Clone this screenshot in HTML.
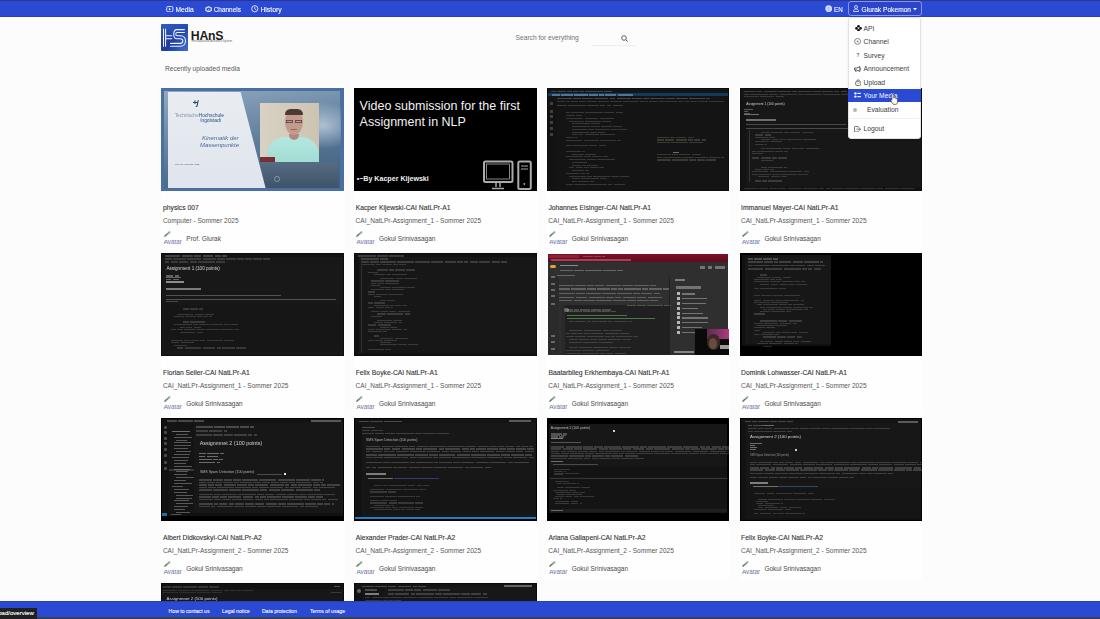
<!DOCTYPE html><html><head><meta charset="utf-8"><style>
*{box-sizing:border-box}
html,body{margin:0;padding:0}
body{width:1100px;height:619px;overflow:hidden;position:relative;background:#fcfcfc;font-family:"Liberation Sans", sans-serif}
.a{position:absolute}
.th{position:absolute;overflow:hidden;width:182.5px;height:102.6px}
.bl{filter:blur(0.35px)}
.ln{position:absolute;height:1px}
</style></head><body>
<div class="a" style="left:160.90px;top:87.70px;width:184.00px;height:162px;background:#fefefe"></div>
<div class="a" style="left:353.60px;top:87.70px;width:184.00px;height:162px;background:#fefefe"></div>
<div class="a" style="left:546.30px;top:87.70px;width:184.00px;height:162px;background:#fefefe"></div>
<div class="a" style="left:739.00px;top:87.70px;width:184.00px;height:162px;background:#fefefe"></div>
<div class="a" style="left:160.90px;top:252.90px;width:184.00px;height:162px;background:#fefefe"></div>
<div class="a" style="left:353.60px;top:252.90px;width:184.00px;height:162px;background:#fefefe"></div>
<div class="a" style="left:546.30px;top:252.90px;width:184.00px;height:162px;background:#fefefe"></div>
<div class="a" style="left:739.00px;top:252.90px;width:184.00px;height:162px;background:#fefefe"></div>
<div class="a" style="left:160.90px;top:417.80px;width:184.00px;height:162px;background:#fefefe"></div>
<div class="a" style="left:353.60px;top:417.80px;width:184.00px;height:162px;background:#fefefe"></div>
<div class="a" style="left:546.30px;top:417.80px;width:184.00px;height:162px;background:#fefefe"></div>
<div class="a" style="left:739.00px;top:417.80px;width:184.00px;height:162px;background:#fefefe"></div>
<div class="a" style="left:160.90px;top:582.80px;width:184.00px;height:40px;background:#fff"></div>
<div class="a" style="left:353.60px;top:582.80px;width:184.00px;height:40px;background:#fff"></div>
<div class="th bl" style="left:161.40px;top:88.20px"><div class="a" style="left:0.00px;top:0.00px;width:182.50px;height:102.60px;background:#4a6fa2;"></div><div class="a" style="left:3px;top:2.5px;width:176px;height:97.5px;background:linear-gradient(170deg,#92aac0 0%,#6f8ba8 35%,#4f6e90 70%,#3d5c80 100%)"></div><div class="a" style="left:120px;top:10px;width:60px;height:55px;background:radial-gradient(ellipse at 70% 50%,rgba(235,245,255,.55),rgba(235,245,255,0) 60%)"></div><div class="a" style="left:98.60px;top:74.20px;width:78.00px;height:25.80px;background:linear-gradient(180deg,#566c82,#3f5368);"></div><div class="a" style="left:113px;top:88px;width:5.5px;height:5.5px;border-radius:50%;border:0.8px solid rgba(190,200,215,.5)"></div><div class="a" style="left:6.2px;top:3.9px;width:98px;height:95.8px;background:linear-gradient(180deg,#e9edf2,#dfe5ec);clip-path:polygon(0 0,74.5% 0,100% 100%,0 100%)"></div><div class="a" style="left:98.60px;top:14.90px;width:59.30px;height:59.30px;background:linear-gradient(90deg,#d9d2c4,#cdc3b2);"></div><div class="a" style="left:106px;top:48.5px;width:52px;height:25.7px;background:linear-gradient(180deg,#b3e8df,#a3dcd3);border-radius:18px 18px 0 0"></div><div class="a" style="left:128px;top:46px;width:10px;height:6px;background:#b08a80;border-radius:0 0 5px 5px"></div><div class="a" style="left:123.8px;top:22px;width:18px;height:25px;background:#c39a8c;border-radius:46% 46% 50% 50%"></div><div class="a" style="left:123.5px;top:21px;width:18.6px;height:6px;background:#4d3a34;border-radius:9px 9px 1px 1px"></div><div class="a" style="left:125px;top:31.5px;width:7px;height:3.2px;border:0.5px solid rgba(60,50,50,.7)"></div><div class="a" style="left:133.5px;top:31.5px;width:7px;height:3.2px;border:0.5px solid rgba(60,50,50,.7)"></div><div class="a" style="left:130.00px;top:40.50px;width:6.00px;height:1.20px;background:rgba(120,70,60,.6);"></div><div class="a" style="left:98.60px;top:69.30px;width:15.00px;height:5.00px;background:#7a2e34;"></div><div style="position:absolute;left:31px;top:11px;font-size:8px;font-style:italic;font-weight:bold;color:#1f3c78;line-height:8px;letter-spacing:-0.5px">+j</div><div style="position:absolute;left:13.30px;top:24.37px;font-size:5.0px;line-height:5.0px;color:#8797b0;font-weight:400;white-space:nowrap;letter-spacing:-0.1px">Technische<span style="color:#2f528a">Hochschule</span></div><div style="position:absolute;left:38.80px;top:29.37px;font-size:5.0px;line-height:5.0px;color:#2f528a;font-weight:400;white-space:nowrap;letter-spacing:-0.1px">Ingolstadt</div><div style="position:absolute;left:40.50px;top:47.12px;font-size:6.0px;line-height:6.0px;color:#4d6890;font-weight:400;white-space:nowrap;font-style:italic">Kinematik der</div><div style="position:absolute;left:38.60px;top:54.12px;font-size:6.0px;line-height:6.0px;color:#4d6890;font-weight:400;white-space:nowrap;font-style:italic">Massenpunkte</div><div style="position:absolute;left:13.60px;top:76.17px;font-size:2.4px;line-height:2.4px;color:#556;font-weight:400;white-space:nowrap;">Prof. Dr. Thomas Haag</div></div>
<div style="position:absolute;left:163.00px;top:204.96px;font-size:6.78px;line-height:6.78px;color:#363636;font-weight:400;white-space:nowrap;-webkit-text-stroke:0.12px #363636">physics 007</div>
<div style="position:absolute;left:162.90px;top:218.06px;font-size:6.55px;line-height:6.55px;color:#585858;font-weight:400;white-space:nowrap;">Computer - Sommer 2025</div>
<svg class="a" style="left:163.70px;top:231.20px" width="7" height="6" viewBox="0 0 7 6"><path d="M1 5.2 L5.5 1.2" stroke="#7f9a80" stroke-width="1.7" stroke-linecap="round"/><path d="M1.2 4.6 L2.6 3.4" stroke="#4a7a3a" stroke-width="1"/><rect x="4.4" y="0.6" width="1.8" height="1.6" fill="#9ab0c8" transform="rotate(-40 5.3 1.4)"/></svg>
<div class="a" style="left:162.90px;top:239.50px;width:22px;height:6px;overflow:hidden"><div style="position:absolute;left:0.90px;top:-0.43px;font-size:6.3px;line-height:6.3px;color:#6f74a8;font-weight:400;white-space:nowrap;">Avatar</div></div>
<div style="position:absolute;left:186.30px;top:236.20px;font-size:6.5px;line-height:6.5px;color:#4a4a4a;font-weight:400;white-space:nowrap;">Prof. Glurak</div>
<div class="th" style="left:354.10px;top:88.20px"><div class="a" style="left:0.00px;top:0.00px;width:182.50px;height:102.60px;background:#000;"></div><div style="position:absolute;left:5.50px;top:12.02px;font-size:12.5px;line-height:12.5px;color:#f2f2f2;font-weight:400;white-space:nowrap;">Video submission for the first</div><div style="position:absolute;left:5.50px;top:27.32px;font-size:12.5px;line-height:12.5px;color:#f2f2f2;font-weight:400;white-space:nowrap;">Assignment in NLP</div><div style="position:absolute;left:2.60px;top:87.59px;font-size:7.1px;line-height:7.1px;color:#f0f0f0;font-weight:700;white-space:nowrap;">&bull;~By Kacper Kijewski</div><svg class="a" style="left:128px;top:72px" width="52" height="31" viewBox="0 0 52 31">
<rect x="2" y="1.5" width="28.5" height="20.5" rx="1.5" fill="none" stroke="#ababab" stroke-width="2"/>
<rect x="4.5" y="4" width="23" height="15" fill="none" stroke="#a8a8a8" stroke-width="0.8"/>
<path d="M14 22v5M18 22v5M10 28.5h12" stroke="#a8a8a8" stroke-width="1.5" fill="none"/>
<rect x="36.3" y="1.5" width="12.5" height="27.5" rx="1.5" fill="none" stroke="#ababab" stroke-width="2"/>
<path d="M39 6h7M39 9h7" stroke="#a8a8a8" stroke-width="1.1"/>
<circle cx="42.3" cy="24" r="0.9" fill="#a8a8a8"/>
</svg></div>
<div style="position:absolute;left:355.70px;top:204.96px;font-size:6.78px;line-height:6.78px;color:#363636;font-weight:400;white-space:nowrap;-webkit-text-stroke:0.12px #363636">Kacper Kijewski-CAI NatLPr-A1</div>
<div style="position:absolute;left:355.60px;top:218.06px;font-size:6.55px;line-height:6.55px;color:#585858;font-weight:400;white-space:nowrap;">CAI_NatLPr-Assignment_1 - Sommer 2025</div>
<svg class="a" style="left:356.40px;top:231.20px" width="7" height="6" viewBox="0 0 7 6"><path d="M1 5.2 L5.5 1.2" stroke="#7f9a80" stroke-width="1.7" stroke-linecap="round"/><path d="M1.2 4.6 L2.6 3.4" stroke="#4a7a3a" stroke-width="1"/><rect x="4.4" y="0.6" width="1.8" height="1.6" fill="#9ab0c8" transform="rotate(-40 5.3 1.4)"/></svg>
<div class="a" style="left:355.60px;top:239.50px;width:22px;height:6px;overflow:hidden"><div style="position:absolute;left:0.90px;top:-0.43px;font-size:6.3px;line-height:6.3px;color:#6f74a8;font-weight:400;white-space:nowrap;">Avatar</div></div>
<div style="position:absolute;left:379.00px;top:236.20px;font-size:6.5px;line-height:6.5px;color:#4a4a4a;font-weight:400;white-space:nowrap;">Gokul Srinivasagan</div>
<div class="th bl" style="left:546.80px;top:88.20px"><div class="a" style="left:0.00px;top:0.00px;width:182.50px;height:102.60px;background:#0d0d0d;"></div><div class="a" style="left:1.00px;top:1.00px;width:180.50px;height:100.60px;background:#141414;"></div><div class="a" style="left:1.00px;top:1.00px;width:180.50px;height:4.00px;background:#151515;"></div><div class="a" style="left:0;top:0;width:100%;height:100%;opacity:.75"><div class="a" style="left:4.00px;top:2.50px;width:5.01px;height:1.30px;background:rgba(200,200,200,.35);"></div><div class="a" style="left:10.21px;top:2.50px;width:9.12px;height:1.30px;background:rgba(200,200,200,.35);"></div><div class="a" style="left:20.53px;top:2.50px;width:4.52px;height:1.30px;background:rgba(200,200,200,.35);"></div><div class="a" style="left:26.26px;top:2.50px;width:4.98px;height:1.30px;background:rgba(200,200,200,.35);"></div><div class="a" style="left:32.44px;top:2.50px;width:4.83px;height:1.30px;background:rgba(200,200,200,.35);"></div><div class="a" style="left:38.46px;top:2.50px;width:17.26px;height:1.30px;background:rgba(200,200,200,.35);"></div><div class="a" style="left:56.93px;top:2.50px;width:8.58px;height:1.30px;background:rgba(200,200,200,.35);"></div></div><div class="a" style="left:1.00px;top:5.00px;width:180.50px;height:3.20px;background:#123a5e;"></div><div class="a" style="left:0;top:0;width:100%;height:100%;opacity:.75"><div class="a" style="left:5.00px;top:6.20px;width:8.05px;height:1.30px;background:rgba(170,200,230,.55);"></div><div class="a" style="left:14.25px;top:6.20px;width:11.99px;height:1.30px;background:rgba(170,200,230,.55);"></div><div class="a" style="left:27.45px;top:6.20px;width:13.55px;height:1.30px;background:rgba(170,200,230,.55);"></div><div class="a" style="left:42.20px;top:6.20px;width:9.21px;height:1.30px;background:rgba(170,200,230,.55);"></div><div class="a" style="left:52.61px;top:6.20px;width:4.88px;height:1.30px;background:rgba(170,200,230,.55);"></div><div class="a" style="left:58.69px;top:6.20px;width:10.95px;height:1.30px;background:rgba(170,200,230,.55);"></div><div class="a" style="left:70.84px;top:6.20px;width:14.88px;height:1.30px;background:rgba(170,200,230,.55);"></div></div><div class="a" style="left:1.00px;top:8.20px;width:180.50px;height:3.00px;background:#141414;"></div><div class="a" style="left:0;top:0;width:100%;height:100%;opacity:.75"><div class="a" style="left:10.00px;top:9.50px;width:15.12px;height:1.30px;background:rgba(200,200,200,.35);"></div><div class="a" style="left:26.32px;top:9.50px;width:7.42px;height:1.30px;background:rgba(200,200,200,.35);"></div><div class="a" style="left:34.94px;top:9.50px;width:11.35px;height:1.30px;background:rgba(200,200,200,.35);"></div><div class="a" style="left:47.49px;top:9.50px;width:14.21px;height:1.30px;background:rgba(200,200,200,.35);"></div><div class="a" style="left:62.90px;top:9.50px;width:5.65px;height:1.30px;background:rgba(200,200,200,.35);"></div><div class="a" style="left:69.76px;top:9.50px;width:14.60px;height:1.30px;background:rgba(200,200,200,.35);"></div><div class="a" style="left:85.56px;top:9.50px;width:9.90px;height:1.30px;background:rgba(200,200,200,.35);"></div><div class="a" style="left:96.66px;top:9.50px;width:5.09px;height:1.30px;background:rgba(200,200,200,.35);"></div><div class="a" style="left:102.95px;top:9.50px;width:15.05px;height:1.30px;background:rgba(200,200,200,.35);"></div><div class="a" style="left:119.19px;top:9.50px;width:8.76px;height:1.30px;background:rgba(200,200,200,.35);"></div><div class="a" style="left:129.16px;top:9.50px;width:12.12px;height:1.30px;background:rgba(200,200,200,.35);"></div><div class="a" style="left:142.47px;top:9.50px;width:15.76px;height:1.30px;background:rgba(200,200,200,.35);"></div><div class="a" style="left:159.43px;top:9.50px;width:4.18px;height:1.30px;background:rgba(200,200,200,.35);"></div></div><div class="a" style="left:0;top:0;width:100%;height:100%;opacity:.75"><div class="a" style="left:10.00px;top:13.00px;width:7.98px;height:1.30px;background:rgba(200,200,200,.25);"></div><div class="a" style="left:19.18px;top:13.00px;width:4.32px;height:1.30px;background:rgba(200,200,200,.25);"></div><div class="a" style="left:24.70px;top:13.00px;width:6.35px;height:1.30px;background:rgba(200,200,200,.25);"></div><div class="a" style="left:32.25px;top:13.00px;width:7.05px;height:1.30px;background:rgba(200,200,200,.25);"></div><div class="a" style="left:40.51px;top:13.00px;width:9.57px;height:1.30px;background:rgba(200,200,200,.25);"></div><div class="a" style="left:51.28px;top:13.00px;width:10.95px;height:1.30px;background:rgba(200,200,200,.25);"></div><div class="a" style="left:63.43px;top:13.00px;width:11.69px;height:1.30px;background:rgba(200,200,200,.25);"></div><div class="a" style="left:76.32px;top:13.00px;width:15.47px;height:1.30px;background:rgba(200,200,200,.25);"></div><div class="a" style="left:92.99px;top:13.00px;width:7.90px;height:1.30px;background:rgba(200,200,200,.25);"></div><div class="a" style="left:102.09px;top:13.00px;width:9.02px;height:1.30px;background:rgba(200,200,200,.25);"></div><div class="a" style="left:112.31px;top:13.00px;width:17.41px;height:1.30px;background:rgba(200,200,200,.25);"></div><div class="a" style="left:130.92px;top:13.00px;width:6.12px;height:1.30px;background:rgba(200,200,200,.25);"></div><div class="a" style="left:138.24px;top:13.00px;width:4.17px;height:1.30px;background:rgba(200,200,200,.25);"></div><div class="a" style="left:143.61px;top:13.00px;width:6.55px;height:1.30px;background:rgba(200,200,200,.25);"></div><div class="a" style="left:151.36px;top:13.00px;width:9.87px;height:1.30px;background:rgba(200,200,200,.25);"></div><div class="a" style="left:162.43px;top:13.00px;width:14.59px;height:1.30px;background:rgba(200,200,200,.25);"></div></div><div class="a" style="left:0;top:0;width:100%;height:100%;opacity:.75"><div class="a" style="left:10.00px;top:16.50px;width:10.39px;height:1.30px;background:rgba(200,200,200,.3);"></div><div class="a" style="left:21.59px;top:16.50px;width:17.33px;height:1.30px;background:rgba(200,200,200,.3);"></div><div class="a" style="left:40.12px;top:16.50px;width:11.83px;height:1.30px;background:rgba(200,200,200,.3);"></div><div class="a" style="left:53.15px;top:16.50px;width:5.45px;height:1.30px;background:rgba(200,200,200,.3);"></div><div class="a" style="left:59.80px;top:16.50px;width:4.87px;height:1.30px;background:rgba(200,200,200,.3);"></div><div class="a" style="left:65.87px;top:16.50px;width:10.17px;height:1.30px;background:rgba(200,200,200,.3);"></div></div><div class="a" style="left:1.00px;top:11.00px;width:8.00px;height:90.60px;background:#121212;"></div><div class="a" style="left:3.50px;top:14.00px;width:3.00px;height:2.50px;background:rgba(150,150,150,.35);"></div><div class="a" style="left:3.50px;top:22.00px;width:3.00px;height:2.50px;background:rgba(150,150,150,.35);"></div><div class="a" style="left:3.50px;top:27.00px;width:3.00px;height:2.50px;background:rgba(150,150,150,.35);"></div><div class="a" style="left:3.50px;top:33.00px;width:3.00px;height:2.50px;background:rgba(150,150,150,.35);"></div><div class="a" style="left:3.50px;top:39.00px;width:3.00px;height:2.50px;background:rgba(150,150,150,.35);"></div><div class="a" style="left:3.50px;top:45.00px;width:3.00px;height:2.50px;background:rgba(150,150,150,.35);"></div><div class="a" style="left:0;top:0;width:100%;height:100%;opacity:.75"><div class="a" style="left:19.00px;top:24.25px;width:4.36px;height:1.00px;background:rgba(210,200,180,.26);"></div><div class="a" style="left:24.56px;top:24.25px;width:12.60px;height:1.00px;background:rgba(170,195,170,.28);"></div><div class="a" style="left:38.35px;top:24.25px;width:17.38px;height:1.00px;background:rgba(210,200,180,.26);"></div><div class="a" style="left:56.93px;top:24.25px;width:10.64px;height:1.00px;background:rgba(185,200,215,.28);"></div><div class="a" style="left:68.77px;top:24.25px;width:7.68px;height:1.00px;background:rgba(210,200,180,.26);"></div><div class="a" style="left:19.00px;top:27.00px;width:8.80px;height:1.00px;background:rgba(180,180,180,.3);"></div><div class="a" style="left:29.00px;top:27.00px;width:6.26px;height:1.00px;background:rgba(210,200,180,.26);"></div><div class="a" style="left:19.00px;top:29.75px;width:17.70px;height:1.00px;background:rgba(170,195,170,.28);"></div><div class="a" style="left:37.90px;top:29.75px;width:13.75px;height:1.00px;background:rgba(170,195,170,.28);"></div><div class="a" style="left:52.85px;top:29.75px;width:14.06px;height:1.00px;background:rgba(200,200,200,.26);"></div><div class="a" style="left:22.00px;top:32.50px;width:15.36px;height:1.00px;background:rgba(210,200,180,.26);"></div><div class="a" style="left:38.56px;top:32.50px;width:15.94px;height:1.00px;background:rgba(210,200,180,.26);"></div><div class="a" style="left:55.70px;top:32.50px;width:8.12px;height:1.00px;background:rgba(210,200,180,.26);"></div><div class="a" style="left:25.00px;top:35.25px;width:17.85px;height:1.00px;background:rgba(190,190,190,.28);"></div><div class="a" style="left:44.05px;top:35.25px;width:8.72px;height:1.00px;background:rgba(210,200,180,.26);"></div><div class="a" style="left:25.00px;top:38.00px;width:17.83px;height:1.00px;background:rgba(180,180,180,.3);"></div><div class="a" style="left:44.03px;top:38.00px;width:9.10px;height:1.00px;background:rgba(200,200,200,.26);"></div><div class="a" style="left:54.34px;top:38.00px;width:10.58px;height:1.00px;background:rgba(185,200,215,.28);"></div><div class="a" style="left:66.12px;top:38.00px;width:9.31px;height:1.00px;background:rgba(180,180,180,.3);"></div><div class="a" style="left:25.00px;top:40.75px;width:15.20px;height:1.00px;background:rgba(180,180,180,.3);"></div><div class="a" style="left:41.40px;top:40.75px;width:5.68px;height:1.00px;background:rgba(180,180,180,.3);"></div><div class="a" style="left:48.27px;top:40.75px;width:14.50px;height:1.00px;background:rgba(170,195,170,.28);"></div><div class="a" style="left:63.98px;top:40.75px;width:6.50px;height:1.00px;background:rgba(170,195,170,.28);"></div><div class="a" style="left:71.67px;top:40.75px;width:8.66px;height:1.00px;background:rgba(170,195,170,.28);"></div><div class="a" style="left:25.00px;top:43.50px;width:17.26px;height:1.00px;background:rgba(180,180,180,.3);"></div><div class="a" style="left:43.46px;top:43.50px;width:6.38px;height:1.00px;background:rgba(200,200,200,.26);"></div><div class="a" style="left:51.04px;top:43.50px;width:7.12px;height:1.00px;background:rgba(180,180,180,.3);"></div><div class="a" style="left:25.00px;top:46.25px;width:6.18px;height:1.00px;background:rgba(170,195,170,.28);"></div><div class="a" style="left:32.38px;top:46.25px;width:4.30px;height:1.00px;background:rgba(170,195,170,.28);"></div><div class="a" style="left:37.88px;top:46.25px;width:14.17px;height:1.00px;background:rgba(180,180,180,.3);"></div><div class="a" style="left:53.25px;top:46.25px;width:14.61px;height:1.00px;background:rgba(170,195,170,.28);"></div><div class="a" style="left:19.00px;top:49.00px;width:8.10px;height:1.00px;background:rgba(210,200,180,.26);"></div><div class="a" style="left:28.30px;top:49.00px;width:2.10px;height:1.00px;background:rgba(200,200,200,.26);"></div><div class="a" style="left:19.00px;top:51.75px;width:16.57px;height:1.00px;background:rgba(170,195,170,.28);"></div><div class="a" style="left:36.77px;top:51.75px;width:15.41px;height:1.00px;background:rgba(170,195,170,.28);"></div><div class="a" style="left:53.38px;top:51.75px;width:15.58px;height:1.00px;background:rgba(170,195,170,.28);"></div><div class="a" style="left:70.16px;top:51.75px;width:4.34px;height:1.00px;background:rgba(210,200,180,.26);"></div><div class="a" style="left:19.00px;top:57.25px;width:6.41px;height:1.00px;background:rgba(200,200,200,.26);"></div><div class="a" style="left:26.61px;top:57.25px;width:14.15px;height:1.00px;background:rgba(200,200,200,.26);"></div><div class="a" style="left:41.97px;top:57.25px;width:8.56px;height:1.00px;background:rgba(200,200,200,.26);"></div><div class="a" style="left:51.73px;top:57.25px;width:7.70px;height:1.00px;background:rgba(200,200,200,.26);"></div><div class="a" style="left:19.00px;top:62.75px;width:14.81px;height:1.00px;background:rgba(190,190,190,.28);"></div><div class="a" style="left:35.01px;top:62.75px;width:3.55px;height:1.00px;background:rgba(190,190,190,.28);"></div><div class="a" style="left:25.00px;top:65.50px;width:12.49px;height:1.00px;background:rgba(170,195,170,.28);"></div><div class="a" style="left:38.69px;top:65.50px;width:10.33px;height:1.00px;background:rgba(210,200,180,.26);"></div><div class="a" style="left:19.00px;top:68.25px;width:16.92px;height:1.00px;background:rgba(170,195,170,.28);"></div><div class="a" style="left:37.12px;top:68.25px;width:6.84px;height:1.00px;background:rgba(170,195,170,.28);"></div><div class="a" style="left:45.16px;top:68.25px;width:9.83px;height:1.00px;background:rgba(170,195,170,.28);"></div><div class="a" style="left:56.19px;top:68.25px;width:5.02px;height:1.00px;background:rgba(190,190,190,.28);"></div><div class="a" style="left:22.00px;top:71.00px;width:17.15px;height:1.00px;background:rgba(200,200,200,.26);"></div><div class="a" style="left:40.35px;top:71.00px;width:9.13px;height:1.00px;background:rgba(200,200,200,.26);"></div><div class="a" style="left:50.68px;top:71.00px;width:17.55px;height:1.00px;background:rgba(190,190,190,.28);"></div><div class="a" style="left:25.00px;top:73.75px;width:15.65px;height:1.00px;background:rgba(185,200,215,.28);"></div><div class="a" style="left:25.00px;top:76.50px;width:8.99px;height:1.00px;background:rgba(170,195,170,.28);"></div><div class="a" style="left:35.19px;top:76.50px;width:4.27px;height:1.00px;background:rgba(200,200,200,.26);"></div><div class="a" style="left:40.67px;top:76.50px;width:10.17px;height:1.00px;background:rgba(170,195,170,.28);"></div><div class="a" style="left:22.00px;top:79.25px;width:5.58px;height:1.00px;background:rgba(190,190,190,.28);"></div><div class="a" style="left:28.78px;top:79.25px;width:7.20px;height:1.00px;background:rgba(190,190,190,.28);"></div><div class="a" style="left:37.18px;top:79.25px;width:5.18px;height:1.00px;background:rgba(200,200,200,.26);"></div><div class="a" style="left:43.56px;top:79.25px;width:7.79px;height:1.00px;background:rgba(185,200,215,.28);"></div><div class="a" style="left:52.54px;top:79.25px;width:5.07px;height:1.00px;background:rgba(190,190,190,.28);"></div><div class="a" style="left:25.00px;top:82.00px;width:11.99px;height:1.00px;background:rgba(210,200,180,.26);"></div><div class="a" style="left:38.19px;top:82.00px;width:4.28px;height:1.00px;background:rgba(180,180,180,.3);"></div><div class="a" style="left:19.00px;top:84.75px;width:12.88px;height:1.00px;background:rgba(190,190,190,.28);"></div><div class="a" style="left:33.08px;top:84.75px;width:5.17px;height:1.00px;background:rgba(190,190,190,.28);"></div><div class="a" style="left:39.45px;top:84.75px;width:2.99px;height:1.00px;background:rgba(190,190,190,.28);"></div><div class="a" style="left:22.00px;top:87.50px;width:16.97px;height:1.00px;background:rgba(200,200,200,.26);"></div><div class="a" style="left:40.17px;top:87.50px;width:4.60px;height:1.00px;background:rgba(185,200,215,.28);"></div><div class="a" style="left:45.98px;top:87.50px;width:17.13px;height:1.00px;background:rgba(185,200,215,.28);"></div><div class="a" style="left:64.31px;top:87.50px;width:7.67px;height:1.00px;background:rgba(170,195,170,.28);"></div><div class="a" style="left:73.18px;top:87.50px;width:8.54px;height:1.00px;background:rgba(185,200,215,.28);"></div><div class="a" style="left:25.00px;top:90.25px;width:7.79px;height:1.00px;background:rgba(200,200,200,.26);"></div><div class="a" style="left:33.99px;top:90.25px;width:17.92px;height:1.00px;background:rgba(190,190,190,.28);"></div><div class="a" style="left:53.11px;top:90.25px;width:6.89px;height:1.00px;background:rgba(200,200,200,.26);"></div><div class="a" style="left:25.00px;top:93.00px;width:5.49px;height:1.00px;background:rgba(185,200,215,.28);"></div><div class="a" style="left:31.69px;top:93.00px;width:10.05px;height:1.00px;background:rgba(185,200,215,.28);"></div><div class="a" style="left:42.94px;top:93.00px;width:4.35px;height:1.00px;background:rgba(210,200,180,.26);"></div><div class="a" style="left:19.00px;top:95.75px;width:6.78px;height:1.00px;background:rgba(170,195,170,.28);"></div><div class="a" style="left:26.98px;top:95.75px;width:14.20px;height:1.00px;background:rgba(170,195,170,.28);"></div><div class="a" style="left:42.38px;top:95.75px;width:17.75px;height:1.00px;background:rgba(170,195,170,.28);"></div><div class="a" style="left:61.33px;top:95.75px;width:4.20px;height:1.00px;background:rgba(170,195,170,.28);"></div><div class="a" style="left:66.73px;top:95.75px;width:11.39px;height:1.00px;background:rgba(170,195,170,.28);"></div></div><div class="a" style="left:0;top:0;width:100%;height:100%;opacity:.75"><div class="a" style="left:110.00px;top:48.50px;width:12.38px;height:1.30px;background:rgba(170,190,160,.3);"></div><div class="a" style="left:123.58px;top:48.50px;width:4.63px;height:1.30px;background:rgba(170,190,160,.3);"></div><div class="a" style="left:129.42px;top:48.50px;width:10.24px;height:1.30px;background:rgba(170,190,160,.3);"></div><div class="a" style="left:140.86px;top:48.50px;width:6.76px;height:1.30px;background:rgba(170,190,160,.3);"></div><div class="a" style="left:110.00px;top:51.25px;width:7.05px;height:1.30px;background:rgba(170,190,160,.3);"></div><div class="a" style="left:118.25px;top:51.25px;width:9.34px;height:1.30px;background:rgba(170,190,160,.3);"></div><div class="a" style="left:128.79px;top:51.25px;width:11.04px;height:1.30px;background:rgba(170,190,160,.3);"></div><div class="a" style="left:141.03px;top:51.25px;width:5.27px;height:1.30px;background:rgba(170,190,160,.3);"></div><div class="a" style="left:147.50px;top:51.25px;width:6.01px;height:1.30px;background:rgba(170,190,160,.3);"></div><div class="a" style="left:154.72px;top:51.25px;width:4.60px;height:1.30px;background:rgba(170,190,160,.3);"></div><div class="a" style="left:110.00px;top:54.00px;width:13.21px;height:1.30px;background:rgba(170,190,160,.3);"></div><div class="a" style="left:124.41px;top:54.00px;width:16.31px;height:1.30px;background:rgba(170,190,160,.3);"></div><div class="a" style="left:141.91px;top:54.00px;width:14.09px;height:1.30px;background:rgba(170,190,160,.3);"></div></div><div class="a" style="left:0;top:0;width:100%;height:100%;opacity:.75"><div class="a" style="left:110.00px;top:65.75px;width:14.27px;height:1.30px;background:rgba(170,190,160,.3);"></div><div class="a" style="left:125.47px;top:65.75px;width:5.95px;height:1.30px;background:rgba(170,190,160,.3);"></div><div class="a" style="left:132.62px;top:65.75px;width:11.06px;height:1.30px;background:rgba(170,190,160,.3);"></div><div class="a" style="left:144.89px;top:65.75px;width:9.46px;height:1.30px;background:rgba(170,190,160,.3);"></div><div class="a" style="left:110.00px;top:68.50px;width:5.19px;height:1.30px;background:rgba(170,190,160,.3);"></div><div class="a" style="left:116.39px;top:68.50px;width:17.43px;height:1.30px;background:rgba(170,190,160,.3);"></div><div class="a" style="left:135.02px;top:68.50px;width:11.82px;height:1.30px;background:rgba(170,190,160,.3);"></div><div class="a" style="left:148.04px;top:68.50px;width:12.77px;height:1.30px;background:rgba(170,190,160,.3);"></div><div class="a" style="left:162.01px;top:68.50px;width:10.85px;height:1.30px;background:rgba(170,190,160,.3);"></div><div class="a" style="left:174.06px;top:68.50px;width:2.72px;height:1.30px;background:rgba(170,190,160,.3);"></div><div class="a" style="left:110.00px;top:71.25px;width:14.44px;height:1.30px;background:rgba(170,190,160,.3);"></div><div class="a" style="left:125.64px;top:71.25px;width:15.33px;height:1.30px;background:rgba(170,190,160,.3);"></div><div class="a" style="left:142.17px;top:71.25px;width:7.29px;height:1.30px;background:rgba(170,190,160,.3);"></div><div class="a" style="left:150.66px;top:71.25px;width:7.23px;height:1.30px;background:rgba(170,190,160,.3);"></div><div class="a" style="left:159.09px;top:71.25px;width:10.44px;height:1.30px;background:rgba(170,190,160,.3);"></div></div><div class="a" style="left:126.00px;top:63.50px;width:6.00px;height:1.80px;background:rgba(200,200,200,.5);"></div></div>
<div style="position:absolute;left:548.40px;top:204.96px;font-size:6.78px;line-height:6.78px;color:#363636;font-weight:400;white-space:nowrap;-webkit-text-stroke:0.12px #363636">Johannes Elsinger-CAI NatLPr-A1</div>
<div style="position:absolute;left:548.30px;top:218.06px;font-size:6.55px;line-height:6.55px;color:#585858;font-weight:400;white-space:nowrap;">CAI_NatLPr-Assignment_1 - Sommer 2025</div>
<svg class="a" style="left:549.10px;top:231.20px" width="7" height="6" viewBox="0 0 7 6"><path d="M1 5.2 L5.5 1.2" stroke="#7f9a80" stroke-width="1.7" stroke-linecap="round"/><path d="M1.2 4.6 L2.6 3.4" stroke="#4a7a3a" stroke-width="1"/><rect x="4.4" y="0.6" width="1.8" height="1.6" fill="#9ab0c8" transform="rotate(-40 5.3 1.4)"/></svg>
<div class="a" style="left:548.30px;top:239.50px;width:22px;height:6px;overflow:hidden"><div style="position:absolute;left:0.90px;top:-0.43px;font-size:6.3px;line-height:6.3px;color:#6f74a8;font-weight:400;white-space:nowrap;">Avatar</div></div>
<div style="position:absolute;left:571.70px;top:236.20px;font-size:6.5px;line-height:6.5px;color:#4a4a4a;font-weight:400;white-space:nowrap;">Gokul Srinivasagan</div>
<div class="th bl" style="left:739.50px;top:88.20px"><div class="a" style="left:0.00px;top:0.00px;width:182.50px;height:102.60px;background:#0d0d0d;"></div><div class="a" style="left:1.00px;top:1.00px;width:180.50px;height:100.60px;background:#171717;"></div><div class="a" style="left:1.00px;top:1.00px;width:180.50px;height:3.00px;background:#141414;"></div><div class="a" style="left:0;top:0;width:100%;height:100%;opacity:.75"><div class="a" style="left:4.00px;top:2.50px;width:12.64px;height:1.30px;background:rgba(200,200,200,.3);"></div><div class="a" style="left:17.84px;top:2.50px;width:5.08px;height:1.30px;background:rgba(200,200,200,.3);"></div><div class="a" style="left:24.12px;top:2.50px;width:13.12px;height:1.30px;background:rgba(200,200,200,.3);"></div><div class="a" style="left:38.44px;top:2.50px;width:12.70px;height:1.30px;background:rgba(200,200,200,.3);"></div><div class="a" style="left:52.34px;top:2.50px;width:4.85px;height:1.30px;background:rgba(200,200,200,.3);"></div><div class="a" style="left:58.39px;top:2.50px;width:13.69px;height:1.30px;background:rgba(200,200,200,.3);"></div><div class="a" style="left:73.28px;top:2.50px;width:8.07px;height:1.30px;background:rgba(200,200,200,.3);"></div><div class="a" style="left:82.55px;top:2.50px;width:10.51px;height:1.30px;background:rgba(200,200,200,.3);"></div><div class="a" style="left:94.26px;top:2.50px;width:5.66px;height:1.30px;background:rgba(200,200,200,.3);"></div><div class="a" style="left:101.12px;top:2.50px;width:6.79px;height:1.30px;background:rgba(200,200,200,.3);"></div></div><div class="a" style="left:0;top:0;width:100%;height:100%;opacity:.75"><div class="a" style="left:4.00px;top:5.50px;width:5.07px;height:1.30px;background:rgba(200,200,200,.25);"></div><div class="a" style="left:10.27px;top:5.50px;width:17.92px;height:1.30px;background:rgba(200,200,200,.25);"></div><div class="a" style="left:29.40px;top:5.50px;width:9.42px;height:1.30px;background:rgba(200,200,200,.25);"></div><div class="a" style="left:40.01px;top:5.50px;width:17.03px;height:1.30px;background:rgba(200,200,200,.25);"></div><div class="a" style="left:58.24px;top:5.50px;width:5.98px;height:1.30px;background:rgba(200,200,200,.25);"></div><div class="a" style="left:65.42px;top:5.50px;width:17.34px;height:1.30px;background:rgba(200,200,200,.25);"></div><div class="a" style="left:83.96px;top:5.50px;width:16.42px;height:1.30px;background:rgba(200,200,200,.25);"></div><div class="a" style="left:101.58px;top:5.50px;width:7.24px;height:1.30px;background:rgba(200,200,200,.25);"></div><div class="a" style="left:110.02px;top:5.50px;width:10.81px;height:1.30px;background:rgba(200,200,200,.25);"></div><div class="a" style="left:122.02px;top:5.50px;width:17.30px;height:1.30px;background:rgba(200,200,200,.25);"></div><div class="a" style="left:140.52px;top:5.50px;width:9.68px;height:1.30px;background:rgba(200,200,200,.25);"></div><div class="a" style="left:151.40px;top:5.50px;width:9.83px;height:1.30px;background:rgba(200,200,200,.25);"></div></div><div class="a" style="left:0;top:0;width:100%;height:100%;opacity:.75"><div class="a" style="left:4.00px;top:8.00px;width:15.75px;height:1.30px;background:rgba(200,200,200,.25);"></div><div class="a" style="left:20.95px;top:8.00px;width:13.98px;height:1.30px;background:rgba(200,200,200,.25);"></div><div class="a" style="left:36.13px;top:8.00px;width:7.90px;height:1.30px;background:rgba(200,200,200,.25);"></div></div><div class="a" style="left:1.00px;top:10.00px;width:5.00px;height:91.60px;background:#131313;"></div><div style="position:absolute;left:6.80px;top:14.71px;font-size:3.3px;line-height:3.3px;color:rgba(235,235,235,.8);font-weight:400;white-space:nowrap;">Assignment 1 (100 points)</div><div class="a" style="left:0;top:0;width:100%;height:100%;opacity:.75"><div class="a" style="left:4.00px;top:21.00px;width:9.05px;height:1.30px;background:rgba(220,220,220,.45);"></div><div class="a" style="left:4.00px;top:22.70px;width:4.72px;height:1.30px;background:rgba(220,220,220,.45);"></div><div class="a" style="left:4.00px;top:24.40px;width:6.89px;height:1.30px;background:rgba(220,220,220,.45);"></div></div><div class="a" style="left:4.00px;top:26.00px;width:15.00px;height:1.20px;background:rgba(220,220,220,.45);"></div><div class="a" style="left:6.50px;top:31.00px;width:30.00px;height:1.40px;background:rgba(220,220,220,.45);"></div><div class="a" style="left:6.50px;top:36.00px;width:100.00px;height:0.90px;background:rgba(190,190,190,.3);"></div><div class="a" style="left:6.50px;top:39.50px;width:110.00px;height:0.90px;background:rgba(190,190,190,.3);"></div><div class="a" style="left:9.00px;top:42.00px;width:1.00px;height:52.00px;background:rgba(140,140,140,.25);"></div><div class="a" style="left:0;top:0;width:100%;height:100%;opacity:.75"><div class="a" style="left:21.00px;top:44.00px;width:9.60px;height:1.10px;background:rgba(180,180,180,.3);"></div><div class="a" style="left:31.80px;top:44.00px;width:11.76px;height:1.10px;background:rgba(190,190,190,.28);"></div><div class="a" style="left:44.76px;top:44.00px;width:4.69px;height:1.10px;background:rgba(180,180,180,.3);"></div><div class="a" style="left:50.65px;top:44.00px;width:10.31px;height:1.10px;background:rgba(180,180,180,.3);"></div><div class="a" style="left:62.16px;top:44.00px;width:12.82px;height:1.10px;background:rgba(190,190,190,.28);"></div><div class="a" style="left:15.00px;top:46.30px;width:8.81px;height:1.10px;background:rgba(180,180,180,.3);"></div><div class="a" style="left:25.01px;top:46.30px;width:6.87px;height:1.10px;background:rgba(185,200,215,.28);"></div><div class="a" style="left:15.00px;top:48.60px;width:13.36px;height:1.10px;background:rgba(180,180,180,.3);"></div><div class="a" style="left:29.56px;top:48.60px;width:6.26px;height:1.10px;background:rgba(185,200,215,.28);"></div><div class="a" style="left:21.00px;top:50.90px;width:9.98px;height:1.10px;background:rgba(185,200,215,.28);"></div><div class="a" style="left:32.18px;top:50.90px;width:7.42px;height:1.10px;background:rgba(210,200,180,.26);"></div><div class="a" style="left:40.80px;top:50.90px;width:5.28px;height:1.10px;background:rgba(170,195,170,.28);"></div><div class="a" style="left:47.28px;top:50.90px;width:15.33px;height:1.10px;background:rgba(190,190,190,.28);"></div><div class="a" style="left:63.81px;top:50.90px;width:12.32px;height:1.10px;background:rgba(185,200,215,.28);"></div><div class="a" style="left:15.00px;top:53.20px;width:14.53px;height:1.10px;background:rgba(170,195,170,.28);"></div><div class="a" style="left:30.73px;top:53.20px;width:11.87px;height:1.10px;background:rgba(180,180,180,.3);"></div><div class="a" style="left:15.00px;top:55.50px;width:9.38px;height:1.10px;background:rgba(200,200,200,.26);"></div><div class="a" style="left:25.58px;top:55.50px;width:2.23px;height:1.10px;background:rgba(190,190,190,.28);"></div><div class="a" style="left:21.00px;top:60.10px;width:4.00px;height:1.10px;background:rgba(210,200,180,.26);"></div><div class="a" style="left:26.20px;top:60.10px;width:15.98px;height:1.10px;background:rgba(185,200,215,.28);"></div><div class="a" style="left:43.38px;top:60.10px;width:7.48px;height:1.10px;background:rgba(200,200,200,.26);"></div><div class="a" style="left:52.06px;top:60.10px;width:6.13px;height:1.10px;background:rgba(185,200,215,.28);"></div><div class="a" style="left:59.39px;top:60.10px;width:5.52px;height:1.10px;background:rgba(185,200,215,.28);"></div><div class="a" style="left:66.11px;top:60.10px;width:13.24px;height:1.10px;background:rgba(185,200,215,.28);"></div><div class="a" style="left:12.00px;top:62.40px;width:4.02px;height:1.10px;background:rgba(210,200,180,.26);"></div><div class="a" style="left:17.22px;top:62.40px;width:16.88px;height:1.10px;background:rgba(190,190,190,.28);"></div><div class="a" style="left:35.30px;top:62.40px;width:8.25px;height:1.10px;background:rgba(170,195,170,.28);"></div><div class="a" style="left:44.75px;top:62.40px;width:3.93px;height:1.10px;background:rgba(190,190,190,.28);"></div><div class="a" style="left:12.00px;top:64.70px;width:11.66px;height:1.10px;background:rgba(170,195,170,.28);"></div><div class="a" style="left:12.00px;top:69.30px;width:7.90px;height:1.10px;background:rgba(200,200,200,.26);"></div><div class="a" style="left:21.10px;top:69.30px;width:10.65px;height:1.10px;background:rgba(200,200,200,.26);"></div><div class="a" style="left:32.95px;top:69.30px;width:4.41px;height:1.10px;background:rgba(185,200,215,.28);"></div><div class="a" style="left:38.56px;top:69.30px;width:9.38px;height:1.10px;background:rgba(200,200,200,.26);"></div><div class="a" style="left:21.00px;top:71.60px;width:12.22px;height:1.10px;background:rgba(200,200,200,.26);"></div><div class="a" style="left:21.00px;top:78.50px;width:6.77px;height:1.10px;background:rgba(185,200,215,.28);"></div><div class="a" style="left:28.97px;top:78.50px;width:14.35px;height:1.10px;background:rgba(185,200,215,.28);"></div><div class="a" style="left:44.52px;top:78.50px;width:3.32px;height:1.10px;background:rgba(185,200,215,.28);"></div><div class="a" style="left:15.00px;top:80.80px;width:7.71px;height:1.10px;background:rgba(200,200,200,.26);"></div><div class="a" style="left:23.91px;top:80.80px;width:5.53px;height:1.10px;background:rgba(200,200,200,.26);"></div><div class="a" style="left:30.64px;top:80.80px;width:4.37px;height:1.10px;background:rgba(200,200,200,.26);"></div><div class="a" style="left:12.00px;top:83.10px;width:16.91px;height:1.10px;background:rgba(190,190,190,.28);"></div><div class="a" style="left:30.11px;top:83.10px;width:17.64px;height:1.10px;background:rgba(190,190,190,.28);"></div><div class="a" style="left:48.94px;top:83.10px;width:13.94px;height:1.10px;background:rgba(185,200,215,.28);"></div><div class="a" style="left:64.08px;top:83.10px;width:5.25px;height:1.10px;background:rgba(200,200,200,.26);"></div><div class="a" style="left:12.00px;top:85.40px;width:6.67px;height:1.10px;background:rgba(170,195,170,.28);"></div><div class="a" style="left:19.87px;top:85.40px;width:11.35px;height:1.10px;background:rgba(170,195,170,.28);"></div><div class="a" style="left:32.42px;top:85.40px;width:8.37px;height:1.10px;background:rgba(170,195,170,.28);"></div><div class="a" style="left:41.98px;top:85.40px;width:15.75px;height:1.10px;background:rgba(170,195,170,.28);"></div><div class="a" style="left:58.93px;top:85.40px;width:9.51px;height:1.10px;background:rgba(190,190,190,.28);"></div><div class="a" style="left:18.00px;top:87.70px;width:11.86px;height:1.10px;background:rgba(190,190,190,.28);"></div><div class="a" style="left:31.06px;top:87.70px;width:9.32px;height:1.10px;background:rgba(190,190,190,.28);"></div><div class="a" style="left:41.58px;top:87.70px;width:6.27px;height:1.10px;background:rgba(190,190,190,.28);"></div><div class="a" style="left:15.00px;top:92.30px;width:6.70px;height:1.10px;background:rgba(185,200,215,.28);"></div><div class="a" style="left:22.90px;top:92.30px;width:4.42px;height:1.10px;background:rgba(185,200,215,.28);"></div><div class="a" style="left:28.53px;top:92.30px;width:13.85px;height:1.10px;background:rgba(185,200,215,.28);"></div></div><div class="a" style="left:0;top:0;width:100%;height:100%;opacity:.75"></div><div class="a" style="left:1.00px;top:99.10px;width:180.50px;height:2.50px;background:#121212;"></div><div class="a" style="left:0;top:0;width:100%;height:100%;opacity:.75"><div class="a" style="left:4.00px;top:99.80px;width:14.46px;height:1.30px;background:rgba(200,200,200,.25);"></div><div class="a" style="left:19.66px;top:99.80px;width:8.75px;height:1.30px;background:rgba(200,200,200,.25);"></div><div class="a" style="left:29.61px;top:99.80px;width:7.67px;height:1.30px;background:rgba(200,200,200,.25);"></div><div class="a" style="left:38.48px;top:99.80px;width:8.43px;height:1.30px;background:rgba(200,200,200,.25);"></div><div class="a" style="left:48.11px;top:99.80px;width:14.10px;height:1.30px;background:rgba(200,200,200,.25);"></div><div class="a" style="left:63.41px;top:99.80px;width:15.28px;height:1.30px;background:rgba(200,200,200,.25);"></div><div class="a" style="left:79.89px;top:99.80px;width:4.91px;height:1.30px;background:rgba(200,200,200,.25);"></div><div class="a" style="left:86.01px;top:99.80px;width:5.50px;height:1.30px;background:rgba(200,200,200,.25);"></div><div class="a" style="left:92.71px;top:99.80px;width:10.52px;height:1.30px;background:rgba(200,200,200,.25);"></div><div class="a" style="left:104.43px;top:99.80px;width:15.06px;height:1.30px;background:rgba(200,200,200,.25);"></div><div class="a" style="left:120.69px;top:99.80px;width:15.41px;height:1.30px;background:rgba(200,200,200,.25);"></div><div class="a" style="left:137.29px;top:99.80px;width:6.56px;height:1.30px;background:rgba(200,200,200,.25);"></div><div class="a" style="left:145.05px;top:99.80px;width:14.34px;height:1.30px;background:rgba(200,200,200,.25);"></div><div class="a" style="left:160.59px;top:99.80px;width:13.72px;height:1.30px;background:rgba(200,200,200,.25);"></div></div></div>
<div style="position:absolute;left:741.10px;top:204.96px;font-size:6.78px;line-height:6.78px;color:#363636;font-weight:400;white-space:nowrap;-webkit-text-stroke:0.12px #363636">Immanuel Mayer-CAI NatLPr-A1</div>
<div style="position:absolute;left:741.00px;top:218.06px;font-size:6.55px;line-height:6.55px;color:#585858;font-weight:400;white-space:nowrap;">CAI_NatLPr-Assignment_1 - Sommer 2025</div>
<svg class="a" style="left:741.80px;top:231.20px" width="7" height="6" viewBox="0 0 7 6"><path d="M1 5.2 L5.5 1.2" stroke="#7f9a80" stroke-width="1.7" stroke-linecap="round"/><path d="M1.2 4.6 L2.6 3.4" stroke="#4a7a3a" stroke-width="1"/><rect x="4.4" y="0.6" width="1.8" height="1.6" fill="#9ab0c8" transform="rotate(-40 5.3 1.4)"/></svg>
<div class="a" style="left:741.00px;top:239.50px;width:22px;height:6px;overflow:hidden"><div style="position:absolute;left:0.90px;top:-0.43px;font-size:6.3px;line-height:6.3px;color:#6f74a8;font-weight:400;white-space:nowrap;">Avatar</div></div>
<div style="position:absolute;left:764.40px;top:236.20px;font-size:6.5px;line-height:6.5px;color:#4a4a4a;font-weight:400;white-space:nowrap;">Gokul Srinivasagan</div>
<div class="th bl" style="left:161.40px;top:253.40px"><div class="a" style="left:0.00px;top:0.00px;width:182.50px;height:102.60px;background:#0d0d0d;"></div><div class="a" style="left:1.00px;top:1.00px;width:180.50px;height:100.60px;background:#181818;"></div><div class="a" style="left:1.00px;top:1.00px;width:180.50px;height:3.00px;background:#121212;"></div><div class="a" style="left:0;top:0;width:100%;height:100%;opacity:.75"><div class="a" style="left:4.00px;top:2.00px;width:14.97px;height:1.30px;background:rgba(200,200,200,.35);"></div><div class="a" style="left:20.17px;top:2.00px;width:11.17px;height:1.30px;background:rgba(200,200,200,.35);"></div><div class="a" style="left:32.54px;top:2.00px;width:7.46px;height:1.30px;background:rgba(200,200,200,.35);"></div><div class="a" style="left:41.20px;top:2.00px;width:10.74px;height:1.30px;background:rgba(200,200,200,.35);"></div><div class="a" style="left:53.15px;top:2.00px;width:6.25px;height:1.30px;background:rgba(200,200,200,.35);"></div><div class="a" style="left:60.60px;top:2.00px;width:5.47px;height:1.30px;background:rgba(200,200,200,.35);"></div></div><div class="a" style="left:0;top:0;width:100%;height:100%;opacity:.75"><div class="a" style="left:4.00px;top:5.00px;width:6.42px;height:1.30px;background:rgba(200,200,200,.25);"></div><div class="a" style="left:11.62px;top:5.00px;width:12.68px;height:1.30px;background:rgba(200,200,200,.25);"></div><div class="a" style="left:25.51px;top:5.00px;width:14.47px;height:1.30px;background:rgba(200,200,200,.25);"></div><div class="a" style="left:41.18px;top:5.00px;width:13.30px;height:1.30px;background:rgba(200,200,200,.25);"></div><div class="a" style="left:55.68px;top:5.00px;width:8.11px;height:1.30px;background:rgba(200,200,200,.25);"></div><div class="a" style="left:65.00px;top:5.00px;width:9.22px;height:1.30px;background:rgba(200,200,200,.25);"></div><div class="a" style="left:75.42px;top:5.00px;width:6.79px;height:1.30px;background:rgba(200,200,200,.25);"></div><div class="a" style="left:83.41px;top:5.00px;width:7.30px;height:1.30px;background:rgba(200,200,200,.25);"></div><div class="a" style="left:91.90px;top:5.00px;width:8.57px;height:1.30px;background:rgba(200,200,200,.25);"></div><div class="a" style="left:101.67px;top:5.00px;width:6.54px;height:1.30px;background:rgba(200,200,200,.25);"></div></div><div class="a" style="left:0;top:0;width:100%;height:100%;opacity:.75"><div class="a" style="left:4.00px;top:8.00px;width:4.06px;height:1.30px;background:rgba(200,200,200,.25);"></div><div class="a" style="left:9.26px;top:8.00px;width:7.24px;height:1.30px;background:rgba(200,200,200,.25);"></div><div class="a" style="left:17.70px;top:8.00px;width:9.23px;height:1.30px;background:rgba(200,200,200,.25);"></div><div class="a" style="left:28.13px;top:8.00px;width:7.26px;height:1.30px;background:rgba(200,200,200,.25);"></div><div class="a" style="left:36.59px;top:8.00px;width:17.02px;height:1.30px;background:rgba(200,200,200,.25);"></div><div class="a" style="left:54.82px;top:8.00px;width:9.14px;height:1.30px;background:rgba(200,200,200,.25);"></div></div><div style="position:absolute;left:5.00px;top:13.91px;font-size:4.6px;line-height:4.6px;color:rgba(235,235,235,.85);font-weight:400;white-space:nowrap;">Assignment 1 (100 points)</div><div class="a" style="left:0;top:0;width:100%;height:100%;opacity:.75"><div class="a" style="left:5.00px;top:22.00px;width:7.05px;height:1.30px;background:rgba(220,220,220,.5);"></div><div class="a" style="left:13.25px;top:22.00px;width:4.62px;height:1.30px;background:rgba(220,220,220,.5);"></div><div class="a" style="left:5.00px;top:23.70px;width:14.39px;height:1.30px;background:rgba(220,220,220,.5);"></div><div class="a" style="left:5.00px;top:25.40px;width:5.09px;height:1.30px;background:rgba(220,220,220,.5);"></div><div class="a" style="left:11.29px;top:25.40px;width:5.94px;height:1.30px;background:rgba(220,220,220,.5);"></div></div><div class="a" style="left:5.00px;top:28.00px;width:18.00px;height:1.60px;background:rgba(220,220,220,.6);"></div><div class="a" style="left:5.00px;top:35.00px;width:35.00px;height:1.60px;background:rgba(220,220,220,.5);"></div><div class="a" style="left:5.00px;top:42.00px;width:115.00px;height:1.00px;background:rgba(190,190,190,.35);"></div><div class="a" style="left:5.00px;top:45.50px;width:170.00px;height:1.00px;background:rgba(190,190,190,.35);"></div><div class="a" style="left:5.00px;top:47.50px;width:12.00px;height:1.00px;background:rgba(190,190,190,.3);"></div><div class="a" style="left:3.00px;top:52.00px;width:177.00px;height:46.00px;background:#161616;"></div><div class="a" style="left:0;top:0;width:100%;height:100%;opacity:.75"><div class="a" style="left:22.00px;top:55.00px;width:5.28px;height:1.20px;background:rgba(180,180,180,.3);"></div><div class="a" style="left:28.48px;top:55.00px;width:7.80px;height:1.20px;background:rgba(210,200,180,.26);"></div><div class="a" style="left:37.47px;top:55.00px;width:4.57px;height:1.20px;background:rgba(210,200,180,.26);"></div><div class="a" style="left:16.00px;top:60.20px;width:16.10px;height:1.20px;background:rgba(190,190,190,.28);"></div><div class="a" style="left:33.30px;top:60.20px;width:9.09px;height:1.20px;background:rgba(180,180,180,.3);"></div><div class="a" style="left:43.59px;top:60.20px;width:9.32px;height:1.20px;background:rgba(190,190,190,.28);"></div><div class="a" style="left:13.00px;top:62.80px;width:9.69px;height:1.20px;background:rgba(190,190,190,.28);"></div><div class="a" style="left:23.89px;top:62.80px;width:10.45px;height:1.20px;background:rgba(190,190,190,.28);"></div><div class="a" style="left:35.54px;top:62.80px;width:4.72px;height:1.20px;background:rgba(185,200,215,.28);"></div><div class="a" style="left:41.46px;top:62.80px;width:5.25px;height:1.20px;background:rgba(190,190,190,.28);"></div><div class="a" style="left:47.91px;top:62.80px;width:2.63px;height:1.20px;background:rgba(190,190,190,.28);"></div><div class="a" style="left:22.00px;top:68.00px;width:5.52px;height:1.20px;background:rgba(190,190,190,.28);"></div><div class="a" style="left:28.72px;top:68.00px;width:14.44px;height:1.20px;background:rgba(190,190,190,.28);"></div><div class="a" style="left:13.00px;top:70.60px;width:17.66px;height:1.20px;background:rgba(190,190,190,.28);"></div><div class="a" style="left:31.86px;top:70.60px;width:4.75px;height:1.20px;background:rgba(190,190,190,.28);"></div><div class="a" style="left:37.80px;top:70.60px;width:9.43px;height:1.20px;background:rgba(190,190,190,.28);"></div><div class="a" style="left:48.44px;top:70.60px;width:12.68px;height:1.20px;background:rgba(190,190,190,.28);"></div><div class="a" style="left:62.32px;top:70.60px;width:6.24px;height:1.20px;background:rgba(190,190,190,.28);"></div><div class="a" style="left:69.76px;top:70.60px;width:7.11px;height:1.20px;background:rgba(190,190,190,.28);"></div><div class="a" style="left:19.00px;top:73.20px;width:4.58px;height:1.20px;background:rgba(200,200,200,.26);"></div><div class="a" style="left:24.78px;top:73.20px;width:6.19px;height:1.20px;background:rgba(200,200,200,.26);"></div><div class="a" style="left:32.17px;top:73.20px;width:7.46px;height:1.20px;background:rgba(200,200,200,.26);"></div><div class="a" style="left:10.00px;top:75.80px;width:4.53px;height:1.20px;background:rgba(180,180,180,.3);"></div><div class="a" style="left:15.73px;top:75.80px;width:5.65px;height:1.20px;background:rgba(180,180,180,.3);"></div><div class="a" style="left:22.58px;top:75.80px;width:11.70px;height:1.20px;background:rgba(180,180,180,.3);"></div><div class="a" style="left:35.48px;top:75.80px;width:8.29px;height:1.20px;background:rgba(180,180,180,.3);"></div><div class="a" style="left:44.97px;top:75.80px;width:12.16px;height:1.20px;background:rgba(180,180,180,.3);"></div><div class="a" style="left:58.33px;top:75.80px;width:13.22px;height:1.20px;background:rgba(180,180,180,.3);"></div><div class="a" style="left:72.75px;top:75.80px;width:4.70px;height:1.20px;background:rgba(210,200,180,.26);"></div><div class="a" style="left:19.00px;top:78.40px;width:14.92px;height:1.20px;background:rgba(210,200,180,.26);"></div><div class="a" style="left:35.12px;top:78.40px;width:6.51px;height:1.20px;background:rgba(210,200,180,.26);"></div><div class="a" style="left:10.00px;top:86.20px;width:11.14px;height:1.20px;background:rgba(180,180,180,.3);"></div><div class="a" style="left:22.34px;top:86.20px;width:5.82px;height:1.20px;background:rgba(210,200,180,.26);"></div><div class="a" style="left:29.37px;top:86.20px;width:8.39px;height:1.20px;background:rgba(210,200,180,.26);"></div><div class="a" style="left:38.96px;top:86.20px;width:5.12px;height:1.20px;background:rgba(210,200,180,.26);"></div><div class="a" style="left:45.28px;top:86.20px;width:16.53px;height:1.20px;background:rgba(210,200,180,.26);"></div><div class="a" style="left:63.01px;top:86.20px;width:9.14px;height:1.20px;background:rgba(190,190,190,.28);"></div><div class="a" style="left:10.00px;top:88.80px;width:8.03px;height:1.20px;background:rgba(185,200,215,.28);"></div><div class="a" style="left:19.23px;top:88.80px;width:13.36px;height:1.20px;background:rgba(185,200,215,.28);"></div><div class="a" style="left:13.00px;top:91.40px;width:12.55px;height:1.20px;background:rgba(170,195,170,.28);"></div><div class="a" style="left:16.00px;top:94.00px;width:6.01px;height:1.20px;background:rgba(185,200,215,.28);"></div><div class="a" style="left:23.21px;top:94.00px;width:16.88px;height:1.20px;background:rgba(170,195,170,.28);"></div><div class="a" style="left:41.29px;top:94.00px;width:12.62px;height:1.20px;background:rgba(170,195,170,.28);"></div><div class="a" style="left:55.11px;top:94.00px;width:4.52px;height:1.20px;background:rgba(200,200,200,.26);"></div><div class="a" style="left:60.83px;top:94.00px;width:12.91px;height:1.20px;background:rgba(170,195,170,.28);"></div><div class="a" style="left:74.94px;top:94.00px;width:9.89px;height:1.20px;background:rgba(170,195,170,.28);"></div></div></div>
<div style="position:absolute;left:163.00px;top:370.16px;font-size:6.78px;line-height:6.78px;color:#363636;font-weight:400;white-space:nowrap;-webkit-text-stroke:0.12px #363636">Florian Seiler-CAI NatLPr-A1</div>
<div style="position:absolute;left:162.90px;top:383.26px;font-size:6.55px;line-height:6.55px;color:#585858;font-weight:400;white-space:nowrap;">CAI_NatLPr-Assignment_1 - Sommer 2025</div>
<svg class="a" style="left:163.70px;top:396.40px" width="7" height="6" viewBox="0 0 7 6"><path d="M1 5.2 L5.5 1.2" stroke="#7f9a80" stroke-width="1.7" stroke-linecap="round"/><path d="M1.2 4.6 L2.6 3.4" stroke="#4a7a3a" stroke-width="1"/><rect x="4.4" y="0.6" width="1.8" height="1.6" fill="#9ab0c8" transform="rotate(-40 5.3 1.4)"/></svg>
<div class="a" style="left:162.90px;top:404.70px;width:22px;height:6px;overflow:hidden"><div style="position:absolute;left:0.90px;top:-0.43px;font-size:6.3px;line-height:6.3px;color:#6f74a8;font-weight:400;white-space:nowrap;">Avatar</div></div>
<div style="position:absolute;left:186.30px;top:401.40px;font-size:6.5px;line-height:6.5px;color:#4a4a4a;font-weight:400;white-space:nowrap;">Gokul Srinivasagan</div>
<div class="th bl" style="left:354.10px;top:253.40px"><div class="a" style="left:0.00px;top:0.00px;width:182.50px;height:102.60px;background:#0d0d0d;"></div><div class="a" style="left:1.00px;top:1.00px;width:180.50px;height:100.60px;background:#171717;"></div><div class="a" style="left:1.00px;top:1.00px;width:180.50px;height:3.00px;background:#111111;"></div><div class="a" style="left:0;top:0;width:100%;height:100%;opacity:.75"><div class="a" style="left:4.00px;top:2.00px;width:17.53px;height:1.30px;background:rgba(200,200,200,.3);"></div><div class="a" style="left:22.73px;top:2.00px;width:11.30px;height:1.30px;background:rgba(200,200,200,.3);"></div><div class="a" style="left:35.23px;top:2.00px;width:15.14px;height:1.30px;background:rgba(200,200,200,.3);"></div></div><div class="a" style="left:0;top:0;width:100%;height:100%;opacity:.75"><div class="a" style="left:7.00px;top:5.00px;width:17.87px;height:1.30px;background:rgba(200,200,200,.3);"></div><div class="a" style="left:26.07px;top:5.00px;width:7.79px;height:1.30px;background:rgba(200,200,200,.3);"></div></div><div class="a" style="left:0;top:0;width:100%;height:100%;opacity:.75"><div class="a" style="left:7.00px;top:8.00px;width:8.15px;height:1.30px;background:rgba(200,200,200,.28);"></div><div class="a" style="left:16.35px;top:8.00px;width:8.34px;height:1.30px;background:rgba(200,200,200,.28);"></div><div class="a" style="left:25.89px;top:8.00px;width:16.18px;height:1.30px;background:rgba(200,200,200,.28);"></div><div class="a" style="left:43.27px;top:8.00px;width:16.54px;height:1.30px;background:rgba(200,200,200,.28);"></div><div class="a" style="left:61.01px;top:8.00px;width:14.46px;height:1.30px;background:rgba(200,200,200,.28);"></div><div class="a" style="left:76.67px;top:8.00px;width:12.62px;height:1.30px;background:rgba(200,200,200,.28);"></div><div class="a" style="left:90.50px;top:8.00px;width:11.18px;height:1.30px;background:rgba(200,200,200,.28);"></div><div class="a" style="left:102.88px;top:8.00px;width:5.85px;height:1.30px;background:rgba(200,200,200,.28);"></div><div class="a" style="left:109.92px;top:8.00px;width:4.31px;height:1.30px;background:rgba(200,200,200,.28);"></div><div class="a" style="left:115.44px;top:8.00px;width:8.25px;height:1.30px;background:rgba(200,200,200,.28);"></div><div class="a" style="left:124.89px;top:8.00px;width:11.48px;height:1.30px;background:rgba(200,200,200,.28);"></div><div class="a" style="left:137.57px;top:8.00px;width:8.22px;height:1.30px;background:rgba(200,200,200,.28);"></div><div class="a" style="left:146.98px;top:8.00px;width:5.90px;height:1.30px;background:rgba(200,200,200,.28);"></div></div><div class="a" style="left:0;top:0;width:100%;height:100%;opacity:.75"><div class="a" style="left:7.00px;top:10.50px;width:13.90px;height:1.30px;background:rgba(200,200,200,.25);"></div><div class="a" style="left:22.10px;top:10.50px;width:4.89px;height:1.30px;background:rgba(200,200,200,.25);"></div><div class="a" style="left:28.20px;top:10.50px;width:9.63px;height:1.30px;background:rgba(200,200,200,.25);"></div><div class="a" style="left:39.02px;top:10.50px;width:4.79px;height:1.30px;background:rgba(200,200,200,.25);"></div><div class="a" style="left:45.01px;top:10.50px;width:6.67px;height:1.30px;background:rgba(200,200,200,.25);"></div></div><div class="a" style="left:1.00px;top:4.00px;width:4.00px;height:97.60px;background:#111111;"></div><div class="a" style="left:7.00px;top:13.00px;width:1.00px;height:88.60px;background:rgba(120,120,120,.25);"></div><div class="a" style="left:0;top:0;width:100%;height:100%;opacity:.75"><div class="a" style="left:23.00px;top:16.00px;width:10.90px;height:1.20px;background:rgba(190,190,190,.28);"></div><div class="a" style="left:35.10px;top:16.00px;width:4.62px;height:1.20px;background:rgba(180,180,180,.3);"></div><div class="a" style="left:40.92px;top:16.00px;width:9.68px;height:1.20px;background:rgba(190,190,190,.28);"></div><div class="a" style="left:51.80px;top:16.00px;width:9.00px;height:1.20px;background:rgba(210,200,180,.26);"></div><div class="a" style="left:14.00px;top:18.20px;width:9.98px;height:1.20px;background:rgba(200,200,200,.26);"></div><div class="a" style="left:20.00px;top:20.40px;width:11.12px;height:1.20px;background:rgba(180,180,180,.3);"></div><div class="a" style="left:32.32px;top:20.40px;width:4.68px;height:1.20px;background:rgba(200,200,200,.26);"></div><div class="a" style="left:38.20px;top:20.40px;width:14.96px;height:1.20px;background:rgba(200,200,200,.26);"></div><div class="a" style="left:26.00px;top:24.80px;width:14.38px;height:1.20px;background:rgba(190,190,190,.28);"></div><div class="a" style="left:41.58px;top:24.80px;width:7.16px;height:1.20px;background:rgba(200,200,200,.26);"></div><div class="a" style="left:49.95px;top:24.80px;width:12.98px;height:1.20px;background:rgba(180,180,180,.3);"></div><div class="a" style="left:17.00px;top:27.00px;width:12.90px;height:1.20px;background:rgba(170,195,170,.28);"></div><div class="a" style="left:31.10px;top:27.00px;width:13.60px;height:1.20px;background:rgba(170,195,170,.28);"></div><div class="a" style="left:17.00px;top:29.20px;width:5.20px;height:1.20px;background:rgba(200,200,200,.26);"></div><div class="a" style="left:23.40px;top:29.20px;width:6.38px;height:1.20px;background:rgba(200,200,200,.26);"></div><div class="a" style="left:30.97px;top:29.20px;width:13.50px;height:1.20px;background:rgba(200,200,200,.26);"></div><div class="a" style="left:17.00px;top:31.40px;width:8.60px;height:1.20px;background:rgba(180,180,180,.3);"></div><div class="a" style="left:26.00px;top:33.60px;width:10.57px;height:1.20px;background:rgba(210,200,180,.26);"></div><div class="a" style="left:37.77px;top:33.60px;width:13.77px;height:1.20px;background:rgba(210,200,180,.26);"></div><div class="a" style="left:52.74px;top:33.60px;width:7.71px;height:1.20px;background:rgba(210,200,180,.26);"></div><div class="a" style="left:17.00px;top:35.80px;width:12.72px;height:1.20px;background:rgba(200,200,200,.26);"></div><div class="a" style="left:30.92px;top:35.80px;width:6.02px;height:1.20px;background:rgba(190,190,190,.28);"></div><div class="a" style="left:38.14px;top:35.80px;width:11.48px;height:1.20px;background:rgba(200,200,200,.26);"></div><div class="a" style="left:14.00px;top:38.00px;width:6.46px;height:1.20px;background:rgba(190,190,190,.28);"></div><div class="a" style="left:14.00px;top:40.20px;width:6.79px;height:1.20px;background:rgba(170,195,170,.28);"></div><div class="a" style="left:21.99px;top:40.20px;width:11.47px;height:1.20px;background:rgba(170,195,170,.28);"></div><div class="a" style="left:34.66px;top:40.20px;width:14.31px;height:1.20px;background:rgba(170,195,170,.28);"></div><div class="a" style="left:20.00px;top:42.40px;width:6.84px;height:1.20px;background:rgba(180,180,180,.3);"></div><div class="a" style="left:26.00px;top:46.80px;width:5.86px;height:1.20px;background:rgba(190,190,190,.28);"></div><div class="a" style="left:33.06px;top:46.80px;width:8.00px;height:1.20px;background:rgba(170,195,170,.28);"></div><div class="a" style="left:14.00px;top:49.00px;width:4.68px;height:1.20px;background:rgba(170,195,170,.28);"></div><div class="a" style="left:19.88px;top:49.00px;width:11.40px;height:1.20px;background:rgba(170,195,170,.28);"></div><div class="a" style="left:20.00px;top:51.20px;width:14.44px;height:1.20px;background:rgba(210,200,180,.26);"></div><div class="a" style="left:35.64px;top:51.20px;width:4.44px;height:1.20px;background:rgba(210,200,180,.26);"></div><div class="a" style="left:41.28px;top:51.20px;width:5.38px;height:1.20px;background:rgba(210,200,180,.26);"></div><div class="a" style="left:47.85px;top:51.20px;width:4.67px;height:1.20px;background:rgba(210,200,180,.26);"></div><div class="a" style="left:14.00px;top:53.40px;width:6.39px;height:1.20px;background:rgba(200,200,200,.26);"></div><div class="a" style="left:21.59px;top:53.40px;width:8.04px;height:1.20px;background:rgba(170,195,170,.28);"></div><div class="a" style="left:30.82px;top:53.40px;width:4.76px;height:1.20px;background:rgba(190,190,190,.28);"></div><div class="a" style="left:36.78px;top:53.40px;width:2.33px;height:1.20px;background:rgba(170,195,170,.28);"></div><div class="a" style="left:17.00px;top:57.80px;width:7.65px;height:1.20px;background:rgba(210,200,180,.26);"></div><div class="a" style="left:25.85px;top:57.80px;width:7.97px;height:1.20px;background:rgba(180,180,180,.3);"></div><div class="a" style="left:35.02px;top:57.80px;width:7.24px;height:1.20px;background:rgba(180,180,180,.3);"></div><div class="a" style="left:43.46px;top:57.80px;width:12.04px;height:1.20px;background:rgba(210,200,180,.26);"></div><div class="a" style="left:23.00px;top:60.00px;width:8.57px;height:1.20px;background:rgba(185,200,215,.28);"></div><div class="a" style="left:32.77px;top:60.00px;width:16.49px;height:1.20px;background:rgba(180,180,180,.3);"></div><div class="a" style="left:50.46px;top:60.00px;width:5.08px;height:1.20px;background:rgba(180,180,180,.3);"></div><div class="a" style="left:17.00px;top:62.20px;width:11.02px;height:1.20px;background:rgba(180,180,180,.3);"></div><div class="a" style="left:23.00px;top:66.60px;width:14.54px;height:1.20px;background:rgba(180,180,180,.3);"></div><div class="a" style="left:38.74px;top:66.60px;width:8.88px;height:1.20px;background:rgba(200,200,200,.26);"></div><div class="a" style="left:20.00px;top:68.80px;width:8.53px;height:1.20px;background:rgba(180,180,180,.3);"></div><div class="a" style="left:29.73px;top:68.80px;width:13.65px;height:1.20px;background:rgba(200,200,200,.26);"></div><div class="a" style="left:44.57px;top:68.80px;width:3.60px;height:1.20px;background:rgba(180,180,180,.3);"></div><div class="a" style="left:14.00px;top:71.00px;width:8.22px;height:1.20px;background:rgba(170,195,170,.28);"></div><div class="a" style="left:23.42px;top:71.00px;width:13.35px;height:1.20px;background:rgba(200,200,200,.26);"></div><div class="a" style="left:26.00px;top:73.20px;width:8.88px;height:1.20px;background:rgba(200,200,200,.26);"></div><div class="a" style="left:36.08px;top:73.20px;width:6.35px;height:1.20px;background:rgba(210,200,180,.26);"></div><div class="a" style="left:14.00px;top:75.40px;width:6.74px;height:1.20px;background:rgba(200,200,200,.26);"></div><div class="a" style="left:21.94px;top:75.40px;width:15.13px;height:1.20px;background:rgba(190,190,190,.28);"></div><div class="a" style="left:38.26px;top:75.40px;width:10.09px;height:1.20px;background:rgba(180,180,180,.3);"></div><div class="a" style="left:49.55px;top:75.40px;width:3.13px;height:1.20px;background:rgba(185,200,215,.28);"></div><div class="a" style="left:14.00px;top:77.60px;width:13.71px;height:1.20px;background:rgba(185,200,215,.28);"></div><div class="a" style="left:28.91px;top:77.60px;width:4.06px;height:1.20px;background:rgba(185,200,215,.28);"></div><div class="a" style="left:20.00px;top:82.00px;width:5.19px;height:1.20px;background:rgba(200,200,200,.26);"></div><div class="a" style="left:26.00px;top:84.20px;width:13.35px;height:1.20px;background:rgba(200,200,200,.26);"></div><div class="a" style="left:40.55px;top:84.20px;width:13.10px;height:1.20px;background:rgba(200,200,200,.26);"></div><div class="a" style="left:14.00px;top:86.40px;width:5.74px;height:1.20px;background:rgba(180,180,180,.3);"></div><div class="a" style="left:20.94px;top:86.40px;width:7.64px;height:1.20px;background:rgba(180,180,180,.3);"></div><div class="a" style="left:29.78px;top:86.40px;width:13.01px;height:1.20px;background:rgba(185,200,215,.28);"></div><div class="a" style="left:26.00px;top:88.60px;width:10.48px;height:1.20px;background:rgba(185,200,215,.28);"></div><div class="a" style="left:26.00px;top:90.80px;width:16.52px;height:1.20px;background:rgba(190,190,190,.28);"></div><div class="a" style="left:43.72px;top:90.80px;width:9.44px;height:1.20px;background:rgba(200,200,200,.26);"></div><div class="a" style="left:54.36px;top:90.80px;width:9.19px;height:1.20px;background:rgba(210,200,180,.26);"></div><div class="a" style="left:14.00px;top:95.20px;width:15.86px;height:1.20px;background:rgba(190,190,190,.28);"></div><div class="a" style="left:31.06px;top:95.20px;width:6.11px;height:1.20px;background:rgba(190,190,190,.28);"></div></div><div class="a" style="left:1.00px;top:99.60px;width:180.50px;height:2.00px;background:#121212;"></div></div>
<div style="position:absolute;left:355.70px;top:370.16px;font-size:6.78px;line-height:6.78px;color:#363636;font-weight:400;white-space:nowrap;-webkit-text-stroke:0.12px #363636">Felix Boyke-CAI NatLPr-A1</div>
<div style="position:absolute;left:355.60px;top:383.26px;font-size:6.55px;line-height:6.55px;color:#585858;font-weight:400;white-space:nowrap;">CAI_NatLPr-Assignment_1 - Sommer 2025</div>
<svg class="a" style="left:356.40px;top:396.40px" width="7" height="6" viewBox="0 0 7 6"><path d="M1 5.2 L5.5 1.2" stroke="#7f9a80" stroke-width="1.7" stroke-linecap="round"/><path d="M1.2 4.6 L2.6 3.4" stroke="#4a7a3a" stroke-width="1"/><rect x="4.4" y="0.6" width="1.8" height="1.6" fill="#9ab0c8" transform="rotate(-40 5.3 1.4)"/></svg>
<div class="a" style="left:355.60px;top:404.70px;width:22px;height:6px;overflow:hidden"><div style="position:absolute;left:0.90px;top:-0.43px;font-size:6.3px;line-height:6.3px;color:#6f74a8;font-weight:400;white-space:nowrap;">Avatar</div></div>
<div style="position:absolute;left:379.00px;top:401.40px;font-size:6.5px;line-height:6.5px;color:#4a4a4a;font-weight:400;white-space:nowrap;">Gokul Srinivasagan</div>
<div class="th bl" style="left:546.80px;top:253.40px"><div class="a" style="left:1.00px;top:1.00px;width:180.50px;height:8.60px;background:linear-gradient(180deg,#7e0f2a,#5a0c1c);"></div><div class="a" style="left:2.00px;top:1.50px;width:30.00px;height:3.00px;background:#8a2233;"></div><div class="a" style="left:0;top:0;width:100%;height:100%;opacity:.75"><div class="a" style="left:36.00px;top:2.50px;width:9.74px;height:1.30px;background:rgba(230,200,200,.35);"></div><div class="a" style="left:46.94px;top:2.50px;width:6.94px;height:1.30px;background:rgba(230,200,200,.35);"></div><div class="a" style="left:55.09px;top:2.50px;width:2.76px;height:1.30px;background:rgba(230,200,200,.35);"></div></div><div class="a" style="left:4.00px;top:6.00px;width:80.00px;height:1.50px;background:rgba(255,210,210,.3);"></div><div class="a" style="left:1.00px;top:9.00px;width:180.50px;height:92.60px;background:#2f2f2f;"></div><div class="a" style="left:3.00px;top:11.50px;width:6.00px;height:3.50px;background:#e8a030;border-radius:2px"></div><div class="a" style="left:13.00px;top:11.50px;width:18.00px;height:1.40px;background:rgba(230,230,230,.5);"></div><div class="a" style="left:0;top:0;width:100%;height:100%;opacity:.75"><div class="a" style="left:13.00px;top:16.50px;width:12.93px;height:1.30px;background:rgba(230,230,230,.4);"></div><div class="a" style="left:27.13px;top:16.50px;width:9.60px;height:1.30px;background:rgba(230,230,230,.4);"></div><div class="a" style="left:37.92px;top:16.50px;width:16.82px;height:1.30px;background:rgba(230,230,230,.4);"></div><div class="a" style="left:55.94px;top:16.50px;width:13.45px;height:1.30px;background:rgba(230,230,230,.4);"></div><div class="a" style="left:70.59px;top:16.50px;width:5.53px;height:1.30px;background:rgba(230,230,230,.4);"></div></div><div class="a" style="left:0;top:0;width:100%;height:100%;opacity:.75"><div class="a" style="left:10.00px;top:21.50px;width:17.92px;height:1.30px;background:rgba(230,230,230,.4);"></div></div><div class="a" style="left:153.00px;top:13.00px;width:5.00px;height:3.00px;background:rgba(220,220,220,.4);"></div><div class="a" style="left:161.00px;top:13.00px;width:4.00px;height:3.00px;background:rgba(220,220,220,.4);"></div><div class="a" style="left:168.00px;top:13.00px;width:10.00px;height:3.00px;background:rgba(220,220,220,.4);"></div><div class="a" style="left:1.00px;top:24.00px;width:11.00px;height:77.60px;background:#2a2a2a;"></div><div class="a" style="left:4.00px;top:23.00px;width:4.00px;height:2.00px;background:rgba(180,180,180,.45);"></div><div class="a" style="left:4.00px;top:30.00px;width:4.00px;height:2.00px;background:rgba(180,180,180,.45);"></div><div class="a" style="left:4.00px;top:36.00px;width:4.00px;height:2.00px;background:rgba(180,180,180,.45);"></div><div class="a" style="left:4.00px;top:42.00px;width:4.00px;height:2.00px;background:rgba(180,180,180,.45);"></div><div class="a" style="left:4.00px;top:50.00px;width:4.00px;height:2.00px;background:rgba(180,180,180,.45);"></div><div class="a" style="left:4.00px;top:82.00px;width:4.00px;height:2.00px;background:rgba(180,180,180,.45);"></div><div class="a" style="left:4.00px;top:88.00px;width:4.00px;height:2.00px;background:rgba(180,180,180,.45);"></div><div class="a" style="left:4.00px;top:95.00px;width:4.00px;height:2.00px;background:rgba(180,180,180,.45);"></div><div class="a" style="left:0;top:0;width:100%;height:100%;opacity:.75"><div class="a" style="left:12.00px;top:31.30px;width:15.33px;height:1.30px;background:rgba(215,215,215,.4);"></div><div class="a" style="left:28.53px;top:31.30px;width:10.57px;height:1.30px;background:rgba(215,215,215,.4);"></div><div class="a" style="left:40.30px;top:31.30px;width:7.16px;height:1.30px;background:rgba(215,215,215,.4);"></div><div class="a" style="left:48.67px;top:31.30px;width:8.94px;height:1.30px;background:rgba(215,215,215,.4);"></div><div class="a" style="left:58.81px;top:31.30px;width:15.46px;height:1.30px;background:rgba(215,215,215,.4);"></div><div class="a" style="left:75.47px;top:31.30px;width:10.55px;height:1.30px;background:rgba(215,215,215,.4);"></div><div class="a" style="left:87.23px;top:31.30px;width:14.92px;height:1.30px;background:rgba(215,215,215,.4);"></div><div class="a" style="left:103.34px;top:31.30px;width:6.12px;height:1.30px;background:rgba(215,215,215,.4);"></div><div class="a" style="left:12.00px;top:34.90px;width:10.74px;height:1.30px;background:rgba(215,215,215,.4);"></div><div class="a" style="left:23.94px;top:34.90px;width:15.18px;height:1.30px;background:rgba(215,215,215,.4);"></div><div class="a" style="left:40.33px;top:34.90px;width:8.48px;height:1.30px;background:rgba(215,215,215,.4);"></div><div class="a" style="left:50.01px;top:34.90px;width:12.73px;height:1.30px;background:rgba(215,215,215,.4);"></div><div class="a" style="left:63.94px;top:34.90px;width:6.14px;height:1.30px;background:rgba(215,215,215,.4);"></div><div class="a" style="left:71.28px;top:34.90px;width:4.80px;height:1.30px;background:rgba(215,215,215,.4);"></div><div class="a" style="left:77.28px;top:34.90px;width:16.68px;height:1.30px;background:rgba(215,215,215,.4);"></div><div class="a" style="left:95.16px;top:34.90px;width:5.97px;height:1.30px;background:rgba(215,215,215,.4);"></div><div class="a" style="left:102.32px;top:34.90px;width:12.86px;height:1.30px;background:rgba(215,215,215,.4);"></div><div class="a" style="left:116.39px;top:34.90px;width:5.36px;height:1.30px;background:rgba(215,215,215,.4);"></div></div><div class="a" style="left:0;top:0;width:100%;height:100%;opacity:.75"><div class="a" style="left:12.00px;top:39.80px;width:15.96px;height:1.30px;background:rgba(215,215,215,.4);"></div><div class="a" style="left:29.16px;top:39.80px;width:8.85px;height:1.30px;background:rgba(215,215,215,.4);"></div><div class="a" style="left:39.21px;top:39.80px;width:15.08px;height:1.30px;background:rgba(215,215,215,.4);"></div><div class="a" style="left:55.49px;top:39.80px;width:13.36px;height:1.30px;background:rgba(215,215,215,.4);"></div><div class="a" style="left:70.05px;top:39.80px;width:15.03px;height:1.30px;background:rgba(215,215,215,.4);"></div><div class="a" style="left:86.28px;top:39.80px;width:6.76px;height:1.30px;background:rgba(215,215,215,.4);"></div><div class="a" style="left:94.25px;top:39.80px;width:11.43px;height:1.30px;background:rgba(215,215,215,.4);"></div><div class="a" style="left:106.88px;top:39.80px;width:6.34px;height:1.30px;background:rgba(215,215,215,.4);"></div><div class="a" style="left:12.00px;top:43.30px;width:15.58px;height:1.30px;background:rgba(215,215,215,.4);"></div><div class="a" style="left:28.78px;top:43.30px;width:11.80px;height:1.30px;background:rgba(215,215,215,.4);"></div><div class="a" style="left:41.78px;top:43.30px;width:16.68px;height:1.30px;background:rgba(215,215,215,.4);"></div><div class="a" style="left:59.66px;top:43.30px;width:7.45px;height:1.30px;background:rgba(215,215,215,.4);"></div><div class="a" style="left:68.31px;top:43.30px;width:6.25px;height:1.30px;background:rgba(215,215,215,.4);"></div><div class="a" style="left:75.75px;top:43.30px;width:13.31px;height:1.30px;background:rgba(215,215,215,.4);"></div><div class="a" style="left:90.27px;top:43.30px;width:9.25px;height:1.30px;background:rgba(215,215,215,.4);"></div><div class="a" style="left:100.72px;top:43.30px;width:14.46px;height:1.30px;background:rgba(215,215,215,.4);"></div><div class="a" style="left:12.00px;top:46.80px;width:13.56px;height:1.30px;background:rgba(215,215,215,.4);"></div><div class="a" style="left:26.76px;top:46.80px;width:8.63px;height:1.30px;background:rgba(215,215,215,.4);"></div><div class="a" style="left:36.58px;top:46.80px;width:11.15px;height:1.30px;background:rgba(215,215,215,.4);"></div><div class="a" style="left:48.93px;top:46.80px;width:16.57px;height:1.30px;background:rgba(215,215,215,.4);"></div><div class="a" style="left:66.70px;top:46.80px;width:12.75px;height:1.30px;background:rgba(215,215,215,.4);"></div><div class="a" style="left:80.65px;top:46.80px;width:8.78px;height:1.30px;background:rgba(215,215,215,.4);"></div><div class="a" style="left:90.63px;top:46.80px;width:11.76px;height:1.30px;background:rgba(215,215,215,.4);"></div><div class="a" style="left:103.59px;top:46.80px;width:7.98px;height:1.30px;background:rgba(215,215,215,.4);"></div></div><div class="a" style="left:14.00px;top:52.00px;width:108.00px;height:50.00px;background:#202020;"></div><div class="a" style="left:14.00px;top:52.00px;width:4.00px;height:50.00px;background:#2a2a2a;"></div><div class="a" style="left:17.00px;top:54.50px;width:5.00px;height:4.00px;background:rgba(180,180,180,.5);border-radius:3px"></div><div class="a" style="left:0;top:0;width:100%;height:100%;opacity:.75"><div class="a" style="left:80.00px;top:51.50px;width:8.97px;height:1.30px;background:rgba(200,200,200,.4);"></div><div class="a" style="left:90.17px;top:51.50px;width:8.67px;height:1.30px;background:rgba(200,200,200,.4);"></div><div class="a" style="left:100.04px;top:51.50px;width:16.22px;height:1.30px;background:rgba(200,200,200,.4);"></div><div class="a" style="left:117.47px;top:51.50px;width:6.67px;height:1.30px;background:rgba(200,200,200,.4);"></div></div><div class="a" style="left:0;top:0;width:100%;height:100%;opacity:.75"><div class="a" style="left:20.00px;top:56.00px;width:5.79px;height:1.30px;background:rgba(200,200,200,.35);"></div><div class="a" style="left:26.99px;top:56.00px;width:5.23px;height:1.30px;background:rgba(200,200,200,.35);"></div><div class="a" style="left:33.41px;top:56.00px;width:9.58px;height:1.30px;background:rgba(200,200,200,.35);"></div><div class="a" style="left:44.20px;top:56.00px;width:9.68px;height:1.30px;background:rgba(200,200,200,.35);"></div><div class="a" style="left:55.08px;top:56.00px;width:9.58px;height:1.30px;background:rgba(200,200,200,.35);"></div><div class="a" style="left:20.00px;top:57.80px;width:15.05px;height:1.30px;background:rgba(200,200,200,.35);"></div><div class="a" style="left:36.25px;top:57.80px;width:12.56px;height:1.30px;background:rgba(200,200,200,.35);"></div><div class="a" style="left:50.01px;top:57.80px;width:12.78px;height:1.30px;background:rgba(200,200,200,.35);"></div><div class="a" style="left:63.99px;top:57.80px;width:5.62px;height:1.30px;background:rgba(200,200,200,.35);"></div></div><div class="a" style="left:20.00px;top:61.50px;width:60.00px;height:1.20px;background:rgba(110,190,110,.55);"></div><div class="a" style="left:20.00px;top:64.30px;width:88.00px;height:1.20px;background:rgba(110,190,110,.55);"></div><div class="a" style="left:0;top:0;width:100%;height:100%;opacity:.75"><div class="a" style="left:22.00px;top:68.00px;width:5.42px;height:1.00px;background:rgba(190,190,190,.28);"></div><div class="a" style="left:28.62px;top:68.00px;width:9.90px;height:1.00px;background:rgba(180,180,180,.3);"></div><div class="a" style="left:39.72px;top:68.00px;width:4.19px;height:1.00px;background:rgba(200,200,200,.26);"></div><div class="a" style="left:45.11px;top:68.00px;width:5.94px;height:1.00px;background:rgba(180,180,180,.3);"></div><div class="a" style="left:52.25px;top:68.00px;width:7.61px;height:1.00px;background:rgba(185,200,215,.28);"></div><div class="a" style="left:61.06px;top:68.00px;width:4.48px;height:1.00px;background:rgba(210,200,180,.26);"></div><div class="a" style="left:66.74px;top:68.00px;width:12.98px;height:1.00px;background:rgba(200,200,200,.26);"></div><div class="a" style="left:80.93px;top:68.00px;width:4.76px;height:1.00px;background:rgba(200,200,200,.26);"></div><div class="a" style="left:22.00px;top:76.70px;width:13.52px;height:1.00px;background:rgba(190,190,190,.28);"></div><div class="a" style="left:36.72px;top:76.70px;width:17.90px;height:1.00px;background:rgba(190,190,190,.28);"></div><div class="a" style="left:55.82px;top:76.70px;width:6.17px;height:1.00px;background:rgba(190,190,190,.28);"></div><div class="a" style="left:63.20px;top:76.70px;width:11.68px;height:1.00px;background:rgba(185,200,215,.28);"></div><div class="a" style="left:19.00px;top:79.60px;width:4.07px;height:1.00px;background:rgba(185,200,215,.28);"></div><div class="a" style="left:24.27px;top:79.60px;width:5.70px;height:1.00px;background:rgba(185,200,215,.28);"></div><div class="a" style="left:31.17px;top:79.60px;width:5.23px;height:1.00px;background:rgba(185,200,215,.28);"></div><div class="a" style="left:37.60px;top:79.60px;width:5.81px;height:1.00px;background:rgba(180,180,180,.3);"></div><div class="a" style="left:44.61px;top:79.60px;width:11.97px;height:1.00px;background:rgba(185,200,215,.28);"></div><div class="a" style="left:57.78px;top:79.60px;width:14.42px;height:1.00px;background:rgba(185,200,215,.28);"></div><div class="a" style="left:73.39px;top:79.60px;width:9.12px;height:1.00px;background:rgba(185,200,215,.28);"></div><div class="a" style="left:19.00px;top:82.50px;width:8.10px;height:1.00px;background:rgba(190,190,190,.28);"></div><div class="a" style="left:28.30px;top:82.50px;width:10.97px;height:1.00px;background:rgba(190,190,190,.28);"></div><div class="a" style="left:40.48px;top:82.50px;width:16.46px;height:1.00px;background:rgba(190,190,190,.28);"></div><div class="a" style="left:58.14px;top:82.50px;width:4.74px;height:1.00px;background:rgba(190,190,190,.28);"></div><div class="a" style="left:64.07px;top:82.50px;width:4.21px;height:1.00px;background:rgba(190,190,190,.28);"></div><div class="a" style="left:69.48px;top:82.50px;width:15.44px;height:1.00px;background:rgba(170,195,170,.28);"></div><div class="a" style="left:86.12px;top:82.50px;width:5.31px;height:1.00px;background:rgba(190,190,190,.28);"></div><div class="a" style="left:22.00px;top:85.40px;width:9.15px;height:1.00px;background:rgba(170,195,170,.28);"></div><div class="a" style="left:32.35px;top:85.40px;width:10.14px;height:1.00px;background:rgba(170,195,170,.28);"></div><div class="a" style="left:43.69px;top:85.40px;width:6.03px;height:1.00px;background:rgba(170,195,170,.28);"></div><div class="a" style="left:50.92px;top:85.40px;width:9.09px;height:1.00px;background:rgba(170,195,170,.28);"></div><div class="a" style="left:61.20px;top:85.40px;width:12.82px;height:1.00px;background:rgba(170,195,170,.28);"></div><div class="a" style="left:75.22px;top:85.40px;width:9.40px;height:1.00px;background:rgba(170,195,170,.28);"></div><div class="a" style="left:22.00px;top:88.30px;width:12.71px;height:1.00px;background:rgba(190,190,190,.28);"></div><div class="a" style="left:35.91px;top:88.30px;width:15.23px;height:1.00px;background:rgba(190,190,190,.28);"></div><div class="a" style="left:52.33px;top:88.30px;width:13.67px;height:1.00px;background:rgba(190,190,190,.28);"></div><div class="a" style="left:22.00px;top:94.10px;width:9.27px;height:1.00px;background:rgba(200,200,200,.26);"></div><div class="a" style="left:32.47px;top:94.10px;width:12.42px;height:1.00px;background:rgba(200,200,200,.26);"></div><div class="a" style="left:46.10px;top:94.10px;width:15.30px;height:1.00px;background:rgba(190,190,190,.28);"></div><div class="a" style="left:62.60px;top:94.10px;width:8.50px;height:1.00px;background:rgba(200,200,200,.26);"></div><div class="a" style="left:72.30px;top:94.10px;width:12.21px;height:1.00px;background:rgba(200,200,200,.26);"></div><div class="a" style="left:19.00px;top:97.00px;width:15.36px;height:1.00px;background:rgba(200,200,200,.26);"></div><div class="a" style="left:35.56px;top:97.00px;width:12.01px;height:1.00px;background:rgba(210,200,180,.26);"></div><div class="a" style="left:48.77px;top:97.00px;width:13.58px;height:1.00px;background:rgba(200,200,200,.26);"></div><div class="a" style="left:19.00px;top:99.90px;width:15.16px;height:1.00px;background:rgba(180,180,180,.3);"></div><div class="a" style="left:35.36px;top:99.90px;width:17.04px;height:1.00px;background:rgba(210,200,180,.26);"></div><div class="a" style="left:53.61px;top:99.90px;width:4.81px;height:1.00px;background:rgba(180,180,180,.3);"></div><div class="a" style="left:59.61px;top:99.90px;width:6.89px;height:1.00px;background:rgba(190,190,190,.28);"></div><div class="a" style="left:67.71px;top:99.90px;width:11.39px;height:1.00px;background:rgba(185,200,215,.28);"></div></div><div class="a" style="left:122.00px;top:24.00px;width:1.00px;height:78.00px;background:#202020;"></div><div class="a" style="left:128.00px;top:26.00px;width:10.00px;height:1.50px;background:rgba(220,220,220,.45);"></div><div class="a" style="left:129.00px;top:33.00px;width:25.00px;height:3.00px;background:rgba(200,200,200,.45);"></div><div class="a" style="left:130.00px;top:39.00px;width:3.00px;height:3.00px;background:rgba(230,230,230,.75);"></div><div class="a" style="left:135.00px;top:40.00px;width:13.40px;height:1.20px;background:rgba(220,220,220,.4);"></div><div class="a" style="left:130.00px;top:43.80px;width:3.00px;height:3.00px;background:rgba(230,230,230,.75);"></div><div class="a" style="left:135.00px;top:44.80px;width:24.91px;height:1.20px;background:rgba(220,220,220,.4);"></div><div class="a" style="left:130.00px;top:48.60px;width:3.00px;height:3.00px;background:rgba(230,230,230,.75);"></div><div class="a" style="left:135.00px;top:49.60px;width:24.35px;height:1.20px;background:rgba(220,220,220,.4);"></div><div class="a" style="left:130.00px;top:53.40px;width:3.00px;height:3.00px;background:rgba(230,230,230,.75);"></div><div class="a" style="left:135.00px;top:54.40px;width:15.73px;height:1.20px;background:rgba(220,220,220,.4);"></div><div class="a" style="left:130.00px;top:58.20px;width:3.00px;height:3.00px;background:rgba(230,230,230,.75);"></div><div class="a" style="left:135.00px;top:59.20px;width:21.27px;height:1.20px;background:rgba(220,220,220,.4);"></div><div class="a" style="left:130.00px;top:63.00px;width:3.00px;height:3.00px;background:rgba(230,230,230,.75);"></div><div class="a" style="left:135.00px;top:64.00px;width:26.35px;height:1.20px;background:rgba(220,220,220,.4);"></div><div class="a" style="left:130.00px;top:67.80px;width:3.00px;height:3.00px;background:rgba(230,230,230,.75);"></div><div class="a" style="left:135.00px;top:68.80px;width:26.16px;height:1.20px;background:rgba(220,220,220,.4);"></div><div class="a" style="left:130.00px;top:72.60px;width:3.00px;height:3.00px;background:rgba(230,230,230,.75);"></div><div class="a" style="left:135.00px;top:73.60px;width:20.35px;height:1.20px;background:rgba(220,220,220,.4);"></div><div class="a" style="left:130.00px;top:77.40px;width:3.00px;height:3.00px;background:rgba(230,230,230,.75);"></div><div class="a" style="left:135.00px;top:78.40px;width:19.63px;height:1.20px;background:rgba(220,220,220,.4);"></div><div class="a" style="left:127.00px;top:98.00px;width:20.00px;height:2.00px;background:rgba(220,220,220,.5);"></div><div class="a" style="left:148.00px;top:76.00px;width:34.00px;height:26.00px;background:#0a0a0a;"></div><div class="a" style="left:160.00px;top:76.00px;width:22.00px;height:10.00px;background:linear-gradient(90deg,#5a2a55,#b03a7a);"></div><div class="a" style="left:160px;top:81px;width:13px;height:16px;background:#3a2a26;border-radius:50%"></div><div class="a" style="left:162px;top:85px;width:8px;height:11px;background:#6a4a3c;border-radius:50%"></div><div class="a" style="left:173.00px;top:92.00px;width:9.00px;height:4.00px;background:rgba(220,220,220,.7);"></div></div>
<div style="position:absolute;left:548.40px;top:370.16px;font-size:6.78px;line-height:6.78px;color:#363636;font-weight:400;white-space:nowrap;-webkit-text-stroke:0.12px #363636">Baatarbileg Erkhembaya-CAI NatLPr-A1</div>
<div style="position:absolute;left:548.30px;top:383.26px;font-size:6.55px;line-height:6.55px;color:#585858;font-weight:400;white-space:nowrap;">CAI_NatLPr-Assignment_1 - Sommer 2025</div>
<svg class="a" style="left:549.10px;top:396.40px" width="7" height="6" viewBox="0 0 7 6"><path d="M1 5.2 L5.5 1.2" stroke="#7f9a80" stroke-width="1.7" stroke-linecap="round"/><path d="M1.2 4.6 L2.6 3.4" stroke="#4a7a3a" stroke-width="1"/><rect x="4.4" y="0.6" width="1.8" height="1.6" fill="#9ab0c8" transform="rotate(-40 5.3 1.4)"/></svg>
<div class="a" style="left:548.30px;top:404.70px;width:22px;height:6px;overflow:hidden"><div style="position:absolute;left:0.90px;top:-0.43px;font-size:6.3px;line-height:6.3px;color:#6f74a8;font-weight:400;white-space:nowrap;">Avatar</div></div>
<div style="position:absolute;left:571.70px;top:401.40px;font-size:6.5px;line-height:6.5px;color:#4a4a4a;font-weight:400;white-space:nowrap;">Gokul Srinivasagan</div>
<div class="th bl" style="left:739.50px;top:253.40px"><div class="a" style="left:0.00px;top:0.00px;width:182.50px;height:102.60px;background:#000;"></div><div class="a" style="left:2.00px;top:2.00px;width:89.00px;height:91.00px;background:#171717;"></div><div class="a" style="left:2.00px;top:2.00px;width:89.00px;height:2.00px;background:#141414;"></div><div class="a" style="left:0;top:0;width:100%;height:100%;opacity:.75"><div class="a" style="left:8.00px;top:5.00px;width:5.29px;height:1.30px;background:rgba(220,220,220,.35);"></div><div class="a" style="left:14.49px;top:5.00px;width:8.06px;height:1.30px;background:rgba(220,220,220,.35);"></div><div class="a" style="left:23.75px;top:5.00px;width:9.02px;height:1.30px;background:rgba(220,220,220,.35);"></div><div class="a" style="left:33.97px;top:5.00px;width:4.97px;height:1.30px;background:rgba(220,220,220,.35);"></div></div><div class="a" style="left:0;top:0;width:100%;height:100%;opacity:.75"><div class="a" style="left:8.00px;top:8.00px;width:15.02px;height:1.30px;background:rgba(220,220,220,.28);"></div><div class="a" style="left:24.22px;top:8.00px;width:8.83px;height:1.30px;background:rgba(220,220,220,.28);"></div><div class="a" style="left:34.25px;top:8.00px;width:4.29px;height:1.30px;background:rgba(220,220,220,.28);"></div><div class="a" style="left:39.74px;top:8.00px;width:12.21px;height:1.30px;background:rgba(220,220,220,.28);"></div><div class="a" style="left:53.15px;top:8.00px;width:9.96px;height:1.30px;background:rgba(220,220,220,.28);"></div><div class="a" style="left:64.32px;top:8.00px;width:14.74px;height:1.30px;background:rgba(220,220,220,.28);"></div><div class="a" style="left:80.26px;top:8.00px;width:3.27px;height:1.30px;background:rgba(220,220,220,.28);"></div></div><div class="a" style="left:0;top:0;width:100%;height:100%;opacity:.75"><div class="a" style="left:8.00px;top:11.50px;width:5.17px;height:1.30px;background:rgba(220,220,220,.28);"></div><div class="a" style="left:14.37px;top:11.50px;width:16.19px;height:1.30px;background:rgba(220,220,220,.28);"></div><div class="a" style="left:31.76px;top:11.50px;width:17.26px;height:1.30px;background:rgba(220,220,220,.28);"></div><div class="a" style="left:50.22px;top:11.50px;width:4.90px;height:1.30px;background:rgba(220,220,220,.28);"></div><div class="a" style="left:56.32px;top:11.50px;width:9.56px;height:1.30px;background:rgba(220,220,220,.28);"></div><div class="a" style="left:67.08px;top:11.50px;width:7.60px;height:1.30px;background:rgba(220,220,220,.28);"></div><div class="a" style="left:75.88px;top:11.50px;width:10.07px;height:1.30px;background:rgba(220,220,220,.28);"></div></div><div class="a" style="left:0;top:0;width:100%;height:100%;opacity:.75"><div class="a" style="left:8.00px;top:15.00px;width:15.90px;height:1.30px;background:rgba(220,220,220,.25);"></div><div class="a" style="left:25.10px;top:15.00px;width:17.88px;height:1.30px;background:rgba(220,220,220,.25);"></div><div class="a" style="left:44.18px;top:15.00px;width:17.18px;height:1.30px;background:rgba(220,220,220,.25);"></div><div class="a" style="left:62.56px;top:15.00px;width:4.83px;height:1.30px;background:rgba(220,220,220,.25);"></div><div class="a" style="left:68.59px;top:15.00px;width:4.39px;height:1.30px;background:rgba(220,220,220,.25);"></div><div class="a" style="left:74.18px;top:15.00px;width:7.61px;height:1.30px;background:rgba(220,220,220,.25);"></div></div><div class="a" style="left:2.00px;top:4.00px;width:3.00px;height:88.00px;background:#111111;"></div><div class="a" style="left:0;top:0;width:100%;height:100%;opacity:.75"><div class="a" style="left:20.00px;top:21.00px;width:7.79px;height:1.20px;background:rgba(200,200,200,.26);"></div><div class="a" style="left:17.00px;top:23.30px;width:14.61px;height:1.20px;background:rgba(170,195,170,.28);"></div><div class="a" style="left:32.81px;top:23.30px;width:9.20px;height:1.20px;background:rgba(170,195,170,.28);"></div><div class="a" style="left:43.21px;top:23.30px;width:8.28px;height:1.20px;background:rgba(200,200,200,.26);"></div><div class="a" style="left:14.00px;top:25.60px;width:15.18px;height:1.20px;background:rgba(200,200,200,.26);"></div><div class="a" style="left:30.38px;top:25.60px;width:5.09px;height:1.20px;background:rgba(200,200,200,.26);"></div><div class="a" style="left:36.67px;top:25.60px;width:5.72px;height:1.20px;background:rgba(200,200,200,.26);"></div><div class="a" style="left:14.00px;top:27.90px;width:15.79px;height:1.20px;background:rgba(185,200,215,.28);"></div><div class="a" style="left:30.99px;top:27.90px;width:10.33px;height:1.20px;background:rgba(200,200,200,.26);"></div><div class="a" style="left:42.52px;top:27.90px;width:10.69px;height:1.20px;background:rgba(185,200,215,.28);"></div><div class="a" style="left:54.41px;top:27.90px;width:6.00px;height:1.20px;background:rgba(190,190,190,.28);"></div><div class="a" style="left:61.61px;top:27.90px;width:3.69px;height:1.20px;background:rgba(185,200,215,.28);"></div><div class="a" style="left:20.00px;top:30.20px;width:9.86px;height:1.20px;background:rgba(190,190,190,.28);"></div><div class="a" style="left:31.06px;top:30.20px;width:7.80px;height:1.20px;background:rgba(170,195,170,.28);"></div><div class="a" style="left:40.05px;top:30.20px;width:8.68px;height:1.20px;background:rgba(185,200,215,.28);"></div><div class="a" style="left:49.93px;top:30.20px;width:5.53px;height:1.20px;background:rgba(170,195,170,.28);"></div><div class="a" style="left:56.66px;top:30.20px;width:10.75px;height:1.20px;background:rgba(210,200,180,.26);"></div><div class="a" style="left:14.00px;top:34.80px;width:5.67px;height:1.20px;background:rgba(170,195,170,.28);"></div><div class="a" style="left:20.87px;top:34.80px;width:17.59px;height:1.20px;background:rgba(170,195,170,.28);"></div><div class="a" style="left:39.66px;top:34.80px;width:7.34px;height:1.20px;background:rgba(200,200,200,.26);"></div><div class="a" style="left:14.00px;top:41.70px;width:6.02px;height:1.20px;background:rgba(170,195,170,.28);"></div><div class="a" style="left:21.22px;top:41.70px;width:10.19px;height:1.20px;background:rgba(170,195,170,.28);"></div><div class="a" style="left:32.61px;top:41.70px;width:11.15px;height:1.20px;background:rgba(170,195,170,.28);"></div><div class="a" style="left:44.96px;top:41.70px;width:15.05px;height:1.20px;background:rgba(170,195,170,.28);"></div><div class="a" style="left:14.00px;top:46.30px;width:7.88px;height:1.20px;background:rgba(200,200,200,.26);"></div><div class="a" style="left:23.08px;top:46.30px;width:11.30px;height:1.20px;background:rgba(200,200,200,.26);"></div><div class="a" style="left:35.58px;top:46.30px;width:6.75px;height:1.20px;background:rgba(190,190,190,.28);"></div><div class="a" style="left:43.53px;top:46.30px;width:16.45px;height:1.20px;background:rgba(200,200,200,.26);"></div><div class="a" style="left:61.18px;top:46.30px;width:3.42px;height:1.20px;background:rgba(200,200,200,.26);"></div><div class="a" style="left:14.00px;top:48.60px;width:4.14px;height:1.20px;background:rgba(200,200,200,.26);"></div><div class="a" style="left:19.34px;top:48.60px;width:11.27px;height:1.20px;background:rgba(200,200,200,.26);"></div><div class="a" style="left:31.81px;top:48.60px;width:16.33px;height:1.20px;background:rgba(200,200,200,.26);"></div><div class="a" style="left:17.00px;top:50.90px;width:5.26px;height:1.20px;background:rgba(185,200,215,.28);"></div><div class="a" style="left:23.46px;top:50.90px;width:14.68px;height:1.20px;background:rgba(180,180,180,.3);"></div><div class="a" style="left:39.35px;top:50.90px;width:7.73px;height:1.20px;background:rgba(170,195,170,.28);"></div><div class="a" style="left:48.27px;top:50.90px;width:4.51px;height:1.20px;background:rgba(185,200,215,.28);"></div><div class="a" style="left:53.99px;top:50.90px;width:10.11px;height:1.20px;background:rgba(185,200,215,.28);"></div><div class="a" style="left:20.00px;top:53.20px;width:5.69px;height:1.20px;background:rgba(190,190,190,.28);"></div><div class="a" style="left:26.89px;top:53.20px;width:15.43px;height:1.20px;background:rgba(190,190,190,.28);"></div><div class="a" style="left:43.52px;top:53.20px;width:8.49px;height:1.20px;background:rgba(190,190,190,.28);"></div><div class="a" style="left:53.22px;top:53.20px;width:9.34px;height:1.20px;background:rgba(190,190,190,.28);"></div><div class="a" style="left:63.76px;top:53.20px;width:4.86px;height:1.20px;background:rgba(190,190,190,.28);"></div><div class="a" style="left:69.81px;top:53.20px;width:3.62px;height:1.20px;background:rgba(190,190,190,.28);"></div><div class="a" style="left:23.00px;top:55.50px;width:4.29px;height:1.20px;background:rgba(200,200,200,.26);"></div><div class="a" style="left:28.49px;top:55.50px;width:7.13px;height:1.20px;background:rgba(190,190,190,.28);"></div><div class="a" style="left:36.82px;top:55.50px;width:8.37px;height:1.20px;background:rgba(200,200,200,.26);"></div><div class="a" style="left:46.39px;top:55.50px;width:17.37px;height:1.20px;background:rgba(180,180,180,.3);"></div><div class="a" style="left:64.96px;top:55.50px;width:3.26px;height:1.20px;background:rgba(210,200,180,.26);"></div><div class="a" style="left:20.00px;top:57.80px;width:10.22px;height:1.20px;background:rgba(190,190,190,.28);"></div><div class="a" style="left:31.42px;top:57.80px;width:14.04px;height:1.20px;background:rgba(190,190,190,.28);"></div><div class="a" style="left:46.66px;top:57.80px;width:4.49px;height:1.20px;background:rgba(180,180,180,.3);"></div><div class="a" style="left:14.00px;top:60.10px;width:11.10px;height:1.20px;background:rgba(185,200,215,.28);"></div><div class="a" style="left:20.00px;top:67.00px;width:17.27px;height:1.20px;background:rgba(180,180,180,.3);"></div><div class="a" style="left:38.47px;top:67.00px;width:9.44px;height:1.20px;background:rgba(200,200,200,.26);"></div><div class="a" style="left:49.12px;top:67.00px;width:13.21px;height:1.20px;background:rgba(200,200,200,.26);"></div><div class="a" style="left:14.00px;top:69.30px;width:9.61px;height:1.20px;background:rgba(170,195,170,.28);"></div><div class="a" style="left:24.81px;top:69.30px;width:14.02px;height:1.20px;background:rgba(170,195,170,.28);"></div><div class="a" style="left:40.03px;top:69.30px;width:11.90px;height:1.20px;background:rgba(170,195,170,.28);"></div><div class="a" style="left:53.13px;top:69.30px;width:4.72px;height:1.20px;background:rgba(170,195,170,.28);"></div><div class="a" style="left:17.00px;top:71.60px;width:17.08px;height:1.20px;background:rgba(185,200,215,.28);"></div><div class="a" style="left:35.28px;top:71.60px;width:12.59px;height:1.20px;background:rgba(190,190,190,.28);"></div><div class="a" style="left:14.00px;top:73.90px;width:11.07px;height:1.20px;background:rgba(200,200,200,.26);"></div><div class="a" style="left:26.27px;top:73.90px;width:8.95px;height:1.20px;background:rgba(185,200,215,.28);"></div><div class="a" style="left:14.00px;top:76.20px;width:6.72px;height:1.20px;background:rgba(180,180,180,.3);"></div><div class="a" style="left:23.00px;top:78.50px;width:12.70px;height:1.20px;background:rgba(210,200,180,.26);"></div><div class="a" style="left:36.90px;top:78.50px;width:4.19px;height:1.20px;background:rgba(190,190,190,.28);"></div><div class="a" style="left:42.29px;top:78.50px;width:8.03px;height:1.20px;background:rgba(180,180,180,.3);"></div><div class="a" style="left:51.51px;top:78.50px;width:6.34px;height:1.20px;background:rgba(210,200,180,.26);"></div><div class="a" style="left:59.05px;top:78.50px;width:9.26px;height:1.20px;background:rgba(210,200,180,.26);"></div><div class="a" style="left:14.00px;top:80.80px;width:5.84px;height:1.20px;background:rgba(185,200,215,.28);"></div><div class="a" style="left:21.04px;top:80.80px;width:12.08px;height:1.20px;background:rgba(180,180,180,.3);"></div><div class="a" style="left:34.32px;top:80.80px;width:5.23px;height:1.20px;background:rgba(210,200,180,.26);"></div><div class="a" style="left:23.00px;top:83.10px;width:13.11px;height:1.20px;background:rgba(180,180,180,.3);"></div><div class="a" style="left:37.31px;top:83.10px;width:9.14px;height:1.20px;background:rgba(200,200,200,.26);"></div><div class="a" style="left:47.64px;top:83.10px;width:8.25px;height:1.20px;background:rgba(200,200,200,.26);"></div><div class="a" style="left:57.09px;top:83.10px;width:5.65px;height:1.20px;background:rgba(170,195,170,.28);"></div><div class="a" style="left:20.00px;top:87.70px;width:4.17px;height:1.20px;background:rgba(200,200,200,.26);"></div><div class="a" style="left:25.37px;top:87.70px;width:8.54px;height:1.20px;background:rgba(170,195,170,.28);"></div><div class="a" style="left:35.10px;top:87.70px;width:7.99px;height:1.20px;background:rgba(185,200,215,.28);"></div><div class="a" style="left:44.29px;top:87.70px;width:8.14px;height:1.20px;background:rgba(185,200,215,.28);"></div><div class="a" style="left:53.63px;top:87.70px;width:6.22px;height:1.20px;background:rgba(170,195,170,.28);"></div><div class="a" style="left:61.05px;top:87.70px;width:10.16px;height:1.20px;background:rgba(185,200,215,.28);"></div><div class="a" style="left:17.00px;top:90.00px;width:11.29px;height:1.20px;background:rgba(190,190,190,.28);"></div><div class="a" style="left:29.49px;top:90.00px;width:13.49px;height:1.20px;background:rgba(190,190,190,.28);"></div><div class="a" style="left:44.18px;top:90.00px;width:9.83px;height:1.20px;background:rgba(190,190,190,.28);"></div><div class="a" style="left:55.21px;top:90.00px;width:3.56px;height:1.20px;background:rgba(210,200,180,.26);"></div><div class="a" style="left:23.00px;top:92.30px;width:9.75px;height:1.20px;background:rgba(180,180,180,.3);"></div></div><div class="a" style="left:2.00px;top:91.00px;width:89.00px;height:2.00px;background:#101010;"></div></div>
<div style="position:absolute;left:741.10px;top:370.16px;font-size:6.78px;line-height:6.78px;color:#363636;font-weight:400;white-space:nowrap;-webkit-text-stroke:0.12px #363636">Dominik Lohwasser-CAI NatLPr-A1</div>
<div style="position:absolute;left:741.00px;top:383.26px;font-size:6.55px;line-height:6.55px;color:#585858;font-weight:400;white-space:nowrap;">CAI_NatLPr-Assignment_1 - Sommer 2025</div>
<svg class="a" style="left:741.80px;top:396.40px" width="7" height="6" viewBox="0 0 7 6"><path d="M1 5.2 L5.5 1.2" stroke="#7f9a80" stroke-width="1.7" stroke-linecap="round"/><path d="M1.2 4.6 L2.6 3.4" stroke="#4a7a3a" stroke-width="1"/><rect x="4.4" y="0.6" width="1.8" height="1.6" fill="#9ab0c8" transform="rotate(-40 5.3 1.4)"/></svg>
<div class="a" style="left:741.00px;top:404.70px;width:22px;height:6px;overflow:hidden"><div style="position:absolute;left:0.90px;top:-0.43px;font-size:6.3px;line-height:6.3px;color:#6f74a8;font-weight:400;white-space:nowrap;">Avatar</div></div>
<div style="position:absolute;left:764.40px;top:401.40px;font-size:6.5px;line-height:6.5px;color:#4a4a4a;font-weight:400;white-space:nowrap;">Gokul Srinivasagan</div>
<div class="th bl" style="left:161.40px;top:418.30px"><div class="a" style="left:0.00px;top:0.00px;width:182.50px;height:102.60px;background:#000;"></div><div class="a" style="left:1.00px;top:1.00px;width:180.50px;height:100.60px;background:#171717;"></div><div class="a" style="left:1.00px;top:1.00px;width:180.50px;height:3.00px;background:#121212;"></div><div class="a" style="left:0;top:0;width:100%;height:100%;opacity:.75"><div class="a" style="left:6.00px;top:2.00px;width:9.78px;height:1.30px;background:rgba(220,220,220,.35);"></div><div class="a" style="left:16.98px;top:2.00px;width:14.72px;height:1.30px;background:rgba(220,220,220,.35);"></div><div class="a" style="left:32.90px;top:2.00px;width:9.42px;height:1.30px;background:rgba(220,220,220,.35);"></div></div><div class="a" style="left:150.00px;top:1.50px;width:30.00px;height:2.00px;background:rgba(220,220,220,.35);"></div><div class="a" style="left:1.00px;top:4.00px;width:6.00px;height:97.60px;background:#121212;"></div><div class="a" style="left:2.50px;top:8.00px;width:3.00px;height:3.00px;background:rgba(160,160,160,.4);border-radius:1px"></div><div class="a" style="left:2.50px;top:13.00px;width:3.00px;height:3.00px;background:rgba(160,160,160,.4);border-radius:1px"></div><div class="a" style="left:2.50px;top:19.00px;width:3.00px;height:3.00px;background:rgba(160,160,160,.4);border-radius:1px"></div><div class="a" style="left:2.50px;top:24.00px;width:3.00px;height:3.00px;background:rgba(160,160,160,.4);border-radius:1px"></div><div class="a" style="left:2.50px;top:30.00px;width:3.00px;height:3.00px;background:rgba(160,160,160,.4);border-radius:1px"></div><div class="a" style="left:2.50px;top:36.00px;width:3.00px;height:3.00px;background:rgba(160,160,160,.4);border-radius:1px"></div><div class="a" style="left:2.50px;top:43.00px;width:3.00px;height:3.00px;background:rgba(160,160,160,.4);border-radius:1px"></div><div class="a" style="left:2.50px;top:49.00px;width:3.00px;height:3.00px;background:rgba(160,160,160,.4);border-radius:1px"></div><div class="a" style="left:7.00px;top:4.00px;width:26.00px;height:97.60px;background:#141414;"></div><div class="a" style="left:11.00px;top:12.50px;width:18.00px;height:1.50px;background:rgba(200,200,200,.5);"></div><div class="a" style="left:15.00px;top:15.50px;width:11.35px;height:1.00px;background:rgba(200,200,200,.38);"></div><div class="a" style="left:13.00px;top:18.40px;width:17.85px;height:1.00px;background:rgba(200,200,200,.38);"></div><div class="a" style="left:15.00px;top:21.30px;width:11.00px;height:1.00px;background:rgba(200,200,200,.38);"></div><div class="a" style="left:13.00px;top:24.20px;width:16.23px;height:1.00px;background:rgba(200,200,200,.38);"></div><div class="a" style="left:13.00px;top:27.10px;width:16.51px;height:1.00px;background:rgba(200,200,200,.38);"></div><div class="a" style="left:13.00px;top:30.00px;width:13.18px;height:1.00px;background:rgba(200,200,200,.38);"></div><div class="a" style="left:15.00px;top:32.90px;width:15.00px;height:1.00px;background:rgba(200,200,200,.38);"></div><div class="a" style="left:13.00px;top:35.80px;width:15.83px;height:1.00px;background:rgba(200,200,200,.38);"></div><div class="a" style="left:11.00px;top:38.70px;width:17.08px;height:1.00px;background:rgba(200,200,200,.38);"></div><div class="a" style="left:13.00px;top:41.60px;width:13.43px;height:1.00px;background:rgba(200,200,200,.38);"></div><div class="a" style="left:13.00px;top:44.50px;width:11.66px;height:1.00px;background:rgba(200,200,200,.38);"></div><div class="a" style="left:13.00px;top:47.40px;width:17.23px;height:1.00px;background:rgba(200,200,200,.38);"></div><div class="a" style="left:13.00px;top:50.30px;width:15.18px;height:1.00px;background:rgba(200,200,200,.38);"></div><div class="a" style="left:15.00px;top:53.20px;width:12.09px;height:1.00px;background:rgba(200,200,200,.38);"></div><div class="a" style="left:13.00px;top:56.10px;width:12.91px;height:1.00px;background:rgba(200,200,200,.38);"></div><div class="a" style="left:15.00px;top:59.00px;width:17.54px;height:1.00px;background:rgba(200,200,200,.38);"></div><div class="a" style="left:13.00px;top:61.90px;width:11.84px;height:1.00px;background:rgba(200,200,200,.38);"></div><div class="a" style="left:13.00px;top:64.80px;width:18.02px;height:1.00px;background:rgba(200,200,200,.38);"></div><div class="a" style="left:11.00px;top:67.70px;width:10.23px;height:1.00px;background:rgba(200,200,200,.38);"></div><div class="a" style="left:13.00px;top:70.60px;width:15.08px;height:1.00px;background:rgba(200,200,200,.38);"></div><div class="a" style="left:13.00px;top:73.50px;width:12.70px;height:1.00px;background:rgba(200,200,200,.38);"></div><div class="a" style="left:15.00px;top:76.40px;width:16.96px;height:1.00px;background:rgba(200,200,200,.38);"></div><div class="a" style="left:15.00px;top:79.30px;width:15.58px;height:1.00px;background:rgba(200,200,200,.38);"></div><div class="a" style="left:13.00px;top:82.20px;width:14.66px;height:1.00px;background:rgba(200,200,200,.38);"></div><div class="a" style="left:15.00px;top:85.10px;width:16.54px;height:1.00px;background:rgba(200,200,200,.38);"></div><div class="a" style="left:13.00px;top:88.00px;width:13.51px;height:1.00px;background:rgba(200,200,200,.38);"></div><div class="a" style="left:13.00px;top:90.90px;width:10.37px;height:1.00px;background:rgba(200,200,200,.38);"></div><div class="a" style="left:15.00px;top:93.80px;width:13.16px;height:1.00px;background:rgba(200,200,200,.38);"></div><div class="a" style="left:11.00px;top:96.70px;width:16.09px;height:1.00px;background:rgba(200,200,200,.38);"></div><div class="a" style="left:15.00px;top:99.60px;width:12.06px;height:1.00px;background:rgba(200,200,200,.38);"></div><div class="a" style="left:8.00px;top:51.00px;width:25.00px;height:2.00px;background:rgba(140,140,140,.3);"></div><div class="a" style="left:33.00px;top:4.00px;width:148.50px;height:97.60px;background:#171717;"></div><div class="a" style="left:0;top:0;width:100%;height:100%;opacity:.75"><div class="a" style="left:35.00px;top:8.00px;width:16.32px;height:1.30px;background:rgba(220,220,220,.35);"></div><div class="a" style="left:52.52px;top:8.00px;width:10.81px;height:1.30px;background:rgba(220,220,220,.35);"></div><div class="a" style="left:64.53px;top:8.00px;width:12.74px;height:1.30px;background:rgba(220,220,220,.35);"></div><div class="a" style="left:78.48px;top:8.00px;width:8.81px;height:1.30px;background:rgba(220,220,220,.35);"></div><div class="a" style="left:88.48px;top:8.00px;width:4.02px;height:1.30px;background:rgba(220,220,220,.35);"></div></div><div class="a" style="left:0;top:0;width:100%;height:100%;opacity:.75"><div class="a" style="left:35.00px;top:12.00px;width:11.18px;height:1.30px;background:rgba(200,200,200,.3);"></div><div class="a" style="left:47.38px;top:12.00px;width:13.66px;height:1.30px;background:rgba(200,200,200,.3);"></div><div class="a" style="left:62.23px;top:12.00px;width:3.14px;height:1.30px;background:rgba(200,200,200,.3);"></div></div><div class="a" style="left:0;top:0;width:100%;height:100%;opacity:.75"><div class="a" style="left:35.00px;top:16.00px;width:15.43px;height:1.30px;background:rgba(200,200,200,.3);"></div><div class="a" style="left:51.63px;top:16.00px;width:9.77px;height:1.30px;background:rgba(200,200,200,.3);"></div><div class="a" style="left:62.60px;top:16.00px;width:8.94px;height:1.30px;background:rgba(200,200,200,.3);"></div><div class="a" style="left:72.74px;top:16.00px;width:12.91px;height:1.30px;background:rgba(200,200,200,.3);"></div><div class="a" style="left:86.85px;top:16.00px;width:4.15px;height:1.30px;background:rgba(200,200,200,.3);"></div><div class="a" style="left:92.20px;top:16.00px;width:3.58px;height:1.30px;background:rgba(200,200,200,.3);"></div></div><div style="position:absolute;left:38.30px;top:22.73px;font-size:5.4px;line-height:5.4px;color:rgba(235,235,235,.85);font-weight:400;white-space:nowrap;">Assignmnet 2 (100 points)</div><div class="a" style="left:0;top:0;width:100%;height:100%;opacity:.75"><div class="a" style="left:38.00px;top:35.00px;width:6.45px;height:1.20px;background:rgba(230,230,230,.55);"></div><div class="a" style="left:45.65px;top:35.00px;width:11.94px;height:1.20px;background:rgba(230,230,230,.55);"></div><div class="a" style="left:58.79px;top:35.00px;width:3.89px;height:1.20px;background:rgba(230,230,230,.55);"></div><div class="a" style="left:38.00px;top:37.90px;width:6.03px;height:1.20px;background:rgba(230,230,230,.55);"></div><div class="a" style="left:45.23px;top:37.90px;width:11.13px;height:1.20px;background:rgba(230,230,230,.55);"></div><div class="a" style="left:38.00px;top:40.80px;width:12.58px;height:1.20px;background:rgba(230,230,230,.55);"></div><div class="a" style="left:51.78px;top:40.80px;width:4.87px;height:1.20px;background:rgba(230,230,230,.55);"></div><div class="a" style="left:57.85px;top:40.80px;width:3.37px;height:1.20px;background:rgba(230,230,230,.55);"></div><div class="a" style="left:38.00px;top:43.70px;width:16.03px;height:1.20px;background:rgba(230,230,230,.55);"></div><div class="a" style="left:55.23px;top:43.70px;width:3.44px;height:1.20px;background:rgba(230,230,230,.55);"></div></div><div style="position:absolute;left:38.50px;top:52.95px;font-size:3.6px;line-height:3.6px;color:rgba(225,225,225,.7);font-weight:400;white-space:nowrap;">SMS Spam Detection (100 points)</div><div class="a" style="left:96.00px;top:56.00px;width:25.00px;height:1.00px;background:rgba(200,200,200,.3);"></div><div class="a" style="left:123.00px;top:55.00px;width:2.00px;height:2.00px;background:rgba(255,255,255,.9);"></div><div class="a" style="left:0;top:0;width:100%;height:100%;opacity:.75"><div class="a" style="left:38.00px;top:61.00px;width:12.16px;height:1.30px;background:rgba(200,200,200,.32);"></div><div class="a" style="left:51.36px;top:61.00px;width:10.15px;height:1.30px;background:rgba(200,200,200,.32);"></div><div class="a" style="left:62.71px;top:61.00px;width:7.49px;height:1.30px;background:rgba(200,200,200,.32);"></div><div class="a" style="left:71.40px;top:61.00px;width:8.41px;height:1.30px;background:rgba(200,200,200,.32);"></div><div class="a" style="left:81.01px;top:61.00px;width:15.42px;height:1.30px;background:rgba(200,200,200,.32);"></div><div class="a" style="left:97.63px;top:61.00px;width:17.44px;height:1.30px;background:rgba(200,200,200,.32);"></div><div class="a" style="left:116.27px;top:61.00px;width:17.30px;height:1.30px;background:rgba(200,200,200,.32);"></div><div class="a" style="left:134.77px;top:61.00px;width:13.45px;height:1.30px;background:rgba(200,200,200,.32);"></div><div class="a" style="left:149.42px;top:61.00px;width:9.79px;height:1.30px;background:rgba(200,200,200,.32);"></div><div class="a" style="left:160.41px;top:61.00px;width:2.43px;height:1.30px;background:rgba(200,200,200,.32);"></div><div class="a" style="left:38.00px;top:63.50px;width:6.61px;height:1.30px;background:rgba(200,200,200,.32);"></div><div class="a" style="left:45.81px;top:63.50px;width:8.07px;height:1.30px;background:rgba(200,200,200,.32);"></div><div class="a" style="left:55.08px;top:63.50px;width:5.61px;height:1.30px;background:rgba(200,200,200,.32);"></div><div class="a" style="left:61.89px;top:63.50px;width:9.40px;height:1.30px;background:rgba(200,200,200,.32);"></div><div class="a" style="left:72.49px;top:63.50px;width:4.92px;height:1.30px;background:rgba(200,200,200,.32);"></div><div class="a" style="left:78.60px;top:63.50px;width:11.75px;height:1.30px;background:rgba(200,200,200,.32);"></div><div class="a" style="left:91.56px;top:63.50px;width:7.97px;height:1.30px;background:rgba(200,200,200,.32);"></div><div class="a" style="left:100.73px;top:63.50px;width:7.91px;height:1.30px;background:rgba(200,200,200,.32);"></div><div class="a" style="left:109.84px;top:63.50px;width:7.39px;height:1.30px;background:rgba(200,200,200,.32);"></div><div class="a" style="left:118.42px;top:63.50px;width:7.78px;height:1.30px;background:rgba(200,200,200,.32);"></div><div class="a" style="left:127.40px;top:63.50px;width:5.79px;height:1.30px;background:rgba(200,200,200,.32);"></div><div class="a" style="left:134.39px;top:63.50px;width:15.71px;height:1.30px;background:rgba(200,200,200,.32);"></div><div class="a" style="left:151.29px;top:63.50px;width:6.23px;height:1.30px;background:rgba(200,200,200,.32);"></div><div class="a" style="left:158.72px;top:63.50px;width:3.01px;height:1.30px;background:rgba(200,200,200,.32);"></div><div class="a" style="left:38.00px;top:66.00px;width:7.18px;height:1.30px;background:rgba(200,200,200,.32);"></div><div class="a" style="left:46.38px;top:66.00px;width:5.83px;height:1.30px;background:rgba(200,200,200,.32);"></div><div class="a" style="left:53.42px;top:66.00px;width:7.65px;height:1.30px;background:rgba(200,200,200,.32);"></div><div class="a" style="left:62.27px;top:66.00px;width:12.23px;height:1.30px;background:rgba(200,200,200,.32);"></div><div class="a" style="left:75.69px;top:66.00px;width:9.66px;height:1.30px;background:rgba(200,200,200,.32);"></div><div class="a" style="left:86.55px;top:66.00px;width:5.76px;height:1.30px;background:rgba(200,200,200,.32);"></div><div class="a" style="left:93.51px;top:66.00px;width:13.49px;height:1.30px;background:rgba(200,200,200,.32);"></div><div class="a" style="left:108.20px;top:66.00px;width:14.30px;height:1.30px;background:rgba(200,200,200,.32);"></div><div class="a" style="left:123.70px;top:66.00px;width:4.40px;height:1.30px;background:rgba(200,200,200,.32);"></div><div class="a" style="left:129.30px;top:66.00px;width:6.03px;height:1.30px;background:rgba(200,200,200,.32);"></div><div class="a" style="left:136.53px;top:66.00px;width:13.73px;height:1.30px;background:rgba(200,200,200,.32);"></div><div class="a" style="left:151.46px;top:66.00px;width:7.24px;height:1.30px;background:rgba(200,200,200,.32);"></div><div class="a" style="left:159.90px;top:66.00px;width:4.95px;height:1.30px;background:rgba(200,200,200,.32);"></div><div class="a" style="left:166.05px;top:66.00px;width:12.87px;height:1.30px;background:rgba(200,200,200,.32);"></div><div class="a" style="left:38.00px;top:68.50px;width:7.17px;height:1.30px;background:rgba(200,200,200,.32);"></div><div class="a" style="left:46.37px;top:68.50px;width:7.95px;height:1.30px;background:rgba(200,200,200,.32);"></div><div class="a" style="left:55.52px;top:68.50px;width:16.72px;height:1.30px;background:rgba(200,200,200,.32);"></div><div class="a" style="left:73.45px;top:68.50px;width:16.36px;height:1.30px;background:rgba(200,200,200,.32);"></div><div class="a" style="left:91.01px;top:68.50px;width:5.85px;height:1.30px;background:rgba(200,200,200,.32);"></div><div class="a" style="left:98.06px;top:68.50px;width:9.13px;height:1.30px;background:rgba(200,200,200,.32);"></div><div class="a" style="left:108.39px;top:68.50px;width:13.67px;height:1.30px;background:rgba(200,200,200,.32);"></div><div class="a" style="left:123.26px;top:68.50px;width:4.35px;height:1.30px;background:rgba(200,200,200,.32);"></div><div class="a" style="left:128.82px;top:68.50px;width:10.48px;height:1.30px;background:rgba(200,200,200,.32);"></div><div class="a" style="left:140.49px;top:68.50px;width:9.61px;height:1.30px;background:rgba(200,200,200,.32);"></div><div class="a" style="left:151.30px;top:68.50px;width:5.37px;height:1.30px;background:rgba(200,200,200,.32);"></div><div class="a" style="left:157.87px;top:68.50px;width:15.94px;height:1.30px;background:rgba(200,200,200,.32);"></div><div class="a" style="left:38.00px;top:71.00px;width:12.52px;height:1.30px;background:rgba(200,200,200,.32);"></div><div class="a" style="left:51.72px;top:71.00px;width:14.60px;height:1.30px;background:rgba(200,200,200,.32);"></div><div class="a" style="left:67.52px;top:71.00px;width:11.73px;height:1.30px;background:rgba(200,200,200,.32);"></div><div class="a" style="left:80.45px;top:71.00px;width:17.18px;height:1.30px;background:rgba(200,200,200,.32);"></div><div class="a" style="left:98.83px;top:71.00px;width:7.19px;height:1.30px;background:rgba(200,200,200,.32);"></div><div class="a" style="left:107.22px;top:71.00px;width:11.29px;height:1.30px;background:rgba(200,200,200,.32);"></div><div class="a" style="left:119.71px;top:71.00px;width:13.38px;height:1.30px;background:rgba(200,200,200,.32);"></div><div class="a" style="left:134.29px;top:71.00px;width:17.10px;height:1.30px;background:rgba(200,200,200,.32);"></div><div class="a" style="left:152.59px;top:71.00px;width:6.30px;height:1.30px;background:rgba(200,200,200,.32);"></div></div><div class="a" style="left:0;top:0;width:100%;height:100%;opacity:.75"><div class="a" style="left:38.00px;top:75.50px;width:13.53px;height:1.30px;background:rgba(200,200,200,.32);"></div><div class="a" style="left:52.73px;top:75.50px;width:6.94px;height:1.30px;background:rgba(200,200,200,.32);"></div><div class="a" style="left:60.88px;top:75.50px;width:14.49px;height:1.30px;background:rgba(200,200,200,.32);"></div><div class="a" style="left:76.57px;top:75.50px;width:17.97px;height:1.30px;background:rgba(200,200,200,.32);"></div><div class="a" style="left:95.74px;top:75.50px;width:7.09px;height:1.30px;background:rgba(200,200,200,.32);"></div><div class="a" style="left:104.04px;top:75.50px;width:8.89px;height:1.30px;background:rgba(200,200,200,.32);"></div><div class="a" style="left:114.12px;top:75.50px;width:10.20px;height:1.30px;background:rgba(200,200,200,.32);"></div><div class="a" style="left:125.52px;top:75.50px;width:11.12px;height:1.30px;background:rgba(200,200,200,.32);"></div><div class="a" style="left:137.84px;top:75.50px;width:6.88px;height:1.30px;background:rgba(200,200,200,.32);"></div><div class="a" style="left:145.92px;top:75.50px;width:15.85px;height:1.30px;background:rgba(200,200,200,.32);"></div><div class="a" style="left:162.97px;top:75.50px;width:10.34px;height:1.30px;background:rgba(200,200,200,.32);"></div><div class="a" style="left:38.00px;top:78.00px;width:11.62px;height:1.30px;background:rgba(200,200,200,.32);"></div><div class="a" style="left:50.82px;top:78.00px;width:6.35px;height:1.30px;background:rgba(200,200,200,.32);"></div><div class="a" style="left:58.37px;top:78.00px;width:6.82px;height:1.30px;background:rgba(200,200,200,.32);"></div><div class="a" style="left:66.39px;top:78.00px;width:13.61px;height:1.30px;background:rgba(200,200,200,.32);"></div><div class="a" style="left:81.19px;top:78.00px;width:10.76px;height:1.30px;background:rgba(200,200,200,.32);"></div><div class="a" style="left:93.15px;top:78.00px;width:4.08px;height:1.30px;background:rgba(200,200,200,.32);"></div><div class="a" style="left:98.44px;top:78.00px;width:5.86px;height:1.30px;background:rgba(200,200,200,.32);"></div><div class="a" style="left:105.50px;top:78.00px;width:13.77px;height:1.30px;background:rgba(200,200,200,.32);"></div><div class="a" style="left:120.47px;top:78.00px;width:12.23px;height:1.30px;background:rgba(200,200,200,.32);"></div><div class="a" style="left:133.90px;top:78.00px;width:11.68px;height:1.30px;background:rgba(200,200,200,.32);"></div><div class="a" style="left:146.77px;top:78.00px;width:6.37px;height:1.30px;background:rgba(200,200,200,.32);"></div><div class="a" style="left:154.34px;top:78.00px;width:7.26px;height:1.30px;background:rgba(200,200,200,.32);"></div><div class="a" style="left:38.00px;top:80.50px;width:13.66px;height:1.30px;background:rgba(200,200,200,.32);"></div><div class="a" style="left:52.86px;top:80.50px;width:6.89px;height:1.30px;background:rgba(200,200,200,.32);"></div><div class="a" style="left:60.95px;top:80.50px;width:8.25px;height:1.30px;background:rgba(200,200,200,.32);"></div><div class="a" style="left:70.41px;top:80.50px;width:10.27px;height:1.30px;background:rgba(200,200,200,.32);"></div><div class="a" style="left:81.88px;top:80.50px;width:10.23px;height:1.30px;background:rgba(200,200,200,.32);"></div><div class="a" style="left:93.31px;top:80.50px;width:8.05px;height:1.30px;background:rgba(200,200,200,.32);"></div><div class="a" style="left:102.56px;top:80.50px;width:4.64px;height:1.30px;background:rgba(200,200,200,.32);"></div><div class="a" style="left:108.40px;top:80.50px;width:17.72px;height:1.30px;background:rgba(200,200,200,.32);"></div><div class="a" style="left:127.32px;top:80.50px;width:14.46px;height:1.30px;background:rgba(200,200,200,.32);"></div><div class="a" style="left:142.98px;top:80.50px;width:5.52px;height:1.30px;background:rgba(200,200,200,.32);"></div><div class="a" style="left:149.70px;top:80.50px;width:10.08px;height:1.30px;background:rgba(200,200,200,.32);"></div><div class="a" style="left:160.98px;top:80.50px;width:4.12px;height:1.30px;background:rgba(200,200,200,.32);"></div><div class="a" style="left:166.30px;top:80.50px;width:9.99px;height:1.30px;background:rgba(200,200,200,.32);"></div></div><div class="a" style="left:0;top:0;width:100%;height:100%;opacity:.75"><div class="a" style="left:38.00px;top:85.00px;width:13.14px;height:1.30px;background:rgba(200,200,200,.32);"></div><div class="a" style="left:52.34px;top:85.00px;width:4.35px;height:1.30px;background:rgba(200,200,200,.32);"></div><div class="a" style="left:57.90px;top:85.00px;width:8.15px;height:1.30px;background:rgba(200,200,200,.32);"></div><div class="a" style="left:67.25px;top:85.00px;width:5.43px;height:1.30px;background:rgba(200,200,200,.32);"></div><div class="a" style="left:73.88px;top:85.00px;width:8.34px;height:1.30px;background:rgba(200,200,200,.32);"></div><div class="a" style="left:83.42px;top:85.00px;width:9.31px;height:1.30px;background:rgba(200,200,200,.32);"></div><div class="a" style="left:93.93px;top:85.00px;width:8.99px;height:1.30px;background:rgba(200,200,200,.32);"></div><div class="a" style="left:104.12px;top:85.00px;width:11.72px;height:1.30px;background:rgba(200,200,200,.32);"></div><div class="a" style="left:117.04px;top:85.00px;width:7.35px;height:1.30px;background:rgba(200,200,200,.32);"></div><div class="a" style="left:125.59px;top:85.00px;width:16.67px;height:1.30px;background:rgba(200,200,200,.32);"></div><div class="a" style="left:143.46px;top:85.00px;width:10.92px;height:1.30px;background:rgba(200,200,200,.32);"></div><div class="a" style="left:155.58px;top:85.00px;width:6.20px;height:1.30px;background:rgba(200,200,200,.32);"></div><div class="a" style="left:162.99px;top:85.00px;width:5.99px;height:1.30px;background:rgba(200,200,200,.32);"></div><div class="a" style="left:170.17px;top:85.00px;width:2.19px;height:1.30px;background:rgba(200,200,200,.32);"></div><div class="a" style="left:38.00px;top:87.50px;width:10.71px;height:1.30px;background:rgba(200,200,200,.32);"></div><div class="a" style="left:49.91px;top:87.50px;width:4.04px;height:1.30px;background:rgba(200,200,200,.32);"></div><div class="a" style="left:55.15px;top:87.50px;width:15.97px;height:1.30px;background:rgba(200,200,200,.32);"></div><div class="a" style="left:72.33px;top:87.50px;width:9.96px;height:1.30px;background:rgba(200,200,200,.32);"></div><div class="a" style="left:83.48px;top:87.50px;width:11.20px;height:1.30px;background:rgba(200,200,200,.32);"></div><div class="a" style="left:95.89px;top:87.50px;width:8.74px;height:1.30px;background:rgba(200,200,200,.32);"></div><div class="a" style="left:105.83px;top:87.50px;width:13.33px;height:1.30px;background:rgba(200,200,200,.32);"></div><div class="a" style="left:120.35px;top:87.50px;width:16.66px;height:1.30px;background:rgba(200,200,200,.32);"></div><div class="a" style="left:138.21px;top:87.50px;width:4.06px;height:1.30px;background:rgba(200,200,200,.32);"></div><div class="a" style="left:143.47px;top:87.50px;width:13.45px;height:1.30px;background:rgba(200,200,200,.32);"></div></div><div class="a" style="left:1.00px;top:95.10px;width:180.50px;height:2.50px;background:#111111;"></div><div class="a" style="left:1.00px;top:95.10px;width:5.00px;height:2.50px;background:#1f6fb0;"></div><div class="a" style="left:10.00px;top:95.80px;width:10.00px;height:1.00px;background:rgba(200,200,200,.35);"></div><div class="a" style="left:1.00px;top:97.60px;width:180.50px;height:4.00px;background:#000;"></div></div>
<div style="position:absolute;left:163.00px;top:535.06px;font-size:6.78px;line-height:6.78px;color:#363636;font-weight:400;white-space:nowrap;-webkit-text-stroke:0.12px #363636">Albert Didkovskyi-CAI NatLPr-A2</div>
<div style="position:absolute;left:162.90px;top:548.16px;font-size:6.55px;line-height:6.55px;color:#585858;font-weight:400;white-space:nowrap;">CAI_NatLPr-Assignment_2 - Sommer 2025</div>
<svg class="a" style="left:163.70px;top:561.30px" width="7" height="6" viewBox="0 0 7 6"><path d="M1 5.2 L5.5 1.2" stroke="#7f9a80" stroke-width="1.7" stroke-linecap="round"/><path d="M1.2 4.6 L2.6 3.4" stroke="#4a7a3a" stroke-width="1"/><rect x="4.4" y="0.6" width="1.8" height="1.6" fill="#9ab0c8" transform="rotate(-40 5.3 1.4)"/></svg>
<div class="a" style="left:162.90px;top:569.60px;width:22px;height:6px;overflow:hidden"><div style="position:absolute;left:0.90px;top:-0.43px;font-size:6.3px;line-height:6.3px;color:#6f74a8;font-weight:400;white-space:nowrap;">Avatar</div></div>
<div style="position:absolute;left:186.30px;top:566.30px;font-size:6.5px;line-height:6.5px;color:#4a4a4a;font-weight:400;white-space:nowrap;">Gokul Srinivasagan</div>
<div class="th bl" style="left:354.10px;top:418.30px"><div class="a" style="left:0.00px;top:0.00px;width:182.50px;height:102.60px;background:#000;"></div><div class="a" style="left:1.00px;top:1.00px;width:180.50px;height:100.60px;background:#171717;"></div><div class="a" style="left:1.00px;top:1.00px;width:180.50px;height:3.50px;background:#141414;"></div><div class="a" style="left:0;top:0;width:100%;height:100%;opacity:.75"><div class="a" style="left:5.00px;top:2.50px;width:10.00px;height:1.30px;background:rgba(220,220,220,.35);"></div><div class="a" style="left:16.20px;top:2.50px;width:12.76px;height:1.30px;background:rgba(220,220,220,.35);"></div><div class="a" style="left:30.16px;top:2.50px;width:17.47px;height:1.30px;background:rgba(220,220,220,.35);"></div></div><div class="a" style="left:155.00px;top:2.00px;width:22.00px;height:2.00px;background:rgba(220,220,220,.35);"></div><div class="a" style="left:0;top:0;width:100%;height:100%;opacity:.75"><div class="a" style="left:8.00px;top:8.50px;width:12.53px;height:1.30px;background:rgba(220,220,220,.35);"></div></div><div class="a" style="left:0;top:0;width:100%;height:100%;opacity:.75"><div class="a" style="left:8.00px;top:11.50px;width:8.19px;height:1.30px;background:rgba(220,220,220,.25);"></div><div class="a" style="left:17.39px;top:11.50px;width:11.57px;height:1.30px;background:rgba(220,220,220,.25);"></div></div><div class="a" style="left:0;top:0;width:100%;height:100%;opacity:.75"><div class="a" style="left:8.00px;top:14.50px;width:11.77px;height:1.30px;background:rgba(220,220,220,.28);"></div><div class="a" style="left:20.97px;top:14.50px;width:9.04px;height:1.30px;background:rgba(220,220,220,.28);"></div><div class="a" style="left:31.21px;top:14.50px;width:9.55px;height:1.30px;background:rgba(220,220,220,.28);"></div><div class="a" style="left:41.96px;top:14.50px;width:17.56px;height:1.30px;background:rgba(220,220,220,.28);"></div><div class="a" style="left:60.72px;top:14.50px;width:7.10px;height:1.30px;background:rgba(220,220,220,.28);"></div><div class="a" style="left:69.01px;top:14.50px;width:13.10px;height:1.30px;background:rgba(220,220,220,.28);"></div><div class="a" style="left:83.31px;top:14.50px;width:11.16px;height:1.30px;background:rgba(220,220,220,.28);"></div></div><div class="a" style="left:1.00px;top:4.50px;width:7.00px;height:97.60px;background:#121212;"></div><div style="position:absolute;left:12.00px;top:20.42px;font-size:3.4px;line-height:3.4px;color:rgba(225,225,225,.7);font-weight:400;white-space:nowrap;">SMS Spam Detection (100 points)</div><div class="a" style="left:0;top:0;width:100%;height:100%;opacity:.75"><div class="a" style="left:12.00px;top:27.50px;width:14.30px;height:1.30px;background:rgba(200,200,200,.32);"></div><div class="a" style="left:27.50px;top:27.50px;width:11.94px;height:1.30px;background:rgba(200,200,200,.32);"></div><div class="a" style="left:40.63px;top:27.50px;width:13.51px;height:1.30px;background:rgba(200,200,200,.32);"></div><div class="a" style="left:55.35px;top:27.50px;width:5.88px;height:1.30px;background:rgba(200,200,200,.32);"></div><div class="a" style="left:62.43px;top:27.50px;width:11.10px;height:1.30px;background:rgba(200,200,200,.32);"></div><div class="a" style="left:74.73px;top:27.50px;width:17.27px;height:1.30px;background:rgba(200,200,200,.32);"></div><div class="a" style="left:93.20px;top:27.50px;width:17.45px;height:1.30px;background:rgba(200,200,200,.32);"></div><div class="a" style="left:111.85px;top:27.50px;width:10.44px;height:1.30px;background:rgba(200,200,200,.32);"></div><div class="a" style="left:123.49px;top:27.50px;width:11.62px;height:1.30px;background:rgba(200,200,200,.32);"></div><div class="a" style="left:136.31px;top:27.50px;width:6.68px;height:1.30px;background:rgba(200,200,200,.32);"></div><div class="a" style="left:144.19px;top:27.50px;width:5.30px;height:1.30px;background:rgba(200,200,200,.32);"></div><div class="a" style="left:150.69px;top:27.50px;width:9.66px;height:1.30px;background:rgba(200,200,200,.32);"></div><div class="a" style="left:161.55px;top:27.50px;width:4.21px;height:1.30px;background:rgba(200,200,200,.32);"></div><div class="a" style="left:166.97px;top:27.50px;width:6.98px;height:1.30px;background:rgba(200,200,200,.32);"></div><div class="a" style="left:175.15px;top:27.50px;width:3.57px;height:1.30px;background:rgba(200,200,200,.32);"></div><div class="a" style="left:12.00px;top:30.00px;width:16.85px;height:1.30px;background:rgba(200,200,200,.32);"></div><div class="a" style="left:30.05px;top:30.00px;width:6.35px;height:1.30px;background:rgba(200,200,200,.32);"></div><div class="a" style="left:37.60px;top:30.00px;width:8.78px;height:1.30px;background:rgba(200,200,200,.32);"></div><div class="a" style="left:47.58px;top:30.00px;width:13.53px;height:1.30px;background:rgba(200,200,200,.32);"></div><div class="a" style="left:62.30px;top:30.00px;width:5.72px;height:1.30px;background:rgba(200,200,200,.32);"></div><div class="a" style="left:69.22px;top:30.00px;width:14.10px;height:1.30px;background:rgba(200,200,200,.32);"></div><div class="a" style="left:84.53px;top:30.00px;width:5.40px;height:1.30px;background:rgba(200,200,200,.32);"></div><div class="a" style="left:91.12px;top:30.00px;width:15.24px;height:1.30px;background:rgba(200,200,200,.32);"></div><div class="a" style="left:107.56px;top:30.00px;width:7.56px;height:1.30px;background:rgba(200,200,200,.32);"></div><div class="a" style="left:116.33px;top:30.00px;width:4.30px;height:1.30px;background:rgba(200,200,200,.32);"></div><div class="a" style="left:121.83px;top:30.00px;width:10.16px;height:1.30px;background:rgba(200,200,200,.32);"></div><div class="a" style="left:133.18px;top:30.00px;width:10.83px;height:1.30px;background:rgba(200,200,200,.32);"></div><div class="a" style="left:145.22px;top:30.00px;width:6.59px;height:1.30px;background:rgba(200,200,200,.32);"></div><div class="a" style="left:153.01px;top:30.00px;width:8.06px;height:1.30px;background:rgba(200,200,200,.32);"></div><div class="a" style="left:162.27px;top:30.00px;width:9.33px;height:1.30px;background:rgba(200,200,200,.32);"></div><div class="a" style="left:172.80px;top:30.00px;width:6.81px;height:1.30px;background:rgba(200,200,200,.32);"></div><div class="a" style="left:12.00px;top:32.50px;width:4.35px;height:1.30px;background:rgba(200,200,200,.32);"></div><div class="a" style="left:17.55px;top:32.50px;width:10.82px;height:1.30px;background:rgba(200,200,200,.32);"></div><div class="a" style="left:29.57px;top:32.50px;width:4.44px;height:1.30px;background:rgba(200,200,200,.32);"></div><div class="a" style="left:35.21px;top:32.50px;width:5.04px;height:1.30px;background:rgba(200,200,200,.32);"></div><div class="a" style="left:41.45px;top:32.50px;width:13.03px;height:1.30px;background:rgba(200,200,200,.32);"></div><div class="a" style="left:55.68px;top:32.50px;width:15.80px;height:1.30px;background:rgba(200,200,200,.32);"></div><div class="a" style="left:72.68px;top:32.50px;width:13.70px;height:1.30px;background:rgba(200,200,200,.32);"></div><div class="a" style="left:87.58px;top:32.50px;width:7.21px;height:1.30px;background:rgba(200,200,200,.32);"></div><div class="a" style="left:95.99px;top:32.50px;width:11.24px;height:1.30px;background:rgba(200,200,200,.32);"></div><div class="a" style="left:108.43px;top:32.50px;width:8.36px;height:1.30px;background:rgba(200,200,200,.32);"></div><div class="a" style="left:117.99px;top:32.50px;width:6.96px;height:1.30px;background:rgba(200,200,200,.32);"></div><div class="a" style="left:126.15px;top:32.50px;width:14.18px;height:1.30px;background:rgba(200,200,200,.32);"></div><div class="a" style="left:141.53px;top:32.50px;width:9.43px;height:1.30px;background:rgba(200,200,200,.32);"></div><div class="a" style="left:152.16px;top:32.50px;width:8.70px;height:1.30px;background:rgba(200,200,200,.32);"></div><div class="a" style="left:162.05px;top:32.50px;width:7.17px;height:1.30px;background:rgba(200,200,200,.32);"></div><div class="a" style="left:170.43px;top:32.50px;width:9.42px;height:1.30px;background:rgba(200,200,200,.32);"></div></div><div class="a" style="left:0;top:0;width:100%;height:100%;opacity:.75"><div class="a" style="left:12.00px;top:36.00px;width:11.00px;height:1.30px;background:rgba(200,200,200,.32);"></div><div class="a" style="left:24.20px;top:36.00px;width:17.89px;height:1.30px;background:rgba(200,200,200,.32);"></div><div class="a" style="left:43.29px;top:36.00px;width:16.21px;height:1.30px;background:rgba(200,200,200,.32);"></div><div class="a" style="left:60.70px;top:36.00px;width:12.86px;height:1.30px;background:rgba(200,200,200,.32);"></div><div class="a" style="left:74.77px;top:36.00px;width:9.08px;height:1.30px;background:rgba(200,200,200,.32);"></div><div class="a" style="left:85.05px;top:36.00px;width:16.22px;height:1.30px;background:rgba(200,200,200,.32);"></div><div class="a" style="left:102.47px;top:36.00px;width:13.54px;height:1.30px;background:rgba(200,200,200,.32);"></div><div class="a" style="left:117.21px;top:36.00px;width:14.35px;height:1.30px;background:rgba(200,200,200,.32);"></div><div class="a" style="left:132.76px;top:36.00px;width:12.89px;height:1.30px;background:rgba(200,200,200,.32);"></div><div class="a" style="left:146.85px;top:36.00px;width:8.68px;height:1.30px;background:rgba(200,200,200,.32);"></div><div class="a" style="left:156.73px;top:36.00px;width:13.40px;height:1.30px;background:rgba(200,200,200,.32);"></div><div class="a" style="left:171.34px;top:36.00px;width:6.81px;height:1.30px;background:rgba(200,200,200,.32);"></div><div class="a" style="left:12.00px;top:38.50px;width:6.11px;height:1.30px;background:rgba(200,200,200,.32);"></div><div class="a" style="left:19.31px;top:38.50px;width:9.67px;height:1.30px;background:rgba(200,200,200,.32);"></div><div class="a" style="left:30.18px;top:38.50px;width:17.01px;height:1.30px;background:rgba(200,200,200,.32);"></div><div class="a" style="left:48.39px;top:38.50px;width:6.01px;height:1.30px;background:rgba(200,200,200,.32);"></div><div class="a" style="left:55.61px;top:38.50px;width:7.53px;height:1.30px;background:rgba(200,200,200,.32);"></div><div class="a" style="left:64.34px;top:38.50px;width:13.22px;height:1.30px;background:rgba(200,200,200,.32);"></div><div class="a" style="left:78.76px;top:38.50px;width:5.03px;height:1.30px;background:rgba(200,200,200,.32);"></div><div class="a" style="left:84.99px;top:38.50px;width:12.19px;height:1.30px;background:rgba(200,200,200,.32);"></div><div class="a" style="left:98.38px;top:38.50px;width:17.82px;height:1.30px;background:rgba(200,200,200,.32);"></div><div class="a" style="left:117.40px;top:38.50px;width:14.10px;height:1.30px;background:rgba(200,200,200,.32);"></div><div class="a" style="left:132.70px;top:38.50px;width:15.74px;height:1.30px;background:rgba(200,200,200,.32);"></div><div class="a" style="left:149.64px;top:38.50px;width:7.86px;height:1.30px;background:rgba(200,200,200,.32);"></div><div class="a" style="left:158.70px;top:38.50px;width:14.62px;height:1.30px;background:rgba(200,200,200,.32);"></div><div class="a" style="left:174.52px;top:38.50px;width:4.91px;height:1.30px;background:rgba(200,200,200,.32);"></div></div><div class="a" style="left:0;top:0;width:100%;height:100%;opacity:.75"><div class="a" style="left:12.00px;top:43.50px;width:16.10px;height:1.30px;background:rgba(200,200,200,.32);"></div><div class="a" style="left:29.30px;top:43.50px;width:6.75px;height:1.30px;background:rgba(200,200,200,.32);"></div><div class="a" style="left:37.25px;top:43.50px;width:17.48px;height:1.30px;background:rgba(200,200,200,.32);"></div><div class="a" style="left:55.93px;top:43.50px;width:5.11px;height:1.30px;background:rgba(200,200,200,.32);"></div><div class="a" style="left:62.25px;top:43.50px;width:16.26px;height:1.30px;background:rgba(200,200,200,.32);"></div><div class="a" style="left:79.70px;top:43.50px;width:4.07px;height:1.30px;background:rgba(200,200,200,.32);"></div><div class="a" style="left:84.97px;top:43.50px;width:12.96px;height:1.30px;background:rgba(200,200,200,.32);"></div><div class="a" style="left:99.13px;top:43.50px;width:6.97px;height:1.30px;background:rgba(200,200,200,.32);"></div><div class="a" style="left:107.30px;top:43.50px;width:13.09px;height:1.30px;background:rgba(200,200,200,.32);"></div><div class="a" style="left:121.59px;top:43.50px;width:13.51px;height:1.30px;background:rgba(200,200,200,.32);"></div><div class="a" style="left:136.29px;top:43.50px;width:16.09px;height:1.30px;background:rgba(200,200,200,.32);"></div><div class="a" style="left:153.58px;top:43.50px;width:5.22px;height:1.30px;background:rgba(200,200,200,.32);"></div><div class="a" style="left:160.00px;top:43.50px;width:14.86px;height:1.30px;background:rgba(200,200,200,.32);"></div></div><div class="a" style="left:0;top:0;width:100%;height:100%;opacity:.75"><div class="a" style="left:12.00px;top:48.50px;width:4.36px;height:1.30px;background:rgba(200,200,200,.32);"></div><div class="a" style="left:17.56px;top:48.50px;width:4.78px;height:1.30px;background:rgba(200,200,200,.32);"></div><div class="a" style="left:23.54px;top:48.50px;width:14.14px;height:1.30px;background:rgba(200,200,200,.32);"></div><div class="a" style="left:38.88px;top:48.50px;width:4.26px;height:1.30px;background:rgba(200,200,200,.32);"></div><div class="a" style="left:44.34px;top:48.50px;width:9.01px;height:1.30px;background:rgba(200,200,200,.32);"></div><div class="a" style="left:54.55px;top:48.50px;width:11.54px;height:1.30px;background:rgba(200,200,200,.32);"></div><div class="a" style="left:67.29px;top:48.50px;width:11.77px;height:1.30px;background:rgba(200,200,200,.32);"></div><div class="a" style="left:80.26px;top:48.50px;width:12.42px;height:1.30px;background:rgba(200,200,200,.32);"></div><div class="a" style="left:93.89px;top:48.50px;width:15.39px;height:1.30px;background:rgba(200,200,200,.32);"></div><div class="a" style="left:110.47px;top:48.50px;width:4.44px;height:1.30px;background:rgba(200,200,200,.32);"></div><div class="a" style="left:116.12px;top:48.50px;width:13.12px;height:1.30px;background:rgba(200,200,200,.32);"></div><div class="a" style="left:130.44px;top:48.50px;width:6.26px;height:1.30px;background:rgba(200,200,200,.32);"></div></div><div class="a" style="left:12.00px;top:55.00px;width:20.00px;height:1.40px;background:rgba(230,230,230,.5);"></div><div class="a" style="left:14.00px;top:59.50px;width:25.00px;height:1.20px;background:rgba(220,220,220,.45);"></div><div class="a" style="left:40.00px;top:59.50px;width:45.00px;height:1.20px;background:rgba(90,110,200,.45);"></div><div class="a" style="left:10.00px;top:63.00px;width:172.00px;height:33.00px;background:#151515;"></div><div class="a" style="left:0;top:0;width:100%;height:100%;opacity:.75"><div class="a" style="left:20.00px;top:66.50px;width:7.54px;height:1.20px;background:rgba(200,200,200,.26);"></div><div class="a" style="left:28.74px;top:66.50px;width:5.40px;height:1.20px;background:rgba(200,200,200,.26);"></div><div class="a" style="left:35.34px;top:66.50px;width:17.68px;height:1.20px;background:rgba(180,180,180,.3);"></div><div class="a" style="left:54.21px;top:66.50px;width:7.19px;height:1.20px;background:rgba(200,200,200,.26);"></div><div class="a" style="left:62.61px;top:66.50px;width:5.26px;height:1.20px;background:rgba(200,200,200,.26);"></div><div class="a" style="left:69.07px;top:66.50px;width:5.71px;height:1.20px;background:rgba(200,200,200,.26);"></div><div class="a" style="left:16.00px;top:70.90px;width:14.33px;height:1.20px;background:rgba(170,195,170,.28);"></div><div class="a" style="left:31.53px;top:70.90px;width:16.19px;height:1.20px;background:rgba(170,195,170,.28);"></div><div class="a" style="left:48.92px;top:70.90px;width:14.91px;height:1.20px;background:rgba(170,195,170,.28);"></div><div class="a" style="left:65.03px;top:70.90px;width:6.56px;height:1.20px;background:rgba(170,195,170,.28);"></div><div class="a" style="left:16.00px;top:73.10px;width:16.61px;height:1.20px;background:rgba(200,200,200,.26);"></div><div class="a" style="left:33.81px;top:73.10px;width:8.53px;height:1.20px;background:rgba(170,195,170,.28);"></div><div class="a" style="left:16.00px;top:77.50px;width:13.44px;height:1.20px;background:rgba(200,200,200,.26);"></div><div class="a" style="left:30.64px;top:77.50px;width:11.90px;height:1.20px;background:rgba(185,200,215,.28);"></div><div class="a" style="left:43.74px;top:77.50px;width:16.87px;height:1.20px;background:rgba(185,200,215,.28);"></div><div class="a" style="left:61.81px;top:77.50px;width:4.46px;height:1.20px;background:rgba(170,195,170,.28);"></div><div class="a" style="left:16.00px;top:81.90px;width:8.56px;height:1.20px;background:rgba(200,200,200,.26);"></div><div class="a" style="left:25.76px;top:81.90px;width:7.90px;height:1.20px;background:rgba(200,200,200,.26);"></div><div class="a" style="left:34.87px;top:81.90px;width:8.39px;height:1.20px;background:rgba(200,200,200,.26);"></div><div class="a" style="left:16.00px;top:84.10px;width:17.36px;height:1.20px;background:rgba(170,195,170,.28);"></div><div class="a" style="left:34.56px;top:84.10px;width:7.96px;height:1.20px;background:rgba(185,200,215,.28);"></div><div class="a" style="left:43.72px;top:84.10px;width:16.21px;height:1.20px;background:rgba(170,195,170,.28);"></div><div class="a" style="left:61.13px;top:84.10px;width:7.40px;height:1.20px;background:rgba(170,195,170,.28);"></div><div class="a" style="left:20.00px;top:86.30px;width:15.92px;height:1.20px;background:rgba(200,200,200,.26);"></div><div class="a" style="left:37.12px;top:86.30px;width:2.97px;height:1.20px;background:rgba(200,200,200,.26);"></div><div class="a" style="left:16.00px;top:88.50px;width:13.59px;height:1.20px;background:rgba(170,195,170,.28);"></div><div class="a" style="left:30.79px;top:88.50px;width:6.13px;height:1.20px;background:rgba(170,195,170,.28);"></div><div class="a" style="left:38.12px;top:88.50px;width:5.87px;height:1.20px;background:rgba(210,200,180,.26);"></div><div class="a" style="left:45.19px;top:88.50px;width:14.30px;height:1.20px;background:rgba(200,200,200,.26);"></div><div class="a" style="left:60.69px;top:88.50px;width:7.87px;height:1.20px;background:rgba(185,200,215,.28);"></div><div class="a" style="left:20.00px;top:90.70px;width:17.72px;height:1.20px;background:rgba(200,200,200,.26);"></div><div class="a" style="left:38.92px;top:90.70px;width:6.82px;height:1.20px;background:rgba(170,195,170,.28);"></div><div class="a" style="left:46.93px;top:90.70px;width:4.21px;height:1.20px;background:rgba(210,200,180,.26);"></div><div class="a" style="left:52.35px;top:90.70px;width:7.24px;height:1.20px;background:rgba(170,195,170,.28);"></div><div class="a" style="left:60.79px;top:90.70px;width:5.47px;height:1.20px;background:rgba(170,195,170,.28);"></div></div><div class="a" style="left:1.00px;top:98.40px;width:180.50px;height:2.20px;background:#1f7fc8;"></div><div class="a" style="left:1.00px;top:100.60px;width:180.50px;height:1.00px;background:#000;"></div></div>
<div style="position:absolute;left:355.70px;top:535.06px;font-size:6.78px;line-height:6.78px;color:#363636;font-weight:400;white-space:nowrap;-webkit-text-stroke:0.12px #363636">Alexander Prader-CAI NatLPr-A2</div>
<div style="position:absolute;left:355.60px;top:548.16px;font-size:6.55px;line-height:6.55px;color:#585858;font-weight:400;white-space:nowrap;">CAI_NatLPr-Assignment_2 - Sommer 2025</div>
<svg class="a" style="left:356.40px;top:561.30px" width="7" height="6" viewBox="0 0 7 6"><path d="M1 5.2 L5.5 1.2" stroke="#7f9a80" stroke-width="1.7" stroke-linecap="round"/><path d="M1.2 4.6 L2.6 3.4" stroke="#4a7a3a" stroke-width="1"/><rect x="4.4" y="0.6" width="1.8" height="1.6" fill="#9ab0c8" transform="rotate(-40 5.3 1.4)"/></svg>
<div class="a" style="left:355.60px;top:569.60px;width:22px;height:6px;overflow:hidden"><div style="position:absolute;left:0.90px;top:-0.43px;font-size:6.3px;line-height:6.3px;color:#6f74a8;font-weight:400;white-space:nowrap;">Avatar</div></div>
<div style="position:absolute;left:379.00px;top:566.30px;font-size:6.5px;line-height:6.5px;color:#4a4a4a;font-weight:400;white-space:nowrap;">Gokul Srinivasagan</div>
<div class="th bl" style="left:546.80px;top:418.30px"><div class="a" style="left:0.00px;top:0.00px;width:182.50px;height:102.60px;background:#000;"></div><div class="a" style="left:2.00px;top:6.00px;width:178.50px;height:89.00px;background:#171717;"></div><div style="position:absolute;left:4.00px;top:9.12px;font-size:3.4px;line-height:3.4px;color:rgba(230,230,230,.75);font-weight:400;white-space:nowrap;">Assignment 2 (100 points)</div><div class="a" style="left:66.00px;top:12.00px;width:2.00px;height:2.00px;background:rgba(255,255,255,.8);"></div><div class="a" style="left:0;top:0;width:100%;height:100%;opacity:.75"><div class="a" style="left:4.00px;top:15.00px;width:11.36px;height:1.30px;background:rgba(220,220,220,.4);"></div><div class="a" style="left:16.56px;top:15.00px;width:3.27px;height:1.30px;background:rgba(220,220,220,.4);"></div><div class="a" style="left:4.00px;top:16.60px;width:8.89px;height:1.30px;background:rgba(220,220,220,.4);"></div><div class="a" style="left:14.09px;top:16.60px;width:5.27px;height:1.30px;background:rgba(220,220,220,.4);"></div><div class="a" style="left:4.00px;top:18.20px;width:6.75px;height:1.30px;background:rgba(220,220,220,.4);"></div><div class="a" style="left:11.95px;top:18.20px;width:5.13px;height:1.30px;background:rgba(220,220,220,.4);"></div></div><div class="a" style="left:4.00px;top:19.50px;width:12.00px;height:1.20px;background:rgba(230,230,230,.5);"></div><div class="a" style="left:4.00px;top:24.00px;width:30.00px;height:1.00px;background:rgba(200,200,200,.35);"></div><div class="a" style="left:0;top:0;width:100%;height:100%;opacity:.75"><div class="a" style="left:4.00px;top:28.00px;width:13.66px;height:1.30px;background:rgba(190,190,190,.3);"></div><div class="a" style="left:18.86px;top:28.00px;width:16.24px;height:1.30px;background:rgba(190,190,190,.3);"></div><div class="a" style="left:36.30px;top:28.00px;width:9.59px;height:1.30px;background:rgba(190,190,190,.3);"></div><div class="a" style="left:47.09px;top:28.00px;width:9.36px;height:1.30px;background:rgba(190,190,190,.3);"></div><div class="a" style="left:57.65px;top:28.00px;width:16.34px;height:1.30px;background:rgba(190,190,190,.3);"></div><div class="a" style="left:75.20px;top:28.00px;width:16.57px;height:1.30px;background:rgba(190,190,190,.3);"></div><div class="a" style="left:92.97px;top:28.00px;width:7.35px;height:1.30px;background:rgba(190,190,190,.3);"></div><div class="a" style="left:101.52px;top:28.00px;width:17.84px;height:1.30px;background:rgba(190,190,190,.3);"></div><div class="a" style="left:120.56px;top:28.00px;width:14.22px;height:1.30px;background:rgba(190,190,190,.3);"></div><div class="a" style="left:135.98px;top:28.00px;width:15.56px;height:1.30px;background:rgba(190,190,190,.3);"></div><div class="a" style="left:152.74px;top:28.00px;width:5.22px;height:1.30px;background:rgba(190,190,190,.3);"></div><div class="a" style="left:159.15px;top:28.00px;width:4.47px;height:1.30px;background:rgba(190,190,190,.3);"></div><div class="a" style="left:164.82px;top:28.00px;width:9.68px;height:1.30px;background:rgba(190,190,190,.3);"></div><div class="a" style="left:175.70px;top:28.00px;width:7.38px;height:1.30px;background:rgba(190,190,190,.3);"></div><div class="a" style="left:4.00px;top:30.00px;width:10.63px;height:1.30px;background:rgba(190,190,190,.3);"></div><div class="a" style="left:15.83px;top:30.00px;width:10.59px;height:1.30px;background:rgba(190,190,190,.3);"></div><div class="a" style="left:27.62px;top:30.00px;width:7.28px;height:1.30px;background:rgba(190,190,190,.3);"></div><div class="a" style="left:36.10px;top:30.00px;width:14.41px;height:1.30px;background:rgba(190,190,190,.3);"></div><div class="a" style="left:51.71px;top:30.00px;width:9.51px;height:1.30px;background:rgba(190,190,190,.3);"></div><div class="a" style="left:62.41px;top:30.00px;width:12.58px;height:1.30px;background:rgba(190,190,190,.3);"></div><div class="a" style="left:76.19px;top:30.00px;width:8.51px;height:1.30px;background:rgba(190,190,190,.3);"></div><div class="a" style="left:85.90px;top:30.00px;width:11.60px;height:1.30px;background:rgba(190,190,190,.3);"></div><div class="a" style="left:98.71px;top:30.00px;width:7.67px;height:1.30px;background:rgba(190,190,190,.3);"></div><div class="a" style="left:107.58px;top:30.00px;width:16.01px;height:1.30px;background:rgba(190,190,190,.3);"></div><div class="a" style="left:124.79px;top:30.00px;width:11.99px;height:1.30px;background:rgba(190,190,190,.3);"></div><div class="a" style="left:137.98px;top:30.00px;width:4.92px;height:1.30px;background:rgba(190,190,190,.3);"></div><div class="a" style="left:144.10px;top:30.00px;width:9.10px;height:1.30px;background:rgba(190,190,190,.3);"></div><div class="a" style="left:154.40px;top:30.00px;width:15.39px;height:1.30px;background:rgba(190,190,190,.3);"></div><div class="a" style="left:170.98px;top:30.00px;width:6.13px;height:1.30px;background:rgba(190,190,190,.3);"></div><div class="a" style="left:178.32px;top:30.00px;width:4.59px;height:1.30px;background:rgba(190,190,190,.3);"></div></div><div class="a" style="left:0;top:0;width:100%;height:100%;opacity:.75"><div class="a" style="left:4.00px;top:32.50px;width:8.51px;height:1.30px;background:rgba(190,190,190,.3);"></div><div class="a" style="left:13.71px;top:32.50px;width:5.72px;height:1.30px;background:rgba(190,190,190,.3);"></div><div class="a" style="left:20.63px;top:32.50px;width:9.25px;height:1.30px;background:rgba(190,190,190,.3);"></div><div class="a" style="left:31.08px;top:32.50px;width:10.34px;height:1.30px;background:rgba(190,190,190,.3);"></div><div class="a" style="left:42.62px;top:32.50px;width:8.07px;height:1.30px;background:rgba(190,190,190,.3);"></div><div class="a" style="left:51.89px;top:32.50px;width:5.57px;height:1.30px;background:rgba(190,190,190,.3);"></div><div class="a" style="left:58.65px;top:32.50px;width:14.23px;height:1.30px;background:rgba(190,190,190,.3);"></div><div class="a" style="left:74.08px;top:32.50px;width:4.08px;height:1.30px;background:rgba(190,190,190,.3);"></div><div class="a" style="left:79.37px;top:32.50px;width:11.29px;height:1.30px;background:rgba(190,190,190,.3);"></div><div class="a" style="left:91.86px;top:32.50px;width:11.33px;height:1.30px;background:rgba(190,190,190,.3);"></div><div class="a" style="left:104.38px;top:32.50px;width:7.54px;height:1.30px;background:rgba(190,190,190,.3);"></div><div class="a" style="left:113.12px;top:32.50px;width:4.01px;height:1.30px;background:rgba(190,190,190,.3);"></div><div class="a" style="left:118.33px;top:32.50px;width:8.29px;height:1.30px;background:rgba(190,190,190,.3);"></div><div class="a" style="left:127.83px;top:32.50px;width:16.84px;height:1.30px;background:rgba(190,190,190,.3);"></div><div class="a" style="left:145.86px;top:32.50px;width:15.68px;height:1.30px;background:rgba(190,190,190,.3);"></div><div class="a" style="left:162.74px;top:32.50px;width:16.02px;height:1.30px;background:rgba(190,190,190,.3);"></div><div class="a" style="left:179.97px;top:32.50px;width:3.34px;height:1.30px;background:rgba(190,190,190,.3);"></div><div class="a" style="left:4.00px;top:34.30px;width:9.14px;height:1.30px;background:rgba(190,190,190,.3);"></div><div class="a" style="left:14.34px;top:34.30px;width:8.13px;height:1.30px;background:rgba(190,190,190,.3);"></div><div class="a" style="left:23.67px;top:34.30px;width:13.07px;height:1.30px;background:rgba(190,190,190,.3);"></div><div class="a" style="left:37.95px;top:34.30px;width:8.93px;height:1.30px;background:rgba(190,190,190,.3);"></div><div class="a" style="left:48.08px;top:34.30px;width:16.95px;height:1.30px;background:rgba(190,190,190,.3);"></div><div class="a" style="left:66.23px;top:34.30px;width:4.89px;height:1.30px;background:rgba(190,190,190,.3);"></div><div class="a" style="left:72.32px;top:34.30px;width:5.12px;height:1.30px;background:rgba(190,190,190,.3);"></div><div class="a" style="left:78.64px;top:34.30px;width:9.51px;height:1.30px;background:rgba(190,190,190,.3);"></div><div class="a" style="left:89.34px;top:34.30px;width:17.10px;height:1.30px;background:rgba(190,190,190,.3);"></div><div class="a" style="left:107.64px;top:34.30px;width:15.08px;height:1.30px;background:rgba(190,190,190,.3);"></div><div class="a" style="left:123.92px;top:34.30px;width:17.09px;height:1.30px;background:rgba(190,190,190,.3);"></div><div class="a" style="left:142.21px;top:34.30px;width:10.11px;height:1.30px;background:rgba(190,190,190,.3);"></div><div class="a" style="left:153.52px;top:34.30px;width:6.47px;height:1.30px;background:rgba(190,190,190,.3);"></div><div class="a" style="left:161.19px;top:34.30px;width:10.88px;height:1.30px;background:rgba(190,190,190,.3);"></div><div class="a" style="left:173.27px;top:34.30px;width:10.17px;height:1.30px;background:rgba(190,190,190,.3);"></div></div><div class="a" style="left:0;top:0;width:100%;height:100%;opacity:.75"><div class="a" style="left:4.00px;top:37.00px;width:16.96px;height:1.30px;background:rgba(190,190,190,.3);"></div><div class="a" style="left:22.16px;top:37.00px;width:14.77px;height:1.30px;background:rgba(190,190,190,.3);"></div><div class="a" style="left:38.13px;top:37.00px;width:5.65px;height:1.30px;background:rgba(190,190,190,.3);"></div><div class="a" style="left:44.98px;top:37.00px;width:11.99px;height:1.30px;background:rgba(190,190,190,.3);"></div><div class="a" style="left:58.18px;top:37.00px;width:5.24px;height:1.30px;background:rgba(190,190,190,.3);"></div><div class="a" style="left:64.61px;top:37.00px;width:11.90px;height:1.30px;background:rgba(190,190,190,.3);"></div><div class="a" style="left:77.72px;top:37.00px;width:13.95px;height:1.30px;background:rgba(190,190,190,.3);"></div><div class="a" style="left:4.00px;top:39.50px;width:15.81px;height:1.30px;background:rgba(190,190,190,.3);"></div><div class="a" style="left:21.01px;top:39.50px;width:15.44px;height:1.30px;background:rgba(190,190,190,.3);"></div><div class="a" style="left:37.65px;top:39.50px;width:6.04px;height:1.30px;background:rgba(190,190,190,.3);"></div><div class="a" style="left:44.88px;top:39.50px;width:6.61px;height:1.30px;background:rgba(190,190,190,.3);"></div><div class="a" style="left:52.69px;top:39.50px;width:11.28px;height:1.30px;background:rgba(190,190,190,.3);"></div><div class="a" style="left:65.17px;top:39.50px;width:7.57px;height:1.30px;background:rgba(190,190,190,.3);"></div><div class="a" style="left:73.94px;top:39.50px;width:11.78px;height:1.30px;background:rgba(190,190,190,.3);"></div><div class="a" style="left:86.92px;top:39.50px;width:9.88px;height:1.30px;background:rgba(190,190,190,.3);"></div></div><div class="a" style="left:4.00px;top:43.00px;width:12.00px;height:1.20px;background:rgba(220,220,220,.45);"></div><div class="a" style="left:6.00px;top:45.50px;width:45.00px;height:1.00px;background:rgba(200,200,200,.3);"></div><div class="a" style="left:3.00px;top:49.00px;width:177.00px;height:10.00px;background:#131313;"></div><div class="a" style="left:0;top:0;width:100%;height:100%;opacity:.75"><div class="a" style="left:7.00px;top:51.00px;width:15.99px;height:0.80px;background:rgba(200,200,200,.26);"></div><div class="a" style="left:7.00px;top:52.70px;width:9.23px;height:0.80px;background:rgba(180,180,180,.3);"></div><div class="a" style="left:17.43px;top:52.70px;width:2.13px;height:0.80px;background:rgba(180,180,180,.3);"></div><div class="a" style="left:7.00px;top:54.40px;width:10.39px;height:0.80px;background:rgba(200,200,200,.26);"></div><div class="a" style="left:18.59px;top:54.40px;width:13.29px;height:0.80px;background:rgba(200,200,200,.26);"></div><div class="a" style="left:7.00px;top:56.10px;width:9.49px;height:0.80px;background:rgba(200,200,200,.26);"></div></div><div class="a" style="left:3.00px;top:60.00px;width:177.00px;height:1.00px;background:rgba(150,150,150,.25);"></div><div class="a" style="left:3.00px;top:61.00px;width:177.00px;height:30.00px;background:#141414;"></div><div class="a" style="left:0;top:0;width:100%;height:100%;opacity:.75"><div class="a" style="left:8.00px;top:62.50px;width:14.42px;height:1.10px;background:rgba(200,200,200,.26);"></div><div class="a" style="left:10.00px;top:64.70px;width:4.81px;height:1.10px;background:rgba(200,200,200,.26);"></div><div class="a" style="left:16.01px;top:64.70px;width:12.95px;height:1.10px;background:rgba(190,190,190,.28);"></div><div class="a" style="left:30.16px;top:64.70px;width:2.08px;height:1.10px;background:rgba(200,200,200,.26);"></div><div class="a" style="left:10.00px;top:69.10px;width:7.09px;height:1.10px;background:rgba(185,200,215,.28);"></div><div class="a" style="left:18.29px;top:69.10px;width:14.48px;height:1.10px;background:rgba(185,200,215,.28);"></div><div class="a" style="left:33.97px;top:69.10px;width:9.65px;height:1.10px;background:rgba(180,180,180,.3);"></div><div class="a" style="left:6.00px;top:71.30px;width:14.98px;height:1.10px;background:rgba(200,200,200,.26);"></div><div class="a" style="left:22.18px;top:71.30px;width:6.72px;height:1.10px;background:rgba(200,200,200,.26);"></div><div class="a" style="left:8.00px;top:73.50px;width:16.15px;height:1.10px;background:rgba(200,200,200,.26);"></div><div class="a" style="left:25.35px;top:73.50px;width:5.87px;height:1.10px;background:rgba(185,200,215,.28);"></div><div class="a" style="left:32.42px;top:73.50px;width:5.53px;height:1.10px;background:rgba(210,200,180,.26);"></div><div class="a" style="left:10.00px;top:75.70px;width:8.33px;height:1.10px;background:rgba(210,200,180,.26);"></div><div class="a" style="left:19.53px;top:75.70px;width:15.78px;height:1.10px;background:rgba(180,180,180,.3);"></div><div class="a" style="left:8.00px;top:77.90px;width:9.32px;height:1.10px;background:rgba(170,195,170,.28);"></div><div class="a" style="left:18.52px;top:77.90px;width:7.13px;height:1.10px;background:rgba(170,195,170,.28);"></div><div class="a" style="left:26.85px;top:77.90px;width:5.31px;height:1.10px;background:rgba(170,195,170,.28);"></div><div class="a" style="left:33.36px;top:77.90px;width:13.82px;height:1.10px;background:rgba(170,195,170,.28);"></div><div class="a" style="left:6.00px;top:80.10px;width:5.71px;height:1.10px;background:rgba(170,195,170,.28);"></div><div class="a" style="left:12.91px;top:80.10px;width:2.33px;height:1.10px;background:rgba(170,195,170,.28);"></div><div class="a" style="left:8.00px;top:82.30px;width:14.51px;height:1.10px;background:rgba(190,190,190,.28);"></div><div class="a" style="left:23.71px;top:82.30px;width:7.97px;height:1.10px;background:rgba(185,200,215,.28);"></div><div class="a" style="left:8.00px;top:84.50px;width:14.59px;height:1.10px;background:rgba(185,200,215,.28);"></div><div class="a" style="left:23.79px;top:84.50px;width:7.80px;height:1.10px;background:rgba(210,200,180,.26);"></div><div class="a" style="left:32.78px;top:84.50px;width:2.34px;height:1.10px;background:rgba(170,195,170,.28);"></div></div><div class="a" style="left:3.00px;top:91.00px;width:177.00px;height:2.50px;background:#1e1e1e;"></div><div class="a" style="left:4.00px;top:91.50px;width:12.00px;height:1.30px;background:rgba(220,220,220,.4);"></div></div>
<div style="position:absolute;left:548.40px;top:535.06px;font-size:6.78px;line-height:6.78px;color:#363636;font-weight:400;white-space:nowrap;-webkit-text-stroke:0.12px #363636">Ariana Gallapeni-CAI NatLPr-A2</div>
<div style="position:absolute;left:548.30px;top:548.16px;font-size:6.55px;line-height:6.55px;color:#585858;font-weight:400;white-space:nowrap;">CAI_NatLPr-Assignment_2 - Sommer 2025</div>
<svg class="a" style="left:549.10px;top:561.30px" width="7" height="6" viewBox="0 0 7 6"><path d="M1 5.2 L5.5 1.2" stroke="#7f9a80" stroke-width="1.7" stroke-linecap="round"/><path d="M1.2 4.6 L2.6 3.4" stroke="#4a7a3a" stroke-width="1"/><rect x="4.4" y="0.6" width="1.8" height="1.6" fill="#9ab0c8" transform="rotate(-40 5.3 1.4)"/></svg>
<div class="a" style="left:548.30px;top:569.60px;width:22px;height:6px;overflow:hidden"><div style="position:absolute;left:0.90px;top:-0.43px;font-size:6.3px;line-height:6.3px;color:#6f74a8;font-weight:400;white-space:nowrap;">Avatar</div></div>
<div style="position:absolute;left:571.70px;top:566.30px;font-size:6.5px;line-height:6.5px;color:#4a4a4a;font-weight:400;white-space:nowrap;">Gokul Srinivasagan</div>
<div class="th bl" style="left:739.50px;top:418.30px"><div class="a" style="left:0.00px;top:0.00px;width:182.50px;height:102.60px;background:#000;"></div><div class="a" style="left:1.00px;top:1.00px;width:180.50px;height:100.60px;background:#171717;"></div><div class="a" style="left:1.00px;top:1.00px;width:180.50px;height:3.50px;background:#141414;"></div><div class="a" style="left:0;top:0;width:100%;height:100%;opacity:.75"><div class="a" style="left:5.00px;top:2.50px;width:6.72px;height:1.30px;background:rgba(220,220,220,.35);"></div><div class="a" style="left:12.92px;top:2.50px;width:4.70px;height:1.30px;background:rgba(220,220,220,.35);"></div><div class="a" style="left:18.82px;top:2.50px;width:10.73px;height:1.30px;background:rgba(220,220,220,.35);"></div><div class="a" style="left:30.76px;top:2.50px;width:6.50px;height:1.30px;background:rgba(220,220,220,.35);"></div><div class="a" style="left:38.46px;top:2.50px;width:8.18px;height:1.30px;background:rgba(220,220,220,.35);"></div><div class="a" style="left:47.84px;top:2.50px;width:5.34px;height:1.30px;background:rgba(220,220,220,.35);"></div></div><div class="a" style="left:158.00px;top:2.50px;width:20.00px;height:2.00px;background:rgba(220,220,220,.35);"></div><div class="a" style="left:0;top:0;width:100%;height:100%;opacity:.75"><div class="a" style="left:8.00px;top:6.50px;width:4.50px;height:1.30px;background:rgba(220,220,220,.35);"></div><div class="a" style="left:13.70px;top:6.50px;width:9.78px;height:1.30px;background:rgba(220,220,220,.35);"></div><div class="a" style="left:24.68px;top:6.50px;width:9.81px;height:1.30px;background:rgba(220,220,220,.35);"></div></div><div class="a" style="left:22.00px;top:7.00px;width:12.00px;height:1.00px;background:rgba(220,120,120,.4);"></div><div class="a" style="left:0;top:0;width:100%;height:100%;opacity:.75"><div class="a" style="left:8.00px;top:9.50px;width:9.03px;height:1.30px;background:rgba(200,200,200,.28);"></div><div class="a" style="left:18.23px;top:9.50px;width:5.26px;height:1.30px;background:rgba(200,200,200,.28);"></div><div class="a" style="left:24.69px;top:9.50px;width:8.25px;height:1.30px;background:rgba(200,200,200,.28);"></div><div class="a" style="left:34.14px;top:9.50px;width:16.31px;height:1.30px;background:rgba(200,200,200,.28);"></div><div class="a" style="left:51.65px;top:9.50px;width:7.79px;height:1.30px;background:rgba(200,200,200,.28);"></div><div class="a" style="left:60.63px;top:9.50px;width:8.54px;height:1.30px;background:rgba(200,200,200,.28);"></div><div class="a" style="left:70.37px;top:9.50px;width:11.09px;height:1.30px;background:rgba(200,200,200,.28);"></div><div class="a" style="left:82.67px;top:9.50px;width:7.97px;height:1.30px;background:rgba(200,200,200,.28);"></div><div class="a" style="left:91.84px;top:9.50px;width:17.83px;height:1.30px;background:rgba(200,200,200,.28);"></div><div class="a" style="left:110.87px;top:9.50px;width:14.17px;height:1.30px;background:rgba(200,200,200,.28);"></div><div class="a" style="left:126.24px;top:9.50px;width:7.36px;height:1.30px;background:rgba(200,200,200,.28);"></div><div class="a" style="left:134.80px;top:9.50px;width:15.48px;height:1.30px;background:rgba(200,200,200,.28);"></div></div><div class="a" style="left:0;top:0;width:100%;height:100%;opacity:.75"><div class="a" style="left:8.00px;top:12.50px;width:5.22px;height:1.30px;background:rgba(200,200,200,.28);"></div><div class="a" style="left:14.42px;top:12.50px;width:17.97px;height:1.30px;background:rgba(200,200,200,.28);"></div><div class="a" style="left:33.59px;top:12.50px;width:12.74px;height:1.30px;background:rgba(200,200,200,.28);"></div><div class="a" style="left:47.53px;top:12.50px;width:5.18px;height:1.30px;background:rgba(200,200,200,.28);"></div></div><div class="a" style="left:1.00px;top:4.50px;width:5.00px;height:97.60px;background:#121212;"></div><div style="position:absolute;left:10.50px;top:17.08px;font-size:4.4px;line-height:4.4px;color:rgba(235,235,235,.85);font-weight:400;white-space:nowrap;">Assignment 2 (100 points)</div><div class="a" style="left:0;top:0;width:100%;height:100%;opacity:.75"><div class="a" style="left:10.50px;top:24.50px;width:11.55px;height:1.00px;background:rgba(230,230,230,.55);"></div><div class="a" style="left:10.50px;top:26.70px;width:5.45px;height:1.00px;background:rgba(230,230,230,.55);"></div><div class="a" style="left:10.50px;top:28.90px;width:7.01px;height:1.00px;background:rgba(230,230,230,.55);"></div><div class="a" style="left:10.50px;top:31.10px;width:5.97px;height:1.00px;background:rgba(230,230,230,.55);"></div></div><div class="a" style="left:55.00px;top:31.00px;width:2.00px;height:2.00px;background:rgba(255,255,255,.8);"></div><div style="position:absolute;left:10.50px;top:36.50px;font-size:2.6px;line-height:2.6px;color:rgba(220,220,220,.6);font-weight:400;white-space:nowrap;">SMS Spam Detection (100 points)</div><div class="a" style="left:0;top:0;width:100%;height:100%;opacity:.75"><div class="a" style="left:10.50px;top:43.50px;width:6.85px;height:1.30px;background:rgba(190,190,190,.32);"></div><div class="a" style="left:18.55px;top:43.50px;width:13.60px;height:1.30px;background:rgba(190,190,190,.32);"></div><div class="a" style="left:33.36px;top:43.50px;width:4.94px;height:1.30px;background:rgba(190,190,190,.32);"></div><div class="a" style="left:39.49px;top:43.50px;width:4.53px;height:1.30px;background:rgba(190,190,190,.32);"></div><div class="a" style="left:45.22px;top:43.50px;width:8.62px;height:1.30px;background:rgba(190,190,190,.32);"></div><div class="a" style="left:55.04px;top:43.50px;width:6.79px;height:1.30px;background:rgba(190,190,190,.32);"></div><div class="a" style="left:63.03px;top:43.50px;width:15.84px;height:1.30px;background:rgba(190,190,190,.32);"></div><div class="a" style="left:80.07px;top:43.50px;width:5.29px;height:1.30px;background:rgba(190,190,190,.32);"></div><div class="a" style="left:86.56px;top:43.50px;width:8.89px;height:1.30px;background:rgba(190,190,190,.32);"></div><div class="a" style="left:96.65px;top:43.50px;width:13.42px;height:1.30px;background:rgba(190,190,190,.32);"></div><div class="a" style="left:111.27px;top:43.50px;width:5.89px;height:1.30px;background:rgba(190,190,190,.32);"></div><div class="a" style="left:118.36px;top:43.50px;width:17.12px;height:1.30px;background:rgba(190,190,190,.32);"></div><div class="a" style="left:136.68px;top:43.50px;width:14.43px;height:1.30px;background:rgba(190,190,190,.32);"></div><div class="a" style="left:152.31px;top:43.50px;width:15.23px;height:1.30px;background:rgba(190,190,190,.32);"></div><div class="a" style="left:168.74px;top:43.50px;width:10.09px;height:1.30px;background:rgba(190,190,190,.32);"></div><div class="a" style="left:180.03px;top:43.50px;width:2.06px;height:1.30px;background:rgba(190,190,190,.32);"></div><div class="a" style="left:10.50px;top:45.60px;width:4.95px;height:1.30px;background:rgba(190,190,190,.32);"></div><div class="a" style="left:16.65px;top:45.60px;width:15.23px;height:1.30px;background:rgba(190,190,190,.32);"></div><div class="a" style="left:33.08px;top:45.60px;width:15.86px;height:1.30px;background:rgba(190,190,190,.32);"></div><div class="a" style="left:50.15px;top:45.60px;width:11.86px;height:1.30px;background:rgba(190,190,190,.32);"></div><div class="a" style="left:63.21px;top:45.60px;width:12.05px;height:1.30px;background:rgba(190,190,190,.32);"></div><div class="a" style="left:76.46px;top:45.60px;width:16.45px;height:1.30px;background:rgba(190,190,190,.32);"></div><div class="a" style="left:94.12px;top:45.60px;width:15.11px;height:1.30px;background:rgba(190,190,190,.32);"></div><div class="a" style="left:110.43px;top:45.60px;width:17.18px;height:1.30px;background:rgba(190,190,190,.32);"></div><div class="a" style="left:128.81px;top:45.60px;width:9.69px;height:1.30px;background:rgba(190,190,190,.32);"></div><div class="a" style="left:139.70px;top:45.60px;width:13.29px;height:1.30px;background:rgba(190,190,190,.32);"></div><div class="a" style="left:154.18px;top:45.60px;width:9.97px;height:1.30px;background:rgba(190,190,190,.32);"></div><div class="a" style="left:165.36px;top:45.60px;width:10.85px;height:1.30px;background:rgba(190,190,190,.32);"></div><div class="a" style="left:177.40px;top:45.60px;width:5.02px;height:1.30px;background:rgba(190,190,190,.32);"></div></div><div class="a" style="left:0;top:0;width:100%;height:100%;opacity:.75"><div class="a" style="left:10.50px;top:49.00px;width:8.70px;height:1.30px;background:rgba(190,190,190,.32);"></div><div class="a" style="left:20.40px;top:49.00px;width:9.51px;height:1.30px;background:rgba(190,190,190,.32);"></div><div class="a" style="left:31.11px;top:49.00px;width:4.46px;height:1.30px;background:rgba(190,190,190,.32);"></div><div class="a" style="left:36.77px;top:49.00px;width:6.62px;height:1.30px;background:rgba(190,190,190,.32);"></div><div class="a" style="left:44.59px;top:49.00px;width:9.70px;height:1.30px;background:rgba(190,190,190,.32);"></div><div class="a" style="left:55.49px;top:49.00px;width:7.38px;height:1.30px;background:rgba(190,190,190,.32);"></div><div class="a" style="left:64.08px;top:49.00px;width:9.26px;height:1.30px;background:rgba(190,190,190,.32);"></div><div class="a" style="left:74.54px;top:49.00px;width:9.46px;height:1.30px;background:rgba(190,190,190,.32);"></div><div class="a" style="left:85.19px;top:49.00px;width:9.07px;height:1.30px;background:rgba(190,190,190,.32);"></div><div class="a" style="left:95.46px;top:49.00px;width:8.32px;height:1.30px;background:rgba(190,190,190,.32);"></div><div class="a" style="left:104.98px;top:49.00px;width:15.99px;height:1.30px;background:rgba(190,190,190,.32);"></div><div class="a" style="left:122.18px;top:49.00px;width:9.47px;height:1.30px;background:rgba(190,190,190,.32);"></div><div class="a" style="left:132.85px;top:49.00px;width:5.45px;height:1.30px;background:rgba(190,190,190,.32);"></div><div class="a" style="left:139.50px;top:49.00px;width:14.31px;height:1.30px;background:rgba(190,190,190,.32);"></div><div class="a" style="left:155.02px;top:49.00px;width:17.78px;height:1.30px;background:rgba(190,190,190,.32);"></div><div class="a" style="left:174.00px;top:49.00px;width:7.10px;height:1.30px;background:rgba(190,190,190,.32);"></div><div class="a" style="left:10.50px;top:51.10px;width:13.33px;height:1.30px;background:rgba(190,190,190,.32);"></div><div class="a" style="left:25.03px;top:51.10px;width:10.22px;height:1.30px;background:rgba(190,190,190,.32);"></div><div class="a" style="left:36.45px;top:51.10px;width:9.07px;height:1.30px;background:rgba(190,190,190,.32);"></div><div class="a" style="left:46.71px;top:51.10px;width:12.85px;height:1.30px;background:rgba(190,190,190,.32);"></div><div class="a" style="left:60.76px;top:51.10px;width:16.70px;height:1.30px;background:rgba(190,190,190,.32);"></div><div class="a" style="left:78.66px;top:51.10px;width:9.09px;height:1.30px;background:rgba(190,190,190,.32);"></div><div class="a" style="left:88.95px;top:51.10px;width:4.80px;height:1.30px;background:rgba(190,190,190,.32);"></div><div class="a" style="left:94.95px;top:51.10px;width:13.57px;height:1.30px;background:rgba(190,190,190,.32);"></div><div class="a" style="left:109.72px;top:51.10px;width:10.27px;height:1.30px;background:rgba(190,190,190,.32);"></div><div class="a" style="left:121.19px;top:51.10px;width:16.48px;height:1.30px;background:rgba(190,190,190,.32);"></div><div class="a" style="left:138.86px;top:51.10px;width:14.50px;height:1.30px;background:rgba(190,190,190,.32);"></div><div class="a" style="left:154.56px;top:51.10px;width:10.75px;height:1.30px;background:rgba(190,190,190,.32);"></div><div class="a" style="left:166.51px;top:51.10px;width:6.02px;height:1.30px;background:rgba(190,190,190,.32);"></div><div class="a" style="left:173.74px;top:51.10px;width:8.27px;height:1.30px;background:rgba(190,190,190,.32);"></div></div><div class="a" style="left:0;top:0;width:100%;height:100%;opacity:.75"><div class="a" style="left:10.50px;top:54.50px;width:12.78px;height:1.30px;background:rgba(190,190,190,.32);"></div><div class="a" style="left:24.48px;top:54.50px;width:9.89px;height:1.30px;background:rgba(190,190,190,.32);"></div><div class="a" style="left:35.57px;top:54.50px;width:13.08px;height:1.30px;background:rgba(190,190,190,.32);"></div><div class="a" style="left:49.86px;top:54.50px;width:13.47px;height:1.30px;background:rgba(190,190,190,.32);"></div><div class="a" style="left:64.53px;top:54.50px;width:13.67px;height:1.30px;background:rgba(190,190,190,.32);"></div><div class="a" style="left:79.40px;top:54.50px;width:15.67px;height:1.30px;background:rgba(190,190,190,.32);"></div><div class="a" style="left:96.27px;top:54.50px;width:4.68px;height:1.30px;background:rgba(190,190,190,.32);"></div><div class="a" style="left:102.14px;top:54.50px;width:16.51px;height:1.30px;background:rgba(190,190,190,.32);"></div><div class="a" style="left:119.86px;top:54.50px;width:6.27px;height:1.30px;background:rgba(190,190,190,.32);"></div><div class="a" style="left:127.33px;top:54.50px;width:6.39px;height:1.30px;background:rgba(190,190,190,.32);"></div><div class="a" style="left:134.92px;top:54.50px;width:12.22px;height:1.30px;background:rgba(190,190,190,.32);"></div><div class="a" style="left:148.34px;top:54.50px;width:5.11px;height:1.30px;background:rgba(190,190,190,.32);"></div></div><div class="a" style="left:0;top:0;width:100%;height:100%;opacity:.75"><div class="a" style="left:10.50px;top:58.50px;width:6.76px;height:1.30px;background:rgba(190,190,190,.32);"></div><div class="a" style="left:18.46px;top:58.50px;width:9.64px;height:1.30px;background:rgba(190,190,190,.32);"></div><div class="a" style="left:29.31px;top:58.50px;width:9.07px;height:1.30px;background:rgba(190,190,190,.32);"></div><div class="a" style="left:39.57px;top:58.50px;width:7.74px;height:1.30px;background:rgba(190,190,190,.32);"></div><div class="a" style="left:48.51px;top:58.50px;width:11.02px;height:1.30px;background:rgba(190,190,190,.32);"></div><div class="a" style="left:60.72px;top:58.50px;width:6.24px;height:1.30px;background:rgba(190,190,190,.32);"></div><div class="a" style="left:68.16px;top:58.50px;width:4.62px;height:1.30px;background:rgba(190,190,190,.32);"></div><div class="a" style="left:73.98px;top:58.50px;width:13.26px;height:1.30px;background:rgba(190,190,190,.32);"></div><div class="a" style="left:88.44px;top:58.50px;width:9.76px;height:1.30px;background:rgba(190,190,190,.32);"></div><div class="a" style="left:99.40px;top:58.50px;width:9.08px;height:1.30px;background:rgba(190,190,190,.32);"></div><div class="a" style="left:109.68px;top:58.50px;width:5.28px;height:1.30px;background:rgba(190,190,190,.32);"></div></div><div class="a" style="left:10.50px;top:64.00px;width:18.00px;height:1.30px;background:rgba(230,230,230,.5);"></div><div class="a" style="left:13.00px;top:67.80px;width:25.00px;height:1.20px;background:rgba(220,220,220,.45);"></div><div class="a" style="left:38.00px;top:67.80px;width:40.00px;height:1.20px;background:rgba(80,110,200,.5);"></div><div class="a" style="left:6.00px;top:71.00px;width:175.00px;height:27.00px;background:#151515;"></div><div class="a" style="left:0;top:0;width:100%;height:100%;opacity:.75"><div class="a" style="left:14.00px;top:75.00px;width:11.93px;height:1.10px;background:rgba(170,195,170,.28);"></div><div class="a" style="left:27.13px;top:75.00px;width:7.72px;height:1.10px;background:rgba(190,190,190,.28);"></div><div class="a" style="left:36.05px;top:75.00px;width:16.26px;height:1.10px;background:rgba(210,200,180,.26);"></div><div class="a" style="left:53.51px;top:75.00px;width:13.49px;height:1.10px;background:rgba(180,180,180,.3);"></div><div class="a" style="left:68.20px;top:75.00px;width:6.68px;height:1.10px;background:rgba(170,195,170,.28);"></div><div class="a" style="left:18.00px;top:81.00px;width:9.52px;height:1.10px;background:rgba(185,200,215,.28);"></div><div class="a" style="left:28.72px;top:81.00px;width:14.39px;height:1.10px;background:rgba(185,200,215,.28);"></div><div class="a" style="left:44.32px;top:81.00px;width:11.00px;height:1.10px;background:rgba(200,200,200,.26);"></div><div class="a" style="left:56.51px;top:81.00px;width:13.97px;height:1.10px;background:rgba(180,180,180,.3);"></div><div class="a" style="left:71.68px;top:81.00px;width:11.30px;height:1.10px;background:rgba(185,200,215,.28);"></div><div class="a" style="left:84.18px;top:81.00px;width:11.48px;height:1.10px;background:rgba(170,195,170,.28);"></div><div class="a" style="left:16.00px;top:83.00px;width:12.01px;height:1.10px;background:rgba(190,190,190,.28);"></div><div class="a" style="left:16.00px;top:85.00px;width:7.83px;height:1.10px;background:rgba(180,180,180,.3);"></div><div class="a" style="left:25.03px;top:85.00px;width:15.04px;height:1.10px;background:rgba(180,180,180,.3);"></div><div class="a" style="left:41.27px;top:85.00px;width:2.19px;height:1.10px;background:rgba(180,180,180,.3);"></div><div class="a" style="left:18.00px;top:87.00px;width:16.58px;height:1.10px;background:rgba(170,195,170,.28);"></div><div class="a" style="left:18.00px;top:89.00px;width:5.84px;height:1.10px;background:rgba(170,195,170,.28);"></div><div class="a" style="left:25.04px;top:89.00px;width:13.85px;height:1.10px;background:rgba(170,195,170,.28);"></div><div class="a" style="left:40.09px;top:89.00px;width:7.85px;height:1.10px;background:rgba(210,200,180,.26);"></div><div class="a" style="left:49.14px;top:89.00px;width:12.47px;height:1.10px;background:rgba(170,195,170,.28);"></div><div class="a" style="left:14.00px;top:91.00px;width:13.46px;height:1.10px;background:rgba(170,195,170,.28);"></div><div class="a" style="left:28.66px;top:91.00px;width:15.23px;height:1.10px;background:rgba(180,180,180,.3);"></div><div class="a" style="left:45.09px;top:91.00px;width:6.38px;height:1.10px;background:rgba(170,195,170,.28);"></div><div class="a" style="left:14.00px;top:95.00px;width:4.83px;height:1.10px;background:rgba(210,200,180,.26);"></div><div class="a" style="left:20.03px;top:95.00px;width:11.77px;height:1.10px;background:rgba(210,200,180,.26);"></div><div class="a" style="left:33.00px;top:95.00px;width:4.55px;height:1.10px;background:rgba(210,200,180,.26);"></div><div class="a" style="left:38.75px;top:95.00px;width:5.55px;height:1.10px;background:rgba(180,180,180,.3);"></div><div class="a" style="left:45.50px;top:95.00px;width:17.11px;height:1.10px;background:rgba(210,200,180,.26);"></div><div class="a" style="left:63.81px;top:95.00px;width:2.12px;height:1.10px;background:rgba(210,200,180,.26);"></div></div><div class="a" style="left:1.00px;top:99.60px;width:180.50px;height:2.00px;background:#111111;"></div></div>
<div style="position:absolute;left:741.10px;top:535.06px;font-size:6.78px;line-height:6.78px;color:#363636;font-weight:400;white-space:nowrap;-webkit-text-stroke:0.12px #363636">Felix Boyke-CAI NatLPr-A2</div>
<div style="position:absolute;left:741.00px;top:548.16px;font-size:6.55px;line-height:6.55px;color:#585858;font-weight:400;white-space:nowrap;">CAI_NatLPr-Assignment_2 - Sommer 2025</div>
<svg class="a" style="left:741.80px;top:561.30px" width="7" height="6" viewBox="0 0 7 6"><path d="M1 5.2 L5.5 1.2" stroke="#7f9a80" stroke-width="1.7" stroke-linecap="round"/><path d="M1.2 4.6 L2.6 3.4" stroke="#4a7a3a" stroke-width="1"/><rect x="4.4" y="0.6" width="1.8" height="1.6" fill="#9ab0c8" transform="rotate(-40 5.3 1.4)"/></svg>
<div class="a" style="left:741.00px;top:569.60px;width:22px;height:6px;overflow:hidden"><div style="position:absolute;left:0.90px;top:-0.43px;font-size:6.3px;line-height:6.3px;color:#6f74a8;font-weight:400;white-space:nowrap;">Avatar</div></div>
<div style="position:absolute;left:764.40px;top:566.30px;font-size:6.5px;line-height:6.5px;color:#4a4a4a;font-weight:400;white-space:nowrap;">Gokul Srinivasagan</div>
<div class="th bl" style="left:161.40px;top:583.30px"><div class="a" style="left:0.00px;top:0.00px;width:182.50px;height:102.60px;background:#0a0a0a;"></div><div class="a" style="left:1.00px;top:1.00px;width:180.50px;height:100.60px;background:#171717;"></div><div class="a" style="left:1.00px;top:1.00px;width:180.50px;height:5.00px;background:#111111;"></div><div class="a" style="left:0;top:0;width:100%;height:100%;opacity:.75"><div class="a" style="left:2.00px;top:3.00px;width:7.12px;height:1.30px;background:rgba(220,220,220,.22);"></div><div class="a" style="left:10.32px;top:3.00px;width:9.93px;height:1.30px;background:rgba(220,220,220,.22);"></div><div class="a" style="left:21.46px;top:3.00px;width:14.14px;height:1.30px;background:rgba(220,220,220,.22);"></div><div class="a" style="left:36.80px;top:3.00px;width:9.60px;height:1.30px;background:rgba(220,220,220,.22);"></div><div class="a" style="left:47.60px;top:3.00px;width:10.44px;height:1.30px;background:rgba(220,220,220,.22);"></div></div><div class="a" style="left:173.00px;top:3.00px;width:6.00px;height:1.00px;background:rgba(220,220,220,.3);"></div><div class="a" style="left:0;top:0;width:100%;height:100%;opacity:.75"><div class="a" style="left:2.00px;top:6.30px;width:13.21px;height:1.30px;background:rgba(200,200,200,.2);"></div><div class="a" style="left:16.41px;top:6.30px;width:12.06px;height:1.30px;background:rgba(200,200,200,.2);"></div><div class="a" style="left:29.67px;top:6.30px;width:17.57px;height:1.30px;background:rgba(200,200,200,.2);"></div><div class="a" style="left:48.44px;top:6.30px;width:12.65px;height:1.30px;background:rgba(200,200,200,.2);"></div><div class="a" style="left:62.28px;top:6.30px;width:5.57px;height:1.30px;background:rgba(200,200,200,.2);"></div><div class="a" style="left:69.05px;top:6.30px;width:5.07px;height:1.30px;background:rgba(200,200,200,.2);"></div><div class="a" style="left:75.32px;top:6.30px;width:4.23px;height:1.30px;background:rgba(200,200,200,.2);"></div><div class="a" style="left:80.75px;top:6.30px;width:11.05px;height:1.30px;background:rgba(200,200,200,.2);"></div></div><div class="a" style="left:0;top:0;width:100%;height:100%;opacity:.75"><div class="a" style="left:2.00px;top:8.50px;width:14.47px;height:1.30px;background:rgba(200,200,200,.18);"></div><div class="a" style="left:17.67px;top:8.50px;width:16.88px;height:1.30px;background:rgba(200,200,200,.18);"></div><div class="a" style="left:35.75px;top:8.50px;width:14.07px;height:1.30px;background:rgba(200,200,200,.18);"></div><div class="a" style="left:51.02px;top:8.50px;width:9.85px;height:1.30px;background:rgba(200,200,200,.18);"></div></div><div class="a" style="left:170.00px;top:8.50px;width:10.00px;height:0.80px;background:rgba(200,200,200,.2);"></div><div style="position:absolute;left:5.20px;top:13.48px;font-size:4.4px;line-height:4.4px;color:rgba(235,235,235,.85);font-weight:400;white-space:nowrap;">Assignmnet 2 (100 points)</div></div>
<div class="th bl" style="left:354.10px;top:583.30px"><div class="a" style="left:0.00px;top:0.00px;width:182.50px;height:102.60px;background:#0a0a0a;"></div><div class="a" style="left:1.00px;top:1.00px;width:180.50px;height:100.60px;background:#171717;"></div><div class="a" style="left:1.00px;top:1.00px;width:180.50px;height:3.00px;background:#141414;"></div><div class="a" style="left:0;top:0;width:100%;height:100%;opacity:.75"><div class="a" style="left:8.00px;top:2.50px;width:11.81px;height:1.30px;background:rgba(220,220,220,.35);"></div><div class="a" style="left:21.01px;top:2.50px;width:11.92px;height:1.30px;background:rgba(220,220,220,.35);"></div><div class="a" style="left:34.12px;top:2.50px;width:8.28px;height:1.30px;background:rgba(220,220,220,.35);"></div><div class="a" style="left:43.60px;top:2.50px;width:13.68px;height:1.30px;background:rgba(220,220,220,.35);"></div><div class="a" style="left:58.48px;top:2.50px;width:4.41px;height:1.30px;background:rgba(220,220,220,.35);"></div><div class="a" style="left:64.09px;top:2.50px;width:7.64px;height:1.30px;background:rgba(220,220,220,.35);"></div></div><div class="a" style="left:150.00px;top:2.00px;width:28.00px;height:2.00px;background:rgba(220,220,220,.4);"></div><div class="a" style="left:1.00px;top:4.00px;width:7.00px;height:97.60px;background:#121212;"></div><div class="a" style="left:2.50px;top:6.00px;width:4.00px;height:4.00px;background:rgba(200,200,200,.45);border-radius:2px"></div><div class="a" style="left:8.00px;top:4.00px;width:22.00px;height:97.60px;background:#141414;"></div><div class="a" style="left:0;top:0;width:100%;height:100%;opacity:.75"><div class="a" style="left:11.00px;top:6.00px;width:11.77px;height:1.30px;background:rgba(220,220,220,.35);"></div></div><div class="a" style="left:11.00px;top:10.00px;width:14.00px;height:1.40px;background:rgba(230,230,230,.5);"></div><div class="a" style="left:0;top:0;width:100%;height:100%;opacity:.75"><div class="a" style="left:34.00px;top:6.00px;width:15.90px;height:1.30px;background:rgba(200,200,200,.3);"></div><div class="a" style="left:51.10px;top:6.00px;width:7.52px;height:1.30px;background:rgba(200,200,200,.3);"></div><div class="a" style="left:59.82px;top:6.00px;width:7.53px;height:1.30px;background:rgba(200,200,200,.3);"></div><div class="a" style="left:68.54px;top:6.00px;width:13.94px;height:1.30px;background:rgba(200,200,200,.3);"></div><div class="a" style="left:83.69px;top:6.00px;width:12.69px;height:1.30px;background:rgba(200,200,200,.3);"></div></div><div class="a" style="left:0;top:0;width:100%;height:100%;opacity:.75"><div class="a" style="left:34.00px;top:10.00px;width:5.87px;height:1.30px;background:rgba(200,200,200,.3);"></div><div class="a" style="left:41.07px;top:10.00px;width:14.19px;height:1.30px;background:rgba(200,200,200,.3);"></div><div class="a" style="left:56.46px;top:10.00px;width:4.39px;height:1.30px;background:rgba(200,200,200,.3);"></div><div class="a" style="left:62.05px;top:10.00px;width:17.62px;height:1.30px;background:rgba(200,200,200,.3);"></div><div class="a" style="left:80.87px;top:10.00px;width:6.86px;height:1.30px;background:rgba(200,200,200,.3);"></div><div class="a" style="left:88.93px;top:10.00px;width:16.79px;height:1.30px;background:rgba(200,200,200,.3);"></div><div class="a" style="left:106.92px;top:10.00px;width:8.74px;height:1.30px;background:rgba(200,200,200,.3);"></div><div class="a" style="left:116.86px;top:10.00px;width:10.46px;height:1.30px;background:rgba(200,200,200,.3);"></div><div class="a" style="left:128.53px;top:10.00px;width:4.31px;height:1.30px;background:rgba(200,200,200,.3);"></div></div><div class="a" style="left:0;top:0;width:100%;height:100%;opacity:.75"><div class="a" style="left:11.00px;top:13.50px;width:5.37px;height:1.30px;background:rgba(200,200,200,.25);"></div><div class="a" style="left:17.57px;top:13.50px;width:17.23px;height:1.30px;background:rgba(200,200,200,.25);"></div><div class="a" style="left:36.00px;top:13.50px;width:12.01px;height:1.30px;background:rgba(200,200,200,.25);"></div><div class="a" style="left:49.21px;top:13.50px;width:13.60px;height:1.30px;background:rgba(200,200,200,.25);"></div><div class="a" style="left:64.00px;top:13.50px;width:14.66px;height:1.30px;background:rgba(200,200,200,.25);"></div><div class="a" style="left:79.87px;top:13.50px;width:14.07px;height:1.30px;background:rgba(200,200,200,.25);"></div><div class="a" style="left:95.14px;top:13.50px;width:6.37px;height:1.30px;background:rgba(200,200,200,.25);"></div><div class="a" style="left:102.70px;top:13.50px;width:16.07px;height:1.30px;background:rgba(200,200,200,.25);"></div><div class="a" style="left:119.97px;top:13.50px;width:14.04px;height:1.30px;background:rgba(200,200,200,.25);"></div></div><div class="a" style="left:0;top:0;width:100%;height:100%;opacity:.75"><div class="a" style="left:11.00px;top:16.50px;width:16.73px;height:1.30px;background:rgba(200,200,200,.25);"></div><div class="a" style="left:28.93px;top:16.50px;width:4.88px;height:1.30px;background:rgba(200,200,200,.25);"></div><div class="a" style="left:35.00px;top:16.50px;width:4.07px;height:1.30px;background:rgba(200,200,200,.25);"></div><div class="a" style="left:40.27px;top:16.50px;width:6.79px;height:1.30px;background:rgba(200,200,200,.25);"></div></div></div>
<div class="a" style="left:0.00px;top:0.00px;width:1100.00px;height:16.50px;background:#2b4ad4;"></div>
<div class="a" style="left:0.00px;top:0.00px;width:1100.00px;height:1.30px;background:#2c3690;"></div>
<div class="a" style="left:0.00px;top:15.60px;width:1100.00px;height:0.90px;background:#2a40b8;"></div>
<svg class="a" style="left:166.3px;top:5.6px" width="7.6" height="6.4" viewBox="0 0 8 7">
<rect x="0.6" y="0.6" width="6.8" height="5.8" rx="1.2" fill="none" stroke="#e8edff" stroke-width="1"/>
<path d="M3 2 L5.3 3.5 L3 5 Z" fill="#e8edff"/></svg>
<div style="position:absolute;left:175.50px;top:7.03px;font-size:6.7px;line-height:6.7px;color:#f4f6ff;font-weight:400;white-space:nowrap;-webkit-text-stroke:0.12px #f4f6ff;transform:scaleY(1.1);transform-origin:0 5.67px">Media</div>
<svg class="a" style="left:204.7px;top:5.5px" width="7.2" height="6.6" viewBox="0 0 7.2 6.6">
<path d="M3.6 0.7 L6.3 2.1 L6.3 4.5 L3.6 5.9 L0.9 4.5 L0.9 2.1 Z" fill="none" stroke="#dfe6ff" stroke-width="1.2" stroke-linejoin="round"/>
<circle cx="3.6" cy="3.9" r="0.7" fill="#dfe6ff"/></svg>
<div style="position:absolute;left:213.70px;top:7.24px;font-size:6.45px;line-height:6.45px;color:#f4f6ff;font-weight:400;white-space:nowrap;-webkit-text-stroke:0.12px #f4f6ff;transform:scaleY(1.1);transform-origin:0 5.46px">Channels</div>
<svg class="a" style="left:251.4px;top:5.2px" width="7.5" height="7.5" viewBox="0 0 7.5 7.5">
<circle cx="3.75" cy="3.75" r="3.1" fill="none" stroke="#e8edff" stroke-width="0.9"/>
<path d="M3.75 1.8 V3.9 L5.2 4.8" fill="none" stroke="#e8edff" stroke-width="0.8"/></svg>
<div style="position:absolute;left:260.40px;top:6.90px;font-size:6.85px;line-height:6.85px;color:#f4f6ff;font-weight:400;white-space:nowrap;-webkit-text-stroke:0.12px #f4f6ff;transform:scaleY(1.1);transform-origin:0 5.80px">History</div>
<svg class="a" style="left:824.8px;top:5px" width="7.4" height="7.4" viewBox="0 0 7.4 7.4">
<circle cx="3.7" cy="3.7" r="3.4" fill="#dfe6ff"/>
<path d="M0.5 3.7 H6.9 M3.7 0.4 V7 M1 2.2 H6.4 M1 5.2 H6.4" stroke="#8797e0" stroke-width="0.35"/></svg>
<div style="position:absolute;left:834.00px;top:7.37px;font-size:6.3px;line-height:6.3px;color:#f0f3ff;font-weight:400;white-space:nowrap;-webkit-text-stroke:0.12px #f0f3ff;transform:scaleY(1.1);transform-origin:0 5.33px">EN</div>
<div class="a" style="left:847.6px;top:1.0px;width:74.2px;height:15.4px;border:0.9px solid #8797e6;border-radius:3px;background:#2a45cc"></div>
<svg class="a" style="left:853.4px;top:5.2px" width="6" height="7" viewBox="0 0 6 7">
<circle cx="3" cy="2" r="1.5" fill="none" stroke="#e8edff" stroke-width="0.8"/>
<path d="M0.5 6.5 C0.6 4.6 1.6 4 3 4 C4.4 4 5.4 4.6 5.5 6.5 Z" fill="none" stroke="#e8edff" stroke-width="0.8"/></svg>
<div style="position:absolute;left:861.60px;top:7.07px;font-size:6.65px;line-height:6.65px;color:#f4f6ff;font-weight:400;white-space:nowrap;-webkit-text-stroke:0.12px #f4f6ff;transform:scaleY(1.1);transform-origin:0 5.63px">Glurak Pokemon</div>
<svg class="a" style="left:912.8px;top:7.6px" width="4" height="3" viewBox="0 0 4 3"><path d="M0 0 H4 L2 2.6 Z" fill="#f0f3ff"/></svg>
<svg class="a" style="left:161.1px;top:23.6px" width="27.2" height="27" viewBox="0 0 27.2 27">
<defs><linearGradient id="lg" x1="0" y1="0" x2="1" y2="1"><stop offset="0" stop-color="#2f5ec0"/><stop offset="0.55" stop-color="#2549b0"/><stop offset="1" stop-color="#3f6cc8"/></linearGradient>
<radialGradient id="rg" cx="0.15" cy="0.7" r="0.6"><stop offset="0" stop-color="#1c2f8a" stop-opacity="0.7"/><stop offset="1" stop-color="#1c2f8a" stop-opacity="0"/></radialGradient></defs>
<rect x="0" y="0" width="27.2" height="27" rx="0.8" fill="url(#lg)"/>
<rect x="0" y="0" width="27.2" height="27" rx="0.8" fill="url(#rg)"/>
<g fill="none" stroke="#eef4ff" stroke-width="1.05" stroke-linecap="round">
<path d="M2.5 5 V22.3 M4.6 5 V22.3"/>
<path d="M4.6 11.8 H10.8 M4.6 14.8 H10.8"/>
<path d="M23.4 5.6 H16 C11.6 5.6 11.6 14.8 16 14.8 H19.5 C22.6 14.8 22.6 19.4 19.5 19.4 H9.5"/>
<path d="M23.4 8.4 H16.2 C14.3 8.4 14.3 11.8 16.2 11.8 H19.5 C26.2 11.8 26.2 22.2 19.5 22.2 H9.5"/>
</g></svg>
<div style="position:absolute;left:190.80px;top:29.89px;font-size:12.3px;line-height:12.3px;color:#1c1c1c;font-weight:700;white-space:nowrap;letter-spacing:-0.3px">HAnS</div>
<div style="position:absolute;left:191.60px;top:41.27px;font-size:2.75px;line-height:2.75px;color:#6a6a6a;font-weight:400;white-space:nowrap;">Hörsaalakustik Assistenz System</div>
<div style="position:absolute;left:164.90px;top:65.67px;font-size:6.65px;line-height:6.65px;color:#5a5a5a;font-weight:400;white-space:nowrap;">Recently uploaded media</div>
<div style="position:absolute;left:515.60px;top:34.97px;font-size:6.65px;line-height:6.65px;color:#727272;font-weight:400;white-space:nowrap;">Search for everything</div>
<svg class="a" style="left:620.8px;top:35px" width="7.5" height="7" viewBox="0 0 7.5 7">
<circle cx="3" cy="3" r="2.3" fill="none" stroke="#555" stroke-width="0.9"/>
<path d="M4.7 4.7 L6.8 6.6" stroke="#555" stroke-width="1"/></svg>
<div class="a" style="left:592.00px;top:44.60px;width:43.00px;height:0.60px;background:rgba(190,190,190,.22);"></div>
<div class="a" style="left:847.8px;top:17px;width:73.6px;height:121.8px;background:#fff;border:0.7px solid #e2e2e2;border-radius:3px;box-shadow:0 1px 3px rgba(0,0,0,.06)"></div>
<div style="position:absolute;left:863.60px;top:25.59px;font-size:6.75px;line-height:6.75px;color:#3c3c3c;font-weight:400;white-space:nowrap;">API</div>
<div style="position:absolute;left:863.60px;top:39.19px;font-size:6.75px;line-height:6.75px;color:#3c3c3c;font-weight:400;white-space:nowrap;">Channel</div>
<div style="position:absolute;left:863.60px;top:52.79px;font-size:6.75px;line-height:6.75px;color:#3c3c3c;font-weight:400;white-space:nowrap;">Survey</div>
<div style="position:absolute;left:863.60px;top:66.29px;font-size:6.75px;line-height:6.75px;color:#3c3c3c;font-weight:400;white-space:nowrap;">Announcement</div>
<div style="position:absolute;left:863.60px;top:79.69px;font-size:6.75px;line-height:6.75px;color:#3c3c3c;font-weight:400;white-space:nowrap;">Upload</div>
<svg class="a" style="left:854.6px;top:24.6px" width="7" height="6.6" viewBox="0 0 7 6.6">
<circle cx="3.5" cy="1.4" r="1.35" fill="#111"/><circle cx="3.5" cy="5.2" r="1.35" fill="#111"/>
<circle cx="1.5" cy="3.3" r="1.35" fill="#111"/><circle cx="5.5" cy="3.3" r="1.35" fill="#111"/>
<circle cx="3.5" cy="3.3" r="0.7" fill="#fff"/></svg>
<svg class="a" style="left:854.4px;top:38.3px" width="7.4" height="6.8" viewBox="0 0 7.4 6.8">
<circle cx="3.6" cy="3.4" r="2.95" fill="none" stroke="#666" stroke-width="0.8"/>
<circle cx="3.6" cy="3.4" r="0.9" fill="#777"/></svg>
<div style="position:absolute;left:856.60px;top:54.01px;font-size:4.6px;line-height:4.6px;color:#555;font-weight:700;white-space:nowrap;">?</div>
<svg class="a" style="left:854.4px;top:65.6px" width="7.2" height="6.4" viewBox="0 0 7.2 6.4">
<path d="M0.6 2 H2.6 L5.9 0.6 V5.4 L2.6 4 H0.6 Z" fill="none" stroke="#444" stroke-width="0.9" stroke-linejoin="round"/>
<path d="M1.4 4 L2.2 6.1" stroke="#444" stroke-width="0.9"/>
<path d="M6.6 2.2 V3.8" stroke="#444" stroke-width="0.7"/></svg>
<svg class="a" style="left:854.8px;top:78.6px" width="6.6" height="7" viewBox="0 0 6.6 7">
<rect x="0.6" y="2.2" width="5.2" height="4.3" rx="1.4" fill="none" stroke="#555" stroke-width="0.8"/>
<path d="M2.3 2.2 V1.3 C2.3 0.5 4.1 0.5 4.1 1.3 V2.2" fill="none" stroke="#555" stroke-width="0.75"/>
<path d="M1.6 3.6 C2.5 4.5 3.9 4.5 4.8 3.6" fill="none" stroke="#555" stroke-width="0.5"/></svg>
<div class="a" style="left:848.30px;top:88.80px;width:73.00px;height:12.90px;background:#2b4ad4;"></div>
<svg class="a" style="left:854.4px;top:92px" width="7.2" height="6" viewBox="0 0 7.2 6">
<circle cx="1.4" cy="1.4" r="1.2" fill="#eef2ff"/><circle cx="1.4" cy="4.6" r="1.2" fill="#eef2ff"/>
<path d="M3.4 1.4 H6.9 M3.4 4.6 H6.9" stroke="#eef2ff" stroke-width="1.2"/></svg>
<div style="position:absolute;left:863.50px;top:92.79px;font-size:6.75px;line-height:6.75px;color:#f6f8ff;font-weight:400;white-space:nowrap;">Your Media</div>
<svg class="a" style="left:890.2px;top:93px" width="8.4" height="12" viewBox="0 0 9 13.5">
<path d="M2.9 0.8 C3.7 0.8 4 1.3 4 2 V5.6 C4.5 5.2 5.3 5.3 5.5 5.9 C6 5.5 6.8 5.7 7 6.3 C7.5 6 8.3 6.3 8.3 7 V9.8 C8.3 11.8 7.3 12.8 5.7 12.8 H4.4 C3.4 12.8 2.8 12.3 2.3 11.5 L0.7 8.6 C0.3 7.9 0.9 7.3 1.6 7.7 L1.9 8 V2 C1.9 1.3 2.2 0.8 2.9 0.8 Z" fill="#fff" stroke="#222" stroke-width="0.7"/></svg>
<div class="a" style="left:852.5px;top:107.6px;width:4.6px;height:4.5px;border-radius:50%;background:#b4b4b4"></div>
<div style="position:absolute;left:866.90px;top:106.89px;font-size:6.75px;line-height:6.75px;color:#3c3c3c;font-weight:400;white-space:nowrap;">Evaluation</div>
<div class="a" style="left:849.00px;top:117.60px;width:71.00px;height:0.60px;background:rgba(0,0,0,.06);"></div>
<svg class="a" style="left:854.2px;top:125.6px" width="7" height="6.4" viewBox="0 0 7 6.4">
<path d="M4.6 1.6 V1.2 C4.6 0.8 4.3 0.5 3.9 0.5 H1.2 C0.8 0.5 0.5 0.8 0.5 1.2 V5.2 C0.5 5.6 0.8 5.9 1.2 5.9 H3.9 C4.3 5.9 4.6 5.6 4.6 5.2 V4.8" fill="none" stroke="#555" stroke-width="0.8"/>
<path d="M2.4 3.2 H6.6 M5.1 1.8 L6.6 3.2 L5.1 4.6" fill="none" stroke="#555" stroke-width="0.8"/></svg>
<div style="position:absolute;left:863.60px;top:126.49px;font-size:6.75px;line-height:6.75px;color:#3c3c3c;font-weight:400;white-space:nowrap;">Logout</div>
<div class="a" style="left:0.00px;top:601.50px;width:1100.00px;height:15.80px;background:#2b4ad4;"></div>
<div class="a" style="left:0.00px;top:601.30px;width:1100.00px;height:0.90px;background:#2d3fb0;"></div>
<div class="a" style="left:0.00px;top:617.00px;width:1100.00px;height:2.00px;background:#3d4050;"></div>
<div style="position:absolute;left:168.60px;top:608.64px;font-size:5.15px;line-height:5.15px;color:#f6f8ff;font-weight:400;white-space:nowrap;-webkit-text-stroke:0.1px #f6f8ff">How to contact us</div>
<div style="position:absolute;left:222.10px;top:608.64px;font-size:5.15px;line-height:5.15px;color:#f6f8ff;font-weight:400;white-space:nowrap;-webkit-text-stroke:0.1px #f6f8ff">Legal notice</div>
<div style="position:absolute;left:261.90px;top:608.64px;font-size:5.15px;line-height:5.15px;color:#f6f8ff;font-weight:400;white-space:nowrap;-webkit-text-stroke:0.1px #f6f8ff">Data protection</div>
<div style="position:absolute;left:309.90px;top:608.64px;font-size:5.15px;line-height:5.15px;color:#f6f8ff;font-weight:400;white-space:nowrap;-webkit-text-stroke:0.1px #f6f8ff">Terms of usage</div>
<div class="a" style="left:0.00px;top:608.00px;width:36.80px;height:11.00px;background:#202024;"></div>
<div style="position:absolute;left:-1.80px;top:610.48px;font-size:6.05px;line-height:6.05px;color:#f5f5f5;font-weight:400;white-space:nowrap;-webkit-text-stroke:0.15px #f5f5f5">oad/overview</div>
</body></html>
